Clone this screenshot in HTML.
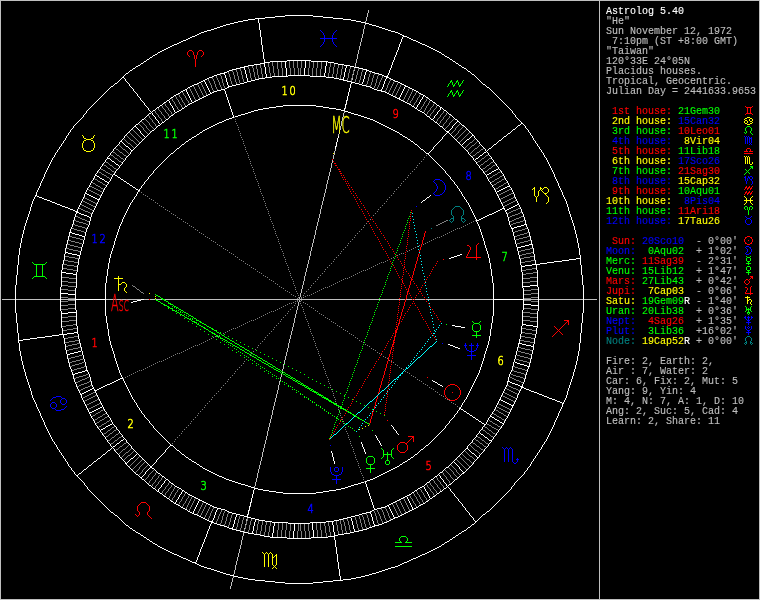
<!DOCTYPE html>
<html><head><meta charset="utf-8"><title>Astrolog 5.40</title>
<style>
html,body{margin:0;padding:0;background:#000;}
#c{position:relative;width:760px;height:600px;overflow:hidden;background:#000;}
#side{will-change:transform;-webkit-text-stroke:0.12px;position:absolute;left:606px;top:7px;margin:0;font-family:"Liberation Mono",monospace;font-size:10px;line-height:10px;color:#BFBFBF;white-space:pre;letter-spacing:0;}
text{font-family:"DejaVu Sans","Liberation Sans",sans-serif;font-weight:200;text-anchor:middle;}
text.hn{font-size:12.3px;stroke-width:0.55px;vector-effect:non-scaling-stroke;}
text.ob{font-size:23.3px;stroke-width:0.35px;vector-effect:non-scaling-stroke;}
</style></head><body><div id="c">
<svg width="760" height="600" viewBox="0 0 760 600" shape-rendering="crispEdges" style="position:absolute;left:0;top:0;will-change:transform"><path fill="#BFBFBF" d="M0 0h760v1h-760zM365 24h1v1h-1zM354 70h1v1h-1zM353 74h1v1h-1zM351 81h1v1h-1zM347 100h1v1h-1zM346 104h1v1h-1zM345 108h1v1h-1zM336 146h1v1h-1zM2 299h13v1h-13zM16 299h44v1h-44zM61 299h14v1h-14zM106 299h35v1h-35zM144 299h5v1h-5zM150 299h5v1h-5zM156 299h6v1h-6zM165 299h134v1h-134zM300 299h105v1h-105zM406 299h6v1h-6zM413 299h1v1h-1zM415 299h10v1h-10zM426 299h67v1h-67zM524 299h14v1h-14zM539 299h44v1h-44zM584 299h13v1h-13zM282 372h1v1h-1zM280 380h1v1h-1zM251 502h1v1h-1zM250 506h1v1h-1zM249 510h1v1h-1zM248 514h1v1h-1zM245 524h1v1h-1zM244 528h1v1h-1zM233 574h1v1h-1zM0 599h760v1h-760zM0 1h1v598h-1zM230 586h1v3h-1zM231 582h1v4h-1zM232 578h1v4h-1zM233 576h1v2h-1zM234 570h1v4h-1zM235 565h1v5h-1zM236 561h1v4h-1zM237 557h1v4h-1zM238 553h1v4h-1zM239 549h1v4h-1zM240 545h1v4h-1zM241 540h1v5h-1zM242 536h1v4h-1zM243 532h1v4h-1zM246 519h1v2h-1zM254 486h1v2h-1zM255 482h1v4h-1zM256 478h1v4h-1zM257 473h1v5h-1zM258 469h1v4h-1zM259 465h1v4h-1zM260 461h1v4h-1zM261 457h1v4h-1zM262 452h1v5h-1zM263 448h1v4h-1zM264 444h1v4h-1zM265 440h1v4h-1zM266 436h1v4h-1zM267 431h1v5h-1zM268 427h1v4h-1zM269 423h1v4h-1zM270 419h1v4h-1zM271 415h1v4h-1zM272 410h1v5h-1zM273 406h1v4h-1zM274 402h1v4h-1zM275 398h1v4h-1zM276 394h1v4h-1zM277 390h1v4h-1zM278 385h1v5h-1zM279 381h1v4h-1zM280 377h1v2h-1zM281 374h1v3h-1zM282 369h1v2h-1zM283 364h1v5h-1zM284 360h1v4h-1zM285 356h1v4h-1zM286 352h1v4h-1zM287 348h1v4h-1zM288 343h1v5h-1zM289 339h1v4h-1zM290 335h1v4h-1zM291 331h1v4h-1zM292 327h1v4h-1zM293 323h1v4h-1zM294 318h1v5h-1zM295 314h1v4h-1zM296 310h1v4h-1zM297 306h1v4h-1zM298 302h1v4h-1zM299 297h1v2h-1zM299 300h1v2h-1zM300 293h1v4h-1zM301 289h1v4h-1zM302 285h1v4h-1zM303 281h1v4h-1zM304 276h1v5h-1zM305 272h1v4h-1zM306 268h1v4h-1zM307 264h1v4h-1zM308 260h1v4h-1zM309 256h1v4h-1zM310 251h1v5h-1zM311 247h1v4h-1zM312 243h1v4h-1zM313 239h1v4h-1zM314 235h1v4h-1zM315 230h1v5h-1zM316 226h1v4h-1zM317 222h1v4h-1zM318 218h1v4h-1zM319 214h1v4h-1zM320 209h1v5h-1zM321 205h1v4h-1zM322 201h1v4h-1zM323 197h1v4h-1zM324 193h1v4h-1zM325 189h1v4h-1zM326 184h1v5h-1zM327 180h1v4h-1zM328 176h1v4h-1zM329 172h1v4h-1zM330 168h1v4h-1zM331 163h1v5h-1zM332 160h1v3h-1zM333 155h1v4h-1zM334 151h1v4h-1zM335 149h1v2h-1zM338 134h1v2h-1zM339 130h1v4h-1zM340 126h1v4h-1zM341 121h1v5h-1zM342 117h1v4h-1zM343 113h1v4h-1zM344 111h1v2h-1zM352 78h1v2h-1zM355 63h1v4h-1zM356 59h1v4h-1zM357 54h1v5h-1zM358 50h1v4h-1zM359 46h1v4h-1zM360 42h1v4h-1zM361 38h1v4h-1zM362 34h1v4h-1zM363 29h1v5h-1zM364 25h1v4h-1zM365 21h1v2h-1zM366 17h1v4h-1zM367 13h1v4h-1zM368 10h1v3h-1zM599 1h1v598h-1zM759 1h1v598h-1z"/><path fill="#7F7F7F" d="M394 81h1v1h-1zM197 84h1v1h-1zM232 84h1v1h-1zM401 84h1v1h-1zM193 86h1v1h-1zM189 88h1v1h-1zM409 88h1v1h-1zM217 89h1v1h-1zM182 92h1v1h-1zM388 92h1v1h-1zM416 92h1v1h-1zM178 94h1v1h-1zM420 94h1v1h-1zM184 95h1v1h-1zM414 95h1v1h-1zM175 96h1v1h-1zM180 97h1v1h-1zM418 97h1v1h-1zM171 98h1v1h-1zM427 98h1v1h-1zM177 99h1v1h-1zM187 100h1v1h-1zM411 100h1v1h-1zM173 101h1v1h-1zM425 101h1v1h-1zM183 102h1v1h-1zM415 102h1v1h-1zM164 103h1v1h-1zM189 103h1v1h-1zM409 103h1v1h-1zM434 103h1v1h-1zM180 104h1v1h-1zM185 105h1v1h-1zM413 105h1v1h-1zM427 105h1v1h-1zM166 106h1v1h-1zM176 106h1v1h-1zM422 106h1v1h-1zM432 106h1v1h-1zM167 107h1v1h-1zM182 107h1v1h-1zM431 107h1v1h-1zM163 108h1v1h-1zM435 108h1v1h-1zM164 109h1v1h-1zM178 109h1v1h-1zM420 109h1v1h-1zM434 109h1v1h-1zM159 110h1v1h-1zM169 110h1v1h-1zM429 110h1v1h-1zM160 111h1v1h-1zM170 111h1v1h-1zM428 111h1v1h-1zM166 112h1v1h-1zM432 112h1v1h-1zM156 113h1v1h-1zM167 113h1v1h-1zM431 113h1v1h-1zM442 113h1v1h-1zM157 114h1v1h-1zM162 114h1v1h-1zM172 114h1v1h-1zM426 114h1v1h-1zM441 114h1v1h-1zM148 115h1v1h-1zM163 115h1v1h-1zM445 115h1v1h-1zM450 115h1v1h-1zM169 116h1v1h-1zM429 116h1v1h-1zM444 116h1v1h-1zM159 117h1v1h-1zM234 117h1v1h-1zM439 117h1v1h-1zM150 118h1v1h-1zM160 118h1v1h-1zM165 118h1v1h-1zM438 118h1v1h-1zM448 118h1v1h-1zM145 119h1v1h-1zM151 119h1v1h-1zM235 119h1v1h-1zM442 119h1v1h-1zM447 119h1v1h-1zM453 119h1v1h-1zM146 120h1v1h-1zM441 120h1v1h-1zM452 120h1v1h-1zM141 121h1v1h-1zM147 121h1v1h-1zM162 121h1v1h-1zM235 121h1v1h-1zM436 121h1v1h-1zM451 121h1v1h-1zM142 122h1v1h-1zM148 122h1v1h-1zM153 122h1v1h-1zM445 122h1v1h-1zM450 122h1v1h-1zM143 123h1v1h-1zM154 123h1v1h-1zM236 123h1v1h-1zM439 123h1v1h-1zM444 123h1v1h-1zM139 124h1v1h-1zM144 124h1v1h-1zM459 124h1v1h-1zM140 125h1v1h-1zM145 125h1v1h-1zM150 125h1v1h-1zM237 125h1v1h-1zM448 125h1v1h-1zM458 125h1v1h-1zM141 126h1v1h-1zM151 126h1v1h-1zM156 126h1v1h-1zM442 126h1v1h-1zM447 126h1v1h-1zM457 126h1v1h-1zM463 126h1v1h-1zM142 127h1v1h-1zM152 127h1v1h-1zM238 127h1v1h-1zM446 127h1v1h-1zM456 127h1v1h-1zM462 127h1v1h-1zM147 128h1v1h-1zM153 128h1v1h-1zM445 128h1v1h-1zM461 128h1v1h-1zM132 129h1v1h-1zM148 129h1v1h-1zM238 129h1v1h-1zM460 129h1v1h-1zM466 129h1v1h-1zM133 130h1v1h-1zM144 130h1v1h-1zM149 130h1v1h-1zM454 130h1v1h-1zM459 130h1v1h-1zM465 130h1v1h-1zM134 131h1v1h-1zM145 131h1v1h-1zM150 131h1v1h-1zM239 131h1v1h-1zM453 131h1v1h-1zM464 131h1v1h-1zM129 132h1v1h-1zM135 132h1v1h-1zM146 132h1v1h-1zM452 132h1v1h-1zM463 132h1v1h-1zM469 132h1v1h-1zM130 133h1v1h-1zM136 133h1v1h-1zM147 133h1v1h-1zM240 133h1v1h-1zM451 133h1v1h-1zM457 133h1v1h-1zM462 133h1v1h-1zM468 133h1v1h-1zM131 134h1v1h-1zM137 134h1v1h-1zM456 134h1v1h-1zM461 134h1v1h-1zM467 134h1v1h-1zM126 135h1v1h-1zM132 135h1v1h-1zM138 135h1v1h-1zM240 135h1v1h-1zM455 135h1v1h-1zM460 135h1v1h-1zM466 135h1v1h-1zM127 136h1v1h-1zM133 136h1v1h-1zM139 136h1v1h-1zM454 136h1v1h-1zM459 136h1v1h-1zM465 136h1v1h-1zM128 137h1v1h-1zM134 137h1v1h-1zM140 137h1v1h-1zM241 137h1v1h-1zM458 137h1v1h-1zM464 137h1v1h-1zM129 138h1v1h-1zM135 138h1v1h-1zM141 138h1v1h-1zM457 138h1v1h-1zM463 138h1v1h-1zM124 139h1v1h-1zM130 139h1v1h-1zM136 139h1v1h-1zM142 139h1v1h-1zM242 139h1v1h-1zM456 139h1v1h-1zM462 139h1v1h-1zM474 139h1v1h-1zM125 140h1v1h-1zM131 140h2v1h-2zM137 140h1v1h-1zM461 140h1v1h-1zM473 140h1v1h-1zM126 141h1v1h-1zM133 141h1v1h-1zM138 141h1v1h-1zM243 141h1v1h-1zM460 141h1v1h-1zM472 141h1v1h-1zM477 141h1v1h-1zM127 142h1v1h-1zM134 142h1v1h-1zM139 142h1v1h-1zM459 142h1v1h-1zM470 142h2v1h-2zM476 142h1v1h-1zM128 143h2v1h-2zM135 143h1v1h-1zM243 143h1v1h-1zM469 143h1v1h-1zM475 143h1v1h-1zM130 144h1v1h-1zM136 144h1v1h-1zM468 144h1v1h-1zM474 144h1v1h-1zM119 145h1v1h-1zM131 145h1v1h-1zM244 145h1v1h-1zM467 145h1v1h-1zM472 145h2v1h-2zM479 145h1v1h-1zM120 146h1v1h-1zM132 146h1v1h-1zM466 146h1v1h-1zM471 146h1v1h-1zM478 146h1v1h-1zM121 147h1v1h-1zM133 147h1v1h-1zM245 147h1v1h-1zM465 147h1v1h-1zM470 147h1v1h-1zM477 147h1v1h-1zM115 148h1v1h-1zM122 148h1v1h-1zM469 148h1v1h-1zM475 148h2v1h-2zM483 148h1v1h-1zM116 149h2v1h-2zM123 149h2v1h-2zM245 149h1v1h-1zM468 149h1v1h-1zM474 149h1v1h-1zM481 149h2v1h-2zM118 150h1v1h-1zM125 150h1v1h-1zM467 150h1v1h-1zM473 150h1v1h-1zM480 150h1v1h-1zM119 151h1v1h-1zM126 151h1v1h-1zM246 151h1v1h-1zM472 151h1v1h-1zM479 151h1v1h-1zM113 152h2v1h-2zM120 152h2v1h-2zM127 152h1v1h-1zM471 152h1v1h-1zM477 152h2v1h-2zM115 153h1v1h-1zM122 153h1v1h-1zM128 153h1v1h-1zM247 153h1v1h-1zM470 153h1v1h-1zM476 153h1v1h-1zM116 154h1v1h-1zM123 154h1v1h-1zM475 154h1v1h-1zM111 155h2v1h-2zM117 155h2v1h-2zM124 155h2v1h-2zM248 155h1v1h-1zM426 155h1v1h-1zM473 155h2v1h-2zM486 155h2v1h-2zM113 156h1v1h-1zM119 156h1v1h-1zM126 156h1v1h-1zM472 156h1v1h-1zM485 156h1v1h-1zM114 157h1v1h-1zM120 157h1v1h-1zM248 157h1v1h-1zM424 157h1v1h-1zM484 157h1v1h-1zM115 158h2v1h-2zM121 158h2v1h-2zM482 158h2v1h-2zM489 158h2v1h-2zM117 159h1v1h-1zM123 159h1v1h-1zM249 159h1v1h-1zM423 159h1v1h-1zM481 159h1v1h-1zM488 159h1v1h-1zM118 160h1v1h-1zM480 160h1v1h-1zM487 160h1v1h-1zM119 161h2v1h-2zM250 161h1v1h-1zM421 161h1v1h-1zM478 161h2v1h-2zM485 161h2v1h-2zM106 162h2v1h-2zM121 162h1v1h-1zM477 162h1v1h-1zM484 162h1v1h-1zM491 162h2v1h-2zM108 163h1v1h-1zM250 163h1v1h-1zM419 163h1v1h-1zM483 163h1v1h-1zM490 163h1v1h-1zM103 164h1v1h-1zM109 164h1v1h-1zM481 164h2v1h-2zM489 164h1v1h-1zM495 164h1v1h-1zM104 165h2v1h-2zM110 165h2v1h-2zM251 165h1v1h-1zM417 165h1v1h-1zM480 165h1v1h-1zM487 165h2v1h-2zM493 165h2v1h-2zM106 166h1v1h-1zM112 166h1v1h-1zM486 166h1v1h-1zM492 166h1v1h-1zM107 167h1v1h-1zM113 167h1v1h-1zM252 167h1v1h-1zM416 167h1v1h-1zM485 167h1v1h-1zM491 167h1v1h-1zM108 168h2v1h-2zM114 168h2v1h-2zM483 168h2v1h-2zM489 168h2v1h-2zM101 169h2v1h-2zM110 169h1v1h-1zM116 169h1v1h-1zM253 169h1v1h-1zM414 169h1v1h-1zM482 169h1v1h-1zM488 169h1v1h-1zM103 170h2v1h-2zM111 170h1v1h-1zM487 170h1v1h-1zM98 171h1v1h-1zM105 171h1v1h-1zM112 171h2v1h-2zM253 171h1v1h-1zM412 171h1v1h-1zM485 171h2v1h-2zM500 171h1v1h-1zM99 172h2v1h-2zM106 172h2v1h-2zM114 172h1v1h-1zM484 172h1v1h-1zM498 172h2v1h-2zM101 173h1v1h-1zM108 173h2v1h-2zM254 173h1v1h-1zM410 173h1v1h-1zM497 173h1v1h-1zM102 174h2v1h-2zM110 174h2v1h-2zM495 174h2v1h-2zM104 175h2v1h-2zM255 175h1v1h-1zM408 175h1v1h-1zM493 175h2v1h-2zM502 175h1v1h-1zM106 176h1v1h-1zM492 176h1v1h-1zM500 176h2v1h-2zM107 177h2v1h-2zM255 177h1v1h-1zM407 177h1v1h-1zM490 177h2v1h-2zM499 177h1v1h-1zM94 178h1v1h-1zM109 178h1v1h-1zM489 178h1v1h-1zM497 178h2v1h-2zM504 178h1v1h-1zM95 179h2v1h-2zM256 179h1v1h-1zM405 179h1v1h-1zM495 179h2v1h-2zM502 179h2v1h-2zM97 180h1v1h-1zM494 180h1v1h-1zM501 180h1v1h-1zM98 181h2v1h-2zM257 181h1v1h-1zM403 181h1v1h-1zM492 181h2v1h-2zM499 181h2v1h-2zM92 182h1v1h-1zM100 182h2v1h-2zM491 182h1v1h-1zM497 182h2v1h-2zM506 182h1v1h-1zM93 183h2v1h-2zM102 183h1v1h-1zM258 183h1v1h-1zM401 183h1v1h-1zM496 183h1v1h-1zM504 183h2v1h-2zM95 184h1v1h-1zM103 184h2v1h-2zM494 184h2v1h-2zM503 184h1v1h-1zM96 185h2v1h-2zM105 185h1v1h-1zM258 185h1v1h-1zM400 185h1v1h-1zM493 185h1v1h-1zM501 185h2v1h-2zM90 186h2v1h-2zM98 186h2v1h-2zM499 186h2v1h-2zM92 187h2v1h-2zM100 187h1v1h-1zM259 187h1v1h-1zM398 187h1v1h-1zM498 187h1v1h-1zM94 188h2v1h-2zM101 188h2v1h-2zM496 188h2v1h-2zM88 189h1v1h-1zM96 189h2v1h-2zM103 189h1v1h-1zM260 189h1v1h-1zM396 189h1v1h-1zM495 189h1v1h-1zM509 189h2v1h-2zM89 190h2v1h-2zM98 190h2v1h-2zM507 190h2v1h-2zM91 191h2v1h-2zM100 191h2v1h-2zM139 191h1v1h-1zM260 191h1v1h-1zM394 191h1v1h-1zM505 191h2v1h-2zM93 192h2v1h-2zM141 192h1v1h-1zM503 192h2v1h-2zM95 193h2v1h-2zM261 193h1v1h-1zM393 193h1v1h-1zM501 193h2v1h-2zM511 193h2v1h-2zM97 194h2v1h-2zM143 194h1v1h-1zM499 194h2v1h-2zM509 194h2v1h-2zM99 195h2v1h-2zM145 195h1v1h-1zM262 195h1v1h-1zM391 195h1v1h-1zM498 195h1v1h-1zM507 195h2v1h-2zM147 196h1v1h-1zM505 196h2v1h-2zM84 197h1v1h-1zM263 197h1v1h-1zM389 197h1v1h-1zM503 197h2v1h-2zM513 197h2v1h-2zM85 198h2v1h-2zM149 198h1v1h-1zM501 198h2v1h-2zM511 198h2v1h-2zM87 199h2v1h-2zM151 199h1v1h-1zM263 199h1v1h-1zM387 199h1v1h-1zM500 199h1v1h-1zM509 199h2v1h-2zM89 200h2v1h-2zM153 200h1v1h-1zM507 200h2v1h-2zM515 200h1v1h-1zM83 201h2v1h-2zM91 201h2v1h-2zM264 201h1v1h-1zM386 201h1v1h-1zM505 201h2v1h-2zM513 201h2v1h-2zM85 202h2v1h-2zM93 202h2v1h-2zM155 202h1v1h-1zM503 202h2v1h-2zM511 202h2v1h-2zM87 203h2v1h-2zM95 203h2v1h-2zM157 203h1v1h-1zM265 203h1v1h-1zM384 203h1v1h-1zM502 203h1v1h-1zM509 203h2v1h-2zM81 204h1v1h-1zM89 204h2v1h-2zM507 204h2v1h-2zM82 205h2v1h-2zM91 205h2v1h-2zM159 205h1v1h-1zM265 205h1v1h-1zM382 205h1v1h-1zM505 205h2v1h-2zM84 206h2v1h-2zM93 206h2v1h-2zM161 206h1v1h-1zM504 206h1v1h-1zM86 207h2v1h-2zM163 207h1v1h-1zM266 207h1v1h-1zM380 207h1v1h-1zM79 208h2v1h-2zM88 208h2v1h-2zM518 208h2v1h-2zM81 209h2v1h-2zM90 209h2v1h-2zM165 209h1v1h-1zM267 209h1v1h-1zM378 209h1v1h-1zM516 209h2v1h-2zM83 210h2v1h-2zM92 210h1v1h-1zM167 210h1v1h-1zM513 210h3v1h-3zM85 211h3v1h-3zM169 211h1v1h-1zM268 211h1v1h-1zM377 211h1v1h-1zM511 211h2v1h-2zM88 212h2v1h-2zM509 212h2v1h-2zM520 212h2v1h-2zM90 213h2v1h-2zM171 213h1v1h-1zM268 213h1v1h-1zM375 213h1v1h-1zM507 213h2v1h-2zM518 213h2v1h-2zM173 214h1v1h-1zM515 214h3v1h-3zM175 215h1v1h-1zM269 215h1v1h-1zM373 215h1v1h-1zM512 215h3v1h-3zM76 216h2v1h-2zM510 216h2v1h-2zM521 216h2v1h-2zM78 217h2v1h-2zM177 217h1v1h-1zM270 217h1v1h-1zM509 217h1v1h-1zM519 217h2v1h-2zM80 218h2v1h-2zM179 218h1v1h-1zM516 218h3v1h-3zM82 219h3v1h-3zM181 219h1v1h-1zM270 219h1v1h-1zM370 219h1v1h-1zM514 219h2v1h-2zM74 220h2v1h-2zM85 220h2v1h-2zM446 220h2v1h-2zM475 220h1v1h-1zM512 220h2v1h-2zM523 220h2v1h-2zM76 221h3v1h-3zM87 221h2v1h-2zM183 221h1v1h-1zM271 221h1v1h-1zM368 221h1v1h-1zM444 221h2v1h-2zM473 221h1v1h-1zM510 221h2v1h-2zM520 221h3v1h-3zM79 222h4v1h-4zM185 222h1v1h-1zM442 222h2v1h-2zM471 222h1v1h-1zM516 222h4v1h-4zM83 223h3v1h-3zM187 223h1v1h-1zM272 223h1v1h-1zM366 223h1v1h-1zM440 223h2v1h-2zM469 223h1v1h-1zM513 223h3v1h-3zM73 224h2v1h-2zM86 224h2v1h-2zM438 224h2v1h-2zM467 224h1v1h-1zM511 224h2v1h-2zM75 225h3v1h-3zM189 225h1v1h-1zM273 225h1v1h-1zM364 225h1v1h-1zM436 225h2v1h-2zM465 225h1v1h-1zM78 226h4v1h-4zM191 226h1v1h-1zM463 226h1v1h-1zM82 227h3v1h-3zM193 227h1v1h-1zM273 227h1v1h-1zM363 227h1v1h-1zM461 227h1v1h-1zM72 228h2v1h-2zM85 228h2v1h-2zM457 228h1v1h-1zM459 228h1v1h-1zM525 228h2v1h-2zM74 229h3v1h-3zM195 229h1v1h-1zM274 229h1v1h-1zM361 229h1v1h-1zM455 229h1v1h-1zM522 229h3v1h-3zM77 230h4v1h-4zM197 230h1v1h-1zM453 230h1v1h-1zM518 230h4v1h-4zM81 231h3v1h-3zM275 231h1v1h-1zM359 231h1v1h-1zM451 231h1v1h-1zM515 231h3v1h-3zM84 232h1v1h-1zM199 232h1v1h-1zM449 232h1v1h-1zM514 232h1v1h-1zM527 232h2v1h-2zM201 233h1v1h-1zM275 233h1v1h-1zM357 233h1v1h-1zM447 233h1v1h-1zM524 233h3v1h-3zM203 234h1v1h-1zM445 234h1v1h-1zM520 234h4v1h-4zM276 235h1v1h-1zM355 235h1v1h-1zM443 235h1v1h-1zM517 235h3v1h-3zM69 236h3v1h-3zM205 236h1v1h-1zM441 236h1v1h-1zM515 236h2v1h-2zM527 236h3v1h-3zM72 237h4v1h-4zM207 237h1v1h-1zM277 237h1v1h-1zM354 237h1v1h-1zM437 237h1v1h-1zM439 237h1v1h-1zM523 237h4v1h-4zM76 238h4v1h-4zM209 238h1v1h-1zM435 238h1v1h-1zM519 238h4v1h-4zM80 239h3v1h-3zM278 239h1v1h-1zM352 239h1v1h-1zM433 239h1v1h-1zM516 239h3v1h-3zM68 240h3v1h-3zM211 240h1v1h-1zM431 240h1v1h-1zM528 240h3v1h-3zM71 241h4v1h-4zM213 241h1v1h-1zM278 241h1v1h-1zM350 241h1v1h-1zM429 241h1v1h-1zM524 241h4v1h-4zM75 242h4v1h-4zM215 242h1v1h-1zM427 242h1v1h-1zM520 242h4v1h-4zM79 243h3v1h-3zM279 243h1v1h-1zM348 243h1v1h-1zM425 243h1v1h-1zM517 243h3v1h-3zM67 244h3v1h-3zM217 244h1v1h-1zM423 244h1v1h-1zM70 245h4v1h-4zM219 245h1v1h-1zM280 245h1v1h-1zM347 245h1v1h-1zM419 245h1v1h-1zM74 246h4v1h-4zM221 246h1v1h-1zM417 246h1v1h-1zM78 247h3v1h-3zM280 247h1v1h-1zM345 247h1v1h-1zM415 247h1v1h-1zM66 248h3v1h-3zM223 248h1v1h-1zM413 248h1v1h-1zM530 248h3v1h-3zM69 249h4v1h-4zM225 249h1v1h-1zM281 249h1v1h-1zM343 249h1v1h-1zM411 249h1v1h-1zM525 249h5v1h-5zM73 250h5v1h-5zM227 250h1v1h-1zM409 250h1v1h-1zM521 250h4v1h-4zM78 251h2v1h-2zM282 251h1v1h-1zM341 251h1v1h-1zM407 251h1v1h-1zM519 251h2v1h-2zM229 252h1v1h-1zM531 252h2v1h-2zM231 253h1v1h-1zM283 253h1v1h-1zM340 253h1v1h-1zM401 253h1v1h-1zM403 253h1v1h-1zM526 253h5v1h-5zM233 254h1v1h-1zM399 254h1v1h-1zM522 254h4v1h-4zM283 255h1v1h-1zM338 255h1v1h-1zM397 255h1v1h-1zM520 255h2v1h-2zM65 256h4v1h-4zM235 256h1v1h-1zM530 256h4v1h-4zM69 257h6v1h-6zM237 257h1v1h-1zM284 257h1v1h-1zM336 257h1v1h-1zM393 257h1v1h-1zM524 257h6v1h-6zM75 258h4v1h-4zM391 258h1v1h-1zM520 258h4v1h-4zM239 259h1v1h-1zM285 259h1v1h-1zM334 259h1v1h-1zM64 260h4v1h-4zM241 260h1v1h-1zM387 260h1v1h-1zM531 260h4v1h-4zM68 261h6v1h-6zM243 261h1v1h-1zM285 261h1v1h-1zM333 261h1v1h-1zM385 261h1v1h-1zM525 261h6v1h-6zM74 262h4v1h-4zM381 262h1v1h-1zM383 262h1v1h-1zM521 262h4v1h-4zM245 263h1v1h-1zM286 263h1v1h-1zM331 263h1v1h-1zM379 263h1v1h-1zM63 264h4v1h-4zM247 264h1v1h-1zM377 264h1v1h-1zM67 265h7v1h-7zM249 265h1v1h-1zM287 265h1v1h-1zM329 265h1v1h-1zM375 265h1v1h-1zM74 266h3v1h-3zM373 266h1v1h-1zM251 267h1v1h-1zM288 267h1v1h-1zM327 267h1v1h-1zM371 267h1v1h-1zM63 268h4v1h-4zM253 268h1v1h-1zM369 268h1v1h-1zM532 268h4v1h-4zM67 269h6v1h-6zM255 269h1v1h-1zM288 269h1v1h-1zM325 269h1v1h-1zM367 269h1v1h-1zM526 269h6v1h-6zM73 270h4v1h-4zM363 270h1v1h-1zM365 270h1v1h-1zM522 270h4v1h-4zM257 271h1v1h-1zM289 271h1v1h-1zM324 271h1v1h-1zM361 271h1v1h-1zM259 272h1v1h-1zM359 272h1v1h-1zM533 272h4v1h-4zM261 273h1v1h-1zM290 273h1v1h-1zM322 273h1v1h-1zM357 273h1v1h-1zM526 273h7v1h-7zM355 274h1v1h-1zM523 274h3v1h-3zM263 275h1v1h-1zM290 275h1v1h-1zM320 275h1v1h-1zM353 275h1v1h-1zM265 276h1v1h-1zM351 276h1v1h-1zM62 277h7v1h-7zM267 277h1v1h-1zM291 277h1v1h-1zM318 277h1v1h-1zM349 277h1v1h-1zM530 277h7v1h-7zM69 278h7v1h-7zM345 278h1v1h-1zM347 278h1v1h-1zM523 278h7v1h-7zM269 279h1v1h-1zM292 279h1v1h-1zM317 279h1v1h-1zM343 279h1v1h-1zM271 280h1v1h-1zM341 280h1v1h-1zM62 281h6v1h-6zM273 281h1v1h-1zM293 281h1v1h-1zM315 281h1v1h-1zM339 281h1v1h-1zM530 281h7v1h-7zM68 282h8v1h-8zM337 282h1v1h-1zM523 282h7v1h-7zM275 283h1v1h-1zM293 283h1v1h-1zM313 283h1v1h-1zM335 283h1v1h-1zM277 284h1v1h-1zM333 284h1v1h-1zM62 285h6v1h-6zM132 285h1v1h-1zM294 285h1v1h-1zM311 285h1v1h-1zM331 285h1v1h-1zM68 286h8v1h-8zM133 286h2v1h-2zM279 286h1v1h-1zM329 286h1v1h-1zM135 287h1v1h-1zM281 287h1v1h-1zM295 287h1v1h-1zM310 287h1v1h-1zM325 287h1v1h-1zM327 287h1v1h-1zM136 288h1v1h-1zM283 288h1v1h-1zM323 288h1v1h-1zM61 289h7v1h-7zM137 289h2v1h-2zM295 289h1v1h-1zM308 289h1v1h-1zM321 289h1v1h-1zM531 289h7v1h-7zM68 290h7v1h-7zM139 290h1v1h-1zM285 290h1v1h-1zM319 290h1v1h-1zM524 290h7v1h-7zM140 291h1v1h-1zM287 291h1v1h-1zM296 291h1v1h-1zM306 291h1v1h-1zM317 291h1v1h-1zM141 292h2v1h-2zM289 292h1v1h-1zM315 292h1v1h-1zM143 293h1v1h-1zM297 293h1v1h-1zM304 293h1v1h-1zM313 293h1v1h-1zM531 293h7v1h-7zM291 294h1v1h-1zM311 294h1v1h-1zM524 294h7v1h-7zM293 295h1v1h-1zM298 295h1v1h-1zM303 295h1v1h-1zM307 295h1v1h-1zM309 295h1v1h-1zM295 296h1v1h-1zM305 296h1v1h-1zM61 297h7v1h-7zM298 297h1v1h-1zM303 297h1v1h-1zM531 297h7v1h-7zM68 298h7v1h-7zM297 298h1v1h-1zM524 298h7v1h-7zM299 299h1v1h-1zM68 300h7v1h-7zM301 300h1v1h-1zM524 300h7v1h-7zM61 301h7v1h-7zM295 301h1v1h-1zM300 301h1v1h-1zM531 301h7v1h-7zM293 302h1v1h-1zM303 302h1v1h-1zM289 303h1v1h-1zM291 303h1v1h-1zM295 303h1v1h-1zM300 303h1v1h-1zM305 303h1v1h-1zM68 304h7v1h-7zM287 304h1v1h-1zM307 304h1v1h-1zM61 305h7v1h-7zM285 305h1v1h-1zM294 305h1v1h-1zM301 305h1v1h-1zM283 306h1v1h-1zM309 306h1v1h-1zM281 307h1v1h-1zM292 307h1v1h-1zM302 307h1v1h-1zM311 307h1v1h-1zM68 308h7v1h-7zM279 308h1v1h-1zM313 308h1v1h-1zM524 308h7v1h-7zM61 309h7v1h-7zM277 309h1v1h-1zM290 309h1v1h-1zM303 309h1v1h-1zM531 309h7v1h-7zM275 310h1v1h-1zM315 310h1v1h-1zM271 311h1v1h-1zM273 311h1v1h-1zM288 311h1v1h-1zM303 311h1v1h-1zM317 311h1v1h-1zM269 312h1v1h-1zM523 312h7v1h-7zM267 313h1v1h-1zM287 313h1v1h-1zM304 313h1v1h-1zM319 313h1v1h-1zM530 313h7v1h-7zM265 314h1v1h-1zM321 314h1v1h-1zM263 315h1v1h-1zM285 315h1v1h-1zM305 315h1v1h-1zM323 315h1v1h-1zM68 316h8v1h-8zM261 316h1v1h-1zM523 316h7v1h-7zM62 317h6v1h-6zM259 317h1v1h-1zM283 317h1v1h-1zM305 317h1v1h-1zM325 317h1v1h-1zM530 317h7v1h-7zM257 318h1v1h-1zM327 318h1v1h-1zM255 319h1v1h-1zM281 319h1v1h-1zM306 319h1v1h-1zM329 319h1v1h-1zM69 320h7v1h-7zM251 320h1v1h-1zM253 320h1v1h-1zM523 320h7v1h-7zM62 321h7v1h-7zM249 321h1v1h-1zM280 321h1v1h-1zM307 321h1v1h-1zM331 321h1v1h-1zM530 321h7v1h-7zM247 322h1v1h-1zM333 322h1v1h-1zM245 323h1v1h-1zM278 323h1v1h-1zM308 323h1v1h-1zM335 323h1v1h-1zM73 324h3v1h-3zM243 324h1v1h-1zM66 325h7v1h-7zM241 325h1v1h-1zM276 325h1v1h-1zM308 325h1v1h-1zM337 325h1v1h-1zM62 326h4v1h-4zM239 326h1v1h-1zM339 326h1v1h-1zM237 327h1v1h-1zM274 327h1v1h-1zM309 327h1v1h-1zM341 327h1v1h-1zM73 328h4v1h-4zM233 328h1v1h-1zM235 328h1v1h-1zM522 328h4v1h-4zM67 329h6v1h-6zM231 329h1v1h-1zM273 329h1v1h-1zM310 329h1v1h-1zM343 329h1v1h-1zM526 329h6v1h-6zM63 330h4v1h-4zM229 330h1v1h-1zM345 330h1v1h-1zM532 330h4v1h-4zM227 331h1v1h-1zM271 331h1v1h-1zM310 331h1v1h-1zM347 331h1v1h-1zM225 332h1v1h-1zM522 332h3v1h-3zM223 333h1v1h-1zM269 333h1v1h-1zM311 333h1v1h-1zM349 333h1v1h-1zM525 333h7v1h-7zM351 334h1v1h-1zM532 334h3v1h-3zM219 335h1v1h-1zM267 335h1v1h-1zM312 335h1v1h-1zM353 335h1v1h-1zM74 336h4v1h-4zM215 336h1v1h-1zM217 336h1v1h-1zM521 336h4v1h-4zM68 337h6v1h-6zM213 337h1v1h-1zM265 337h1v1h-1zM313 337h1v1h-1zM355 337h1v1h-1zM525 337h6v1h-6zM65 338h3v1h-3zM211 338h1v1h-1zM357 338h1v1h-1zM531 338h3v1h-3zM209 339h1v1h-1zM264 339h1v1h-1zM313 339h1v1h-1zM75 340h4v1h-4zM207 340h1v1h-1zM359 340h1v1h-1zM520 340h4v1h-4zM69 341h6v1h-6zM205 341h1v1h-1zM262 341h1v1h-1zM314 341h1v1h-1zM361 341h1v1h-1zM524 341h6v1h-6zM65 342h4v1h-4zM203 342h1v1h-1zM363 342h1v1h-1zM530 342h4v1h-4zM77 343h3v1h-3zM201 343h1v1h-1zM260 343h1v1h-1zM315 343h1v1h-1zM72 344h5v1h-5zM199 344h1v1h-1zM365 344h1v1h-1zM68 345h4v1h-4zM195 345h1v1h-1zM197 345h1v1h-1zM258 345h1v1h-1zM315 345h1v1h-1zM367 345h1v1h-1zM66 346h2v1h-2zM193 346h1v1h-1zM369 346h1v1h-1zM78 347h3v1h-3zM191 347h1v1h-1zM257 347h1v1h-1zM316 347h1v1h-1zM518 347h3v1h-3zM73 348h5v1h-5zM189 348h1v1h-1zM371 348h1v1h-1zM521 348h4v1h-4zM69 349h4v1h-4zM187 349h1v1h-1zM255 349h1v1h-1zM317 349h1v1h-1zM373 349h1v1h-1zM525 349h5v1h-5zM67 350h2v1h-2zM185 350h1v1h-1zM375 350h1v1h-1zM530 350h2v1h-2zM183 351h1v1h-1zM253 351h1v1h-1zM318 351h1v1h-1zM518 351h3v1h-3zM181 352h1v1h-1zM377 352h1v1h-1zM521 352h4v1h-4zM177 353h1v1h-1zM179 353h1v1h-1zM251 353h1v1h-1zM318 353h1v1h-1zM379 353h1v1h-1zM525 353h4v1h-4zM175 354h1v1h-1zM381 354h1v1h-1zM529 354h2v1h-2zM79 355h3v1h-3zM173 355h1v1h-1zM250 355h1v1h-1zM319 355h1v1h-1zM517 355h3v1h-3zM75 356h4v1h-4zM171 356h1v1h-1zM383 356h1v1h-1zM520 356h4v1h-4zM71 357h4v1h-4zM169 357h1v1h-1zM320 357h1v1h-1zM385 357h1v1h-1zM524 357h4v1h-4zM68 358h3v1h-3zM167 358h1v1h-1zM387 358h1v1h-1zM528 358h3v1h-3zM80 359h3v1h-3zM165 359h1v1h-1zM246 359h1v1h-1zM320 359h1v1h-1zM516 359h3v1h-3zM76 360h4v1h-4zM163 360h1v1h-1zM389 360h1v1h-1zM519 360h4v1h-4zM72 361h4v1h-4zM159 361h1v1h-1zM161 361h1v1h-1zM244 361h1v1h-1zM321 361h1v1h-1zM391 361h1v1h-1zM523 361h4v1h-4zM69 362h3v1h-3zM82 362h2v1h-2zM157 362h1v1h-1zM393 362h1v1h-1zM527 362h3v1h-3zM79 363h3v1h-3zM155 363h1v1h-1zM243 363h1v1h-1zM322 363h1v1h-1zM75 364h4v1h-4zM153 364h1v1h-1zM395 364h1v1h-1zM72 365h3v1h-3zM151 365h1v1h-1zM241 365h1v1h-1zM323 365h1v1h-1zM397 365h1v1h-1zM70 366h2v1h-2zM84 366h2v1h-2zM149 366h1v1h-1zM513 366h2v1h-2zM81 367h3v1h-3zM147 367h1v1h-1zM239 367h1v1h-1zM323 367h1v1h-1zM399 367h1v1h-1zM515 367h3v1h-3zM77 368h4v1h-4zM145 368h1v1h-1zM401 368h1v1h-1zM518 368h4v1h-4zM74 369h3v1h-3zM143 369h1v1h-1zM237 369h1v1h-1zM324 369h1v1h-1zM403 369h1v1h-1zM522 369h3v1h-3zM72 370h2v1h-2zM139 370h1v1h-1zM141 370h1v1h-1zM512 370h2v1h-2zM525 370h2v1h-2zM137 371h1v1h-1zM235 371h1v1h-1zM325 371h1v1h-1zM405 371h1v1h-1zM514 371h3v1h-3zM135 372h1v1h-1zM407 372h1v1h-1zM517 372h4v1h-4zM133 373h1v1h-1zM234 373h1v1h-1zM325 373h1v1h-1zM409 373h1v1h-1zM521 373h3v1h-3zM86 374h2v1h-2zM131 374h1v1h-1zM511 374h2v1h-2zM524 374h2v1h-2zM83 375h3v1h-3zM129 375h1v1h-1zM232 375h1v1h-1zM326 375h1v1h-1zM411 375h1v1h-1zM513 375h3v1h-3zM79 376h4v1h-4zM127 376h1v1h-1zM413 376h1v1h-1zM516 376h4v1h-4zM76 377h3v1h-3zM87 377h2v1h-2zM125 377h1v1h-1zM230 377h1v1h-1zM327 377h1v1h-1zM415 377h1v1h-1zM510 377h2v1h-2zM520 377h3v1h-3zM74 378h2v1h-2zM85 378h2v1h-2zM123 378h1v1h-1zM512 378h2v1h-2zM523 378h2v1h-2zM82 379h3v1h-3zM228 379h1v1h-1zM328 379h1v1h-1zM417 379h1v1h-1zM514 379h2v1h-2zM80 380h2v1h-2zM419 380h1v1h-1zM516 380h3v1h-3zM78 381h2v1h-2zM89 381h2v1h-2zM227 381h1v1h-1zM328 381h1v1h-1zM421 381h1v1h-1zM519 381h2v1h-2zM76 382h2v1h-2zM87 382h2v1h-2zM521 382h2v1h-2zM84 383h3v1h-3zM225 383h1v1h-1zM329 383h1v1h-1zM423 383h1v1h-1zM81 384h3v1h-3zM425 384h1v1h-1zM79 385h2v1h-2zM90 385h2v1h-2zM223 385h1v1h-1zM330 385h1v1h-1zM427 385h1v1h-1zM507 385h2v1h-2zM77 386h2v1h-2zM88 386h2v1h-2zM509 386h2v1h-2zM85 387h3v1h-3zM221 387h1v1h-1zM330 387h1v1h-1zM429 387h1v1h-1zM511 387h2v1h-2zM83 388h2v1h-2zM431 388h1v1h-1zM506 388h1v1h-1zM513 388h3v1h-3zM81 389h2v1h-2zM220 389h1v1h-1zM331 389h1v1h-1zM433 389h1v1h-1zM507 389h2v1h-2zM516 389h2v1h-2zM79 390h2v1h-2zM509 390h2v1h-2zM518 390h2v1h-2zM218 391h1v1h-1zM332 391h1v1h-1zM435 391h1v1h-1zM511 391h2v1h-2zM93 392h2v1h-2zM437 392h1v1h-1zM504 392h1v1h-1zM513 392h2v1h-2zM91 393h2v1h-2zM216 393h1v1h-1zM333 393h1v1h-1zM505 393h2v1h-2zM515 393h2v1h-2zM89 394h2v1h-2zM439 394h1v1h-1zM507 394h2v1h-2zM517 394h1v1h-1zM87 395h2v1h-2zM95 395h2v1h-2zM214 395h1v1h-1zM333 395h1v1h-1zM441 395h1v1h-1zM502 395h1v1h-1zM509 395h2v1h-2zM85 396h2v1h-2zM93 396h2v1h-2zM443 396h1v1h-1zM503 396h2v1h-2zM511 396h2v1h-2zM83 397h2v1h-2zM91 397h2v1h-2zM212 397h1v1h-1zM334 397h1v1h-1zM505 397h2v1h-2zM513 397h2v1h-2zM89 398h2v1h-2zM445 398h1v1h-1zM507 398h2v1h-2zM515 398h1v1h-1zM87 399h2v1h-2zM97 399h2v1h-2zM211 399h1v1h-1zM335 399h1v1h-1zM447 399h1v1h-1zM509 399h2v1h-2zM85 400h2v1h-2zM95 400h2v1h-2zM449 400h1v1h-1zM511 400h2v1h-2zM84 401h1v1h-1zM93 401h2v1h-2zM209 401h1v1h-1zM335 401h1v1h-1zM513 401h2v1h-2zM91 402h2v1h-2zM451 402h1v1h-1zM89 403h2v1h-2zM99 403h2v1h-2zM207 403h1v1h-1zM336 403h1v1h-1zM453 403h1v1h-1zM498 403h1v1h-1zM87 404h2v1h-2zM97 404h2v1h-2zM455 404h1v1h-1zM499 404h2v1h-2zM86 405h1v1h-1zM95 405h2v1h-2zM205 405h1v1h-1zM501 405h2v1h-2zM93 406h2v1h-2zM457 406h1v1h-1zM503 406h2v1h-2zM91 407h2v1h-2zM204 407h1v1h-1zM338 407h1v1h-1zM459 407h1v1h-1zM497 407h2v1h-2zM505 407h2v1h-2zM89 408h2v1h-2zM499 408h2v1h-2zM507 408h2v1h-2zM88 409h1v1h-1zM103 409h1v1h-1zM202 409h1v1h-1zM338 409h1v1h-1zM495 409h1v1h-1zM501 409h2v1h-2zM509 409h2v1h-2zM101 410h2v1h-2zM496 410h2v1h-2zM503 410h2v1h-2zM100 411h1v1h-1zM200 411h1v1h-1zM339 411h1v1h-1zM498 411h1v1h-1zM505 411h2v1h-2zM98 412h2v1h-2zM499 412h2v1h-2zM507 412h2v1h-2zM96 413h2v1h-2zM105 413h1v1h-1zM198 413h1v1h-1zM340 413h1v1h-1zM493 413h1v1h-1zM501 413h2v1h-2zM95 414h1v1h-1zM103 414h2v1h-2zM494 414h2v1h-2zM503 414h1v1h-1zM93 415h2v1h-2zM102 415h1v1h-1zM197 415h1v1h-1zM340 415h1v1h-1zM496 415h1v1h-1zM504 415h2v1h-2zM92 416h1v1h-1zM100 416h2v1h-2zM107 416h1v1h-1zM497 416h2v1h-2zM506 416h1v1h-1zM98 417h2v1h-2zM105 417h2v1h-2zM195 417h1v1h-1zM341 417h1v1h-1zM499 417h2v1h-2zM97 418h1v1h-1zM104 418h1v1h-1zM501 418h1v1h-1zM95 419h2v1h-2zM102 419h2v1h-2zM193 419h1v1h-1zM342 419h1v1h-1zM502 419h2v1h-2zM94 420h1v1h-1zM100 420h2v1h-2zM109 420h1v1h-1zM489 420h1v1h-1zM504 420h1v1h-1zM99 421h1v1h-1zM107 421h2v1h-2zM191 421h1v1h-1zM343 421h1v1h-1zM490 421h2v1h-2zM97 422h2v1h-2zM106 422h1v1h-1zM492 422h1v1h-1zM96 423h1v1h-1zM104 423h2v1h-2zM190 423h1v1h-1zM343 423h1v1h-1zM493 423h2v1h-2zM102 424h2v1h-2zM487 424h2v1h-2zM495 424h2v1h-2zM101 425h1v1h-1zM188 425h1v1h-1zM489 425h2v1h-2zM497 425h1v1h-1zM99 426h2v1h-2zM114 426h1v1h-1zM484 426h1v1h-1zM491 426h1v1h-1zM498 426h2v1h-2zM98 427h1v1h-1zM112 427h2v1h-2zM186 427h1v1h-1zM345 427h1v1h-1zM485 427h2v1h-2zM492 427h2v1h-2zM500 427h1v1h-1zM111 428h1v1h-1zM487 428h1v1h-1zM494 428h2v1h-2zM110 429h1v1h-1zM116 429h1v1h-1zM184 429h1v1h-1zM345 429h1v1h-1zM482 429h1v1h-1zM488 429h1v1h-1zM496 429h2v1h-2zM108 430h2v1h-2zM114 430h2v1h-2zM483 430h2v1h-2zM489 430h2v1h-2zM107 431h1v1h-1zM113 431h1v1h-1zM182 431h1v1h-1zM346 431h1v1h-1zM485 431h1v1h-1zM491 431h1v1h-1zM106 432h1v1h-1zM112 432h1v1h-1zM486 432h1v1h-1zM492 432h1v1h-1zM104 433h2v1h-2zM110 433h2v1h-2zM118 433h1v1h-1zM181 433h1v1h-1zM347 433h1v1h-1zM487 433h2v1h-2zM493 433h2v1h-2zM103 434h1v1h-1zM109 434h1v1h-1zM116 434h2v1h-2zM489 434h1v1h-1zM495 434h1v1h-1zM108 435h1v1h-1zM115 435h1v1h-1zM179 435h1v1h-1zM348 435h1v1h-1zM490 435h1v1h-1zM106 436h2v1h-2zM114 436h1v1h-1zM121 436h1v1h-1zM477 436h1v1h-1zM491 436h2v1h-2zM112 437h2v1h-2zM119 437h2v1h-2zM177 437h1v1h-1zM348 437h1v1h-1zM478 437h2v1h-2zM111 438h1v1h-1zM118 438h1v1h-1zM480 438h1v1h-1zM110 439h1v1h-1zM117 439h1v1h-1zM175 439h1v1h-1zM349 439h1v1h-1zM475 439h1v1h-1zM481 439h1v1h-1zM108 440h2v1h-2zM115 440h2v1h-2zM476 440h2v1h-2zM482 440h2v1h-2zM114 441h1v1h-1zM174 441h1v1h-1zM350 441h1v1h-1zM478 441h1v1h-1zM484 441h1v1h-1zM113 442h1v1h-1zM126 442h1v1h-1zM472 442h1v1h-1zM479 442h1v1h-1zM485 442h1v1h-1zM111 443h2v1h-2zM124 443h2v1h-2zM172 443h1v1h-1zM350 443h1v1h-1zM473 443h2v1h-2zM480 443h2v1h-2zM486 443h2v1h-2zM123 444h1v1h-1zM475 444h1v1h-1zM482 444h1v1h-1zM122 445h1v1h-1zM128 445h1v1h-1zM351 445h1v1h-1zM470 445h1v1h-1zM476 445h1v1h-1zM483 445h1v1h-1zM120 446h2v1h-2zM127 446h1v1h-1zM471 446h1v1h-1zM477 446h2v1h-2zM484 446h2v1h-2zM119 447h1v1h-1zM126 447h1v1h-1zM352 447h1v1h-1zM472 447h1v1h-1zM479 447h1v1h-1zM118 448h1v1h-1zM125 448h1v1h-1zM131 448h1v1h-1zM473 448h1v1h-1zM480 448h1v1h-1zM116 449h2v1h-2zM123 449h2v1h-2zM130 449h1v1h-1zM353 449h1v1h-1zM474 449h1v1h-1zM481 449h2v1h-2zM115 450h1v1h-1zM122 450h1v1h-1zM129 450h1v1h-1zM475 450h2v1h-2zM483 450h1v1h-1zM121 451h1v1h-1zM128 451h1v1h-1zM133 451h1v1h-1zM353 451h1v1h-1zM465 451h1v1h-1zM477 451h1v1h-1zM120 452h1v1h-1zM126 452h2v1h-2zM132 452h1v1h-1zM466 452h1v1h-1zM478 452h1v1h-1zM119 453h1v1h-1zM125 453h1v1h-1zM131 453h1v1h-1zM354 453h1v1h-1zM467 453h1v1h-1zM479 453h1v1h-1zM124 454h1v1h-1zM130 454h1v1h-1zM462 454h1v1h-1zM468 454h1v1h-1zM123 455h1v1h-1zM128 455h2v1h-2zM355 455h1v1h-1zM463 455h1v1h-1zM469 455h1v1h-1zM122 456h1v1h-1zM127 456h1v1h-1zM139 456h1v1h-1zM459 456h1v1h-1zM464 456h1v1h-1zM470 456h2v1h-2zM121 457h1v1h-1zM126 457h1v1h-1zM138 457h1v1h-1zM355 457h1v1h-1zM460 457h1v1h-1zM465 457h1v1h-1zM472 457h1v1h-1zM125 458h1v1h-1zM137 458h1v1h-1zM461 458h1v1h-1zM466 458h1v1h-1zM473 458h1v1h-1zM124 459h1v1h-1zM136 459h1v1h-1zM142 459h1v1h-1zM356 459h1v1h-1zM456 459h1v1h-1zM462 459h1v1h-1zM467 459h2v1h-2zM474 459h1v1h-1zM135 460h1v1h-1zM141 460h1v1h-1zM457 460h1v1h-1zM463 460h1v1h-1zM469 460h1v1h-1zM134 461h1v1h-1zM140 461h1v1h-1zM357 461h1v1h-1zM458 461h1v1h-1zM464 461h1v1h-1zM470 461h1v1h-1zM133 462h1v1h-1zM139 462h1v1h-1zM144 462h1v1h-1zM459 462h1v1h-1zM465 462h1v1h-1zM471 462h1v1h-1zM132 463h1v1h-1zM138 463h1v1h-1zM143 463h1v1h-1zM358 463h1v1h-1zM460 463h1v1h-1zM466 463h1v1h-1zM472 463h1v1h-1zM131 464h1v1h-1zM137 464h1v1h-1zM142 464h1v1h-1zM461 464h1v1h-1zM467 464h1v1h-1zM130 465h1v1h-1zM136 465h1v1h-1zM141 465h1v1h-1zM147 465h1v1h-1zM358 465h1v1h-1zM451 465h1v1h-1zM462 465h1v1h-1zM468 465h1v1h-1zM129 466h1v1h-1zM135 466h1v1h-1zM140 466h1v1h-1zM146 466h1v1h-1zM452 466h1v1h-1zM463 466h1v1h-1zM469 466h1v1h-1zM134 467h1v1h-1zM145 467h1v1h-1zM359 467h1v1h-1zM448 467h1v1h-1zM453 467h1v1h-1zM464 467h1v1h-1zM133 468h1v1h-1zM144 468h1v1h-1zM449 468h1v1h-1zM454 468h1v1h-1zM465 468h1v1h-1zM132 469h1v1h-1zM138 469h1v1h-1zM143 469h1v1h-1zM360 469h1v1h-1zM450 469h1v1h-1zM455 469h1v1h-1zM466 469h1v1h-1zM137 470h1v1h-1zM153 470h1v1h-1zM445 470h1v1h-1zM451 470h1v1h-1zM136 471h1v1h-1zM152 471h1v1h-1zM360 471h1v1h-1zM446 471h1v1h-1zM452 471h1v1h-1zM135 472h1v1h-1zM141 472h1v1h-1zM151 472h1v1h-1zM156 472h1v1h-1zM442 472h1v1h-1zM447 472h1v1h-1zM457 472h1v1h-1zM140 473h1v1h-1zM150 473h1v1h-1zM361 473h1v1h-1zM448 473h1v1h-1zM458 473h1v1h-1zM139 474h1v1h-1zM149 474h1v1h-1zM449 474h1v1h-1zM454 474h1v1h-1zM459 474h1v1h-1zM154 475h1v1h-1zM159 475h1v1h-1zM362 475h1v1h-1zM444 475h1v1h-1zM455 475h1v1h-1zM153 476h1v1h-1zM445 476h1v1h-1zM456 476h1v1h-1zM147 477h1v1h-1zM162 477h1v1h-1zM363 477h1v1h-1zM436 477h1v1h-1zM451 477h1v1h-1zM457 477h1v1h-1zM146 478h1v1h-1zM157 478h1v1h-1zM452 478h1v1h-1zM145 479h1v1h-1zM151 479h1v1h-1zM156 479h1v1h-1zM363 479h1v1h-1zM447 479h1v1h-1zM453 479h1v1h-1zM150 480h1v1h-1zM160 480h1v1h-1zM433 480h1v1h-1zM438 480h1v1h-1zM448 480h1v1h-1zM159 481h1v1h-1zM364 481h1v1h-1zM439 481h1v1h-1zM154 482h1v1h-1zM169 482h1v1h-1zM429 482h1v1h-1zM148 483h1v1h-1zM153 483h1v1h-1zM435 483h1v1h-1zM450 483h1v1h-1zM157 484h1v1h-1zM172 484h1v1h-1zM426 484h1v1h-1zM436 484h1v1h-1zM441 484h1v1h-1zM156 485h1v1h-1zM167 485h1v1h-1zM431 485h1v1h-1zM442 485h1v1h-1zM166 486h1v1h-1zM432 486h1v1h-1zM170 487h1v1h-1zM428 487h1v1h-1zM438 487h1v1h-1zM169 488h1v1h-1zM429 488h1v1h-1zM439 488h1v1h-1zM164 489h1v1h-1zM178 489h1v1h-1zM420 489h1v1h-1zM434 489h1v1h-1zM163 490h1v1h-1zM435 490h1v1h-1zM167 491h1v1h-1zM172 491h1v1h-1zM416 491h1v1h-1zM431 491h1v1h-1zM166 492h1v1h-1zM176 492h1v1h-1zM422 492h1v1h-1zM432 492h1v1h-1zM185 493h1v1h-1zM413 493h1v1h-1zM418 494h1v1h-1zM164 495h1v1h-1zM189 495h1v1h-1zM409 495h1v1h-1zM434 495h1v1h-1zM183 496h1v1h-1zM415 496h1v1h-1zM173 497h1v1h-1zM425 497h1v1h-1zM187 498h1v1h-1zM195 498h1v1h-1zM403 498h1v1h-1zM411 498h1v1h-1zM421 499h1v1h-1zM171 500h1v1h-1zM399 500h1v1h-1zM427 500h1v1h-1zM180 501h1v1h-1zM418 501h1v1h-1zM203 502h1v1h-1zM395 502h1v1h-1zM423 502h1v1h-1zM184 503h1v1h-1zM414 503h1v1h-1zM178 504h1v1h-1zM206 504h1v1h-1zM392 504h1v1h-1zM420 504h1v1h-1zM182 506h1v1h-1zM210 506h1v1h-1zM416 506h1v1h-1zM232 514h1v1h-1zM200 515h1v1h-1zM398 515h1v1h-1zM204 517h1v1h-1zM139 467h1v2h-1zM142 470h1v2h-1zM143 128h1v2h-1zM146 126h1v2h-1zM148 475h1v2h-1zM149 116h1v2h-1zM149 123h1v2h-1zM149 481h1v2h-1zM152 120h1v2h-1zM152 477h1v2h-1zM152 484h1v2h-1zM155 111h1v2h-1zM155 124h1v2h-1zM155 473h1v2h-1zM155 480h1v2h-1zM155 486h1v2h-1zM158 108h1v2h-1zM158 115h1v2h-1zM158 476h1v2h-1zM158 482h1v2h-1zM161 112h1v2h-1zM161 119h1v2h-1zM161 478h1v2h-1zM162 106h1v2h-1zM162 491h1v2h-1zM164 116h1v2h-1zM165 104h1v2h-1zM165 110h1v2h-1zM165 487h1v2h-1zM165 493h1v2h-1zM168 108h1v2h-1zM168 114h1v2h-1zM168 483h1v2h-1zM168 489h1v2h-1zM169 496h1v2h-1zM170 494h1v2h-1zM171 112h1v2h-1zM171 485h1v2h-1zM171 492h1v2h-1zM172 99h1v2h-1zM172 498h1v2h-1zM173 489h1v2h-1zM174 102h1v2h-1zM174 487h1v2h-1zM174 495h1v2h-1zM175 104h1v2h-1zM175 493h1v2h-1zM176 97h1v2h-1zM177 107h1v2h-1zM177 490h1v2h-1zM178 100h1v2h-1zM179 95h1v2h-1zM179 102h1v2h-1zM179 502h1v2h-1zM181 98h1v2h-1zM181 105h1v2h-1zM181 499h1v2h-1zM182 100h1v2h-1zM182 497h1v2h-1zM183 93h1v2h-1zM183 504h1v2h-1zM184 103h1v2h-1zM184 494h1v2h-1zM185 96h1v2h-1zM185 501h1v2h-1zM186 98h1v2h-1zM186 499h1v2h-1zM186 507h1v2h-1zM187 505h1v2h-1zM188 101h1v2h-1zM188 496h1v2h-1zM188 503h1v2h-1zM189 501h1v2h-1zM189 509h1v2h-1zM190 89h1v2h-1zM190 499h1v2h-1zM190 507h1v2h-1zM191 91h1v2h-1zM191 497h1v2h-1zM191 505h1v2h-1zM192 93h1v2h-1zM192 503h1v2h-1zM193 95h1v2h-1zM193 501h1v2h-1zM194 87h1v2h-1zM194 97h1v2h-1zM194 499h1v2h-1zM195 89h1v2h-1zM195 99h1v2h-1zM196 91h1v2h-1zM197 93h1v2h-1zM197 513h1v2h-1zM198 85h1v2h-1zM198 95h1v2h-1zM198 511h1v2h-1zM199 87h1v2h-1zM199 97h1v2h-1zM199 509h1v2h-1zM200 89h1v2h-1zM200 507h1v2h-1zM201 83h1v2h-1zM201 91h1v2h-1zM201 505h1v2h-1zM201 513h1v2h-1zM202 85h1v2h-1zM202 93h1v2h-1zM202 503h1v2h-1zM202 511h1v2h-1zM203 87h1v2h-1zM203 95h1v2h-1zM203 509h1v2h-1zM204 89h1v2h-1zM204 507h1v2h-1zM205 91h1v2h-1zM205 505h1v2h-1zM205 515h1v2h-1zM206 93h1v2h-1zM206 513h1v2h-1zM207 511h1v2h-1zM208 79h1v2h-1zM208 509h1v2h-1zM208 518h1v2h-1zM209 81h1v2h-1zM209 507h1v2h-1zM209 516h1v2h-1zM210 83h1v2h-1zM210 513h1v3h-1zM211 85h1v3h-1zM211 511h1v2h-1zM212 77h1v2h-1zM212 88h1v2h-1zM212 509h1v2h-1zM213 79h1v2h-1zM213 90h1v2h-1zM213 507h1v2h-1zM214 81h1v3h-1zM215 84h1v3h-1zM216 76h1v2h-1zM216 87h1v2h-1zM216 521h1v2h-1zM217 78h1v2h-1zM217 519h1v2h-1zM218 80h1v2h-1zM218 516h1v3h-1zM219 82h1v3h-1zM219 514h1v2h-1zM220 74h1v2h-1zM220 85h1v2h-1zM220 512h1v2h-1zM220 523h1v2h-1zM221 76h1v3h-1zM221 87h1v2h-1zM221 510h1v2h-1zM221 520h1v3h-1zM222 79h1v4h-1zM222 516h1v4h-1zM223 83h1v3h-1zM223 513h1v3h-1zM224 86h1v2h-1zM224 511h1v2h-1zM224 524h1v2h-1zM225 521h1v3h-1zM226 517h1v4h-1zM227 514h1v3h-1zM228 72h1v2h-1zM228 512h1v2h-1zM228 525h1v2h-1zM229 74h1v3h-1zM229 522h1v3h-1zM230 77h1v4h-1zM230 518h1v4h-1zM231 81h1v3h-1zM231 515h1v3h-1zM232 70h1v2h-1zM233 72h1v3h-1zM234 75h1v4h-1zM235 79h1v3h-1zM236 69h1v3h-1zM236 82h1v2h-1zM236 527h1v3h-1zM237 72h1v4h-1zM237 523h1v4h-1zM238 76h1v4h-1zM238 519h1v4h-1zM239 80h1v3h-1zM239 516h1v3h-1zM240 68h1v3h-1zM240 528h1v3h-1zM241 71h1v4h-1zM241 524h1v4h-1zM242 75h1v4h-1zM242 520h1v4h-1zM243 79h1v3h-1zM243 517h1v3h-1zM244 529h1v3h-1zM245 525h1v4h-1zM246 521h1v4h-1zM247 518h1v3h-1zM248 66h1v3h-1zM248 530h1v3h-1zM249 69h1v4h-1zM249 525h1v5h-1zM250 73h1v5h-1zM250 521h1v4h-1zM251 78h1v2h-1zM251 519h1v2h-1zM252 66h1v2h-1zM253 68h1v4h-1zM254 72h1v5h-1zM255 77h1v2h-1zM256 65h1v4h-1zM256 530h1v4h-1zM257 69h1v6h-1zM257 524h1v6h-1zM258 75h1v4h-1zM258 520h1v4h-1zM260 64h1v4h-1zM260 531h1v4h-1zM261 68h1v6h-1zM261 525h1v6h-1zM262 74h1v4h-1zM262 521h1v4h-1zM264 532h1v4h-1zM265 525h1v7h-1zM266 522h1v3h-1zM268 63h1v4h-1zM268 532h1v4h-1zM269 67h1v6h-1zM269 526h1v6h-1zM270 73h1v4h-1zM270 522h1v4h-1zM272 62h1v4h-1zM273 66h1v7h-1zM274 73h1v3h-1zM277 62h1v7h-1zM277 530h1v7h-1zM278 69h1v7h-1zM278 523h1v7h-1zM281 62h1v6h-1zM281 530h1v7h-1zM282 68h1v8h-1zM282 523h1v7h-1zM285 530h1v7h-1zM286 523h1v7h-1zM289 61h1v7h-1zM289 531h1v7h-1zM290 68h1v7h-1zM290 524h1v7h-1zM293 61h1v7h-1zM294 68h1v7h-1zM297 61h1v7h-1zM297 300h1v2h-1zM297 531h1v7h-1zM298 68h1v7h-1zM298 524h1v7h-1zM300 68h1v7h-1zM300 524h1v7h-1zM301 61h1v7h-1zM301 297h1v2h-1zM301 531h1v7h-1zM304 524h1v7h-1zM305 531h1v7h-1zM308 68h1v7h-1zM308 524h1v7h-1zM309 61h1v7h-1zM309 531h1v7h-1zM312 68h1v8h-1zM313 62h1v6h-1zM316 68h1v8h-1zM316 523h1v7h-1zM317 62h1v6h-1zM317 530h1v7h-1zM320 69h1v7h-1zM320 523h1v7h-1zM321 62h1v7h-1zM321 530h1v7h-1zM324 523h1v3h-1zM325 526h1v7h-1zM326 533h1v4h-1zM328 73h1v4h-1zM328 522h1v4h-1zM329 67h1v6h-1zM329 526h1v6h-1zM330 63h1v4h-1zM330 532h1v4h-1zM332 74h1v3h-1zM333 67h1v7h-1zM334 64h1v3h-1zM336 74h1v4h-1zM336 521h1v4h-1zM337 68h1v6h-1zM337 525h1v6h-1zM338 65h1v3h-1zM338 531h1v3h-1zM340 75h1v4h-1zM340 520h1v4h-1zM341 69h1v6h-1zM341 524h1v6h-1zM342 65h1v4h-1zM342 530h1v4h-1zM343 519h1v3h-1zM344 522h1v4h-1zM345 526h1v5h-1zM346 531h1v2h-1zM347 78h1v3h-1zM347 518h1v3h-1zM348 73h1v5h-1zM348 521h1v4h-1zM349 69h1v4h-1zM349 525h1v5h-1zM350 67h1v2h-1zM350 530h1v2h-1zM351 78h1v3h-1zM352 74h1v4h-1zM353 70h1v4h-1zM354 68h1v2h-1zM355 79h1v3h-1zM355 517h1v3h-1zM356 75h1v4h-1zM356 520h1v4h-1zM357 71h1v4h-1zM357 524h1v4h-1zM358 68h1v3h-1zM358 528h1v3h-1zM359 80h1v3h-1zM359 516h1v3h-1zM360 76h1v4h-1zM360 519h1v4h-1zM361 72h1v4h-1zM361 523h1v4h-1zM362 69h1v3h-1zM362 515h1v2h-1zM362 527h1v3h-1zM363 517h1v3h-1zM364 520h1v4h-1zM365 524h1v3h-1zM366 84h1v2h-1zM366 513h1v2h-1zM366 527h1v2h-1zM367 81h1v3h-1zM367 515h1v3h-1zM368 77h1v4h-1zM368 518h1v4h-1zM369 74h1v3h-1zM369 522h1v3h-1zM370 72h1v2h-1zM370 85h1v2h-1zM370 525h1v2h-1zM371 82h1v3h-1zM372 78h1v4h-1zM373 75h1v3h-1zM374 73h1v2h-1zM374 86h1v2h-1zM374 511h1v2h-1zM375 83h1v3h-1zM375 513h1v3h-1zM376 79h1v4h-1zM376 516h1v4h-1zM377 76h1v3h-1zM377 87h1v2h-1zM377 510h1v2h-1zM377 520h1v3h-1zM378 74h1v2h-1zM378 85h1v2h-1zM378 512h1v2h-1zM378 523h1v2h-1zM379 82h1v3h-1zM379 514h1v2h-1zM380 80h1v2h-1zM380 516h1v3h-1zM381 78h1v2h-1zM381 508h1v2h-1zM381 519h1v2h-1zM382 76h1v2h-1zM382 510h1v2h-1zM382 521h1v2h-1zM383 512h1v3h-1zM384 515h1v3h-1zM385 90h1v2h-1zM385 507h1v2h-1zM385 518h1v2h-1zM386 88h1v2h-1zM386 509h1v2h-1zM386 520h1v2h-1zM387 85h1v3h-1zM387 511h1v2h-1zM388 83h1v2h-1zM388 513h1v3h-1zM389 81h1v2h-1zM389 90h1v2h-1zM389 516h1v2h-1zM390 79h1v2h-1zM390 88h1v2h-1zM390 518h1v2h-1zM391 86h1v2h-1zM392 84h1v2h-1zM392 93h1v2h-1zM393 82h1v2h-1zM393 91h1v2h-1zM393 505h1v2h-1zM394 89h1v2h-1zM394 507h1v2h-1zM395 87h1v2h-1zM395 95h1v2h-1zM395 509h1v2h-1zM396 85h1v2h-1zM396 93h1v2h-1zM396 503h1v2h-1zM396 511h1v2h-1zM397 83h1v2h-1zM397 91h1v2h-1zM397 505h1v2h-1zM397 513h1v2h-1zM398 89h1v2h-1zM398 507h1v2h-1zM399 87h1v2h-1zM399 509h1v2h-1zM400 85h1v2h-1zM400 501h1v2h-1zM400 511h1v2h-1zM401 503h1v2h-1zM401 513h1v2h-1zM402 505h1v2h-1zM403 99h1v2h-1zM403 507h1v2h-1zM404 97h1v2h-1zM404 499h1v2h-1zM404 509h1v2h-1zM405 95h1v2h-1zM405 501h1v2h-1zM405 511h1v2h-1zM406 93h1v2h-1zM406 503h1v2h-1zM407 91h1v2h-1zM407 100h1v2h-1zM407 505h1v2h-1zM408 89h1v2h-1zM408 98h1v2h-1zM408 507h1v2h-1zM409 96h1v2h-1zM409 509h1v2h-1zM410 94h1v2h-1zM410 101h1v2h-1zM410 496h1v2h-1zM411 92h1v2h-1zM412 90h1v2h-1zM412 98h1v2h-1zM412 499h1v2h-1zM413 96h1v2h-1zM413 501h1v2h-1zM414 103h1v2h-1zM414 494h1v2h-1zM415 93h1v2h-1zM415 504h1v2h-1zM416 100h1v2h-1zM416 497h1v2h-1zM417 98h1v2h-1zM417 492h1v2h-1zM417 499h1v2h-1zM419 95h1v2h-1zM419 495h1v2h-1zM419 502h1v2h-1zM420 497h1v2h-1zM421 107h1v2h-1zM421 490h1v2h-1zM422 500h1v2h-1zM423 104h1v2h-1zM423 493h1v2h-1zM424 102h1v2h-1zM424 110h1v2h-1zM424 495h1v2h-1zM425 108h1v2h-1zM426 99h1v2h-1zM426 106h1v2h-1zM426 498h1v2h-1zM427 112h1v2h-1zM427 485h1v2h-1zM428 103h1v2h-1zM429 101h1v2h-1zM430 108h1v2h-1zM430 114h1v2h-1zM430 483h1v2h-1zM430 489h1v2h-1zM433 104h1v2h-1zM433 110h1v2h-1zM433 487h1v2h-1zM433 493h1v2h-1zM434 481h1v2h-1zM436 106h1v2h-1zM436 491h1v2h-1zM437 119h1v2h-1zM437 478h1v2h-1zM437 485h1v2h-1zM440 115h1v2h-1zM440 121h1v2h-1zM440 482h1v2h-1zM440 489h1v2h-1zM443 111h1v2h-1zM443 117h1v2h-1zM443 124h1v2h-1zM443 473h1v2h-1zM443 486h1v2h-1zM446 113h1v2h-1zM446 120h1v2h-1zM446 477h1v2h-1zM449 116h1v2h-1zM449 123h1v2h-1zM449 481h1v2h-1zM450 475h1v2h-1zM453 472h1v2h-1zM455 128h1v2h-1zM456 470h1v2h-1zM458 131h1v2h-1z"/><path fill="#FFFFFF" d="M285 15h28v1h-28zM275 16h10v1h-10zM313 16h10v1h-10zM265 17h10v1h-10zM323 17h10v1h-10zM255 18h10v1h-10zM333 18h10v1h-10zM248 19h7v1h-7zM343 19h8v1h-8zM243 20h5v1h-5zM351 20h5v1h-5zM238 21h5v1h-5zM356 21h5v1h-5zM234 22h4v1h-4zM361 22h4v1h-4zM230 23h4v1h-4zM365 23h4v1h-4zM226 24h4v1h-4zM369 24h3v1h-3zM223 25h3v1h-3zM372 25h4v1h-4zM220 26h3v1h-3zM376 26h3v1h-3zM217 27h3v1h-3zM379 27h3v1h-3zM214 28h3v1h-3zM382 28h3v1h-3zM211 29h3v1h-3zM385 29h3v1h-3zM207 30h4v1h-4zM388 30h3v1h-3zM204 31h3v1h-3zM391 31h4v1h-4zM201 32h3v1h-3zM395 32h3v1h-3zM199 33h2v1h-2zM398 33h2v1h-2zM197 34h2v1h-2zM400 34h2v1h-2zM195 35h2v1h-2zM402 35h2v1h-2zM192 36h3v1h-3zM403 36h4v1h-4zM190 37h2v1h-2zM407 37h2v1h-2zM188 38h2v1h-2zM409 38h2v1h-2zM186 39h2v1h-2zM411 39h2v1h-2zM183 40h3v1h-3zM413 40h3v1h-3zM181 41h2v1h-2zM416 41h2v1h-2zM179 42h2v1h-2zM418 42h2v1h-2zM177 43h2v1h-2zM420 43h2v1h-2zM174 44h3v1h-3zM422 44h3v1h-3zM172 45h2v1h-2zM425 45h2v1h-2zM170 46h2v1h-2zM427 46h2v1h-2zM168 47h2v1h-2zM429 47h2v1h-2zM166 48h2v1h-2zM431 48h2v1h-2zM164 49h2v1h-2zM433 49h2v1h-2zM162 50h2v1h-2zM435 50h2v1h-2zM160 51h2v1h-2zM437 51h2v1h-2zM158 52h2v1h-2zM439 52h2v1h-2zM157 53h1v1h-1zM441 53h1v1h-1zM155 54h2v1h-2zM442 54h2v1h-2zM153 55h2v1h-2zM444 55h1v1h-1zM152 56h1v1h-1zM445 56h2v1h-2zM150 57h2v1h-2zM447 57h2v1h-2zM149 58h1v1h-1zM449 58h1v1h-1zM147 59h2v1h-2zM450 59h2v1h-2zM146 60h1v1h-1zM287 60h24v1h-24zM452 60h1v1h-1zM144 61h2v1h-2zM270 61h17v1h-17zM311 61h17v1h-17zM453 61h2v1h-2zM143 62h1v1h-1zM265 62h5v1h-5zM328 62h6v1h-6zM455 62h1v1h-1zM141 63h2v1h-2zM260 63h4v1h-4zM334 63h4v1h-4zM456 63h2v1h-2zM140 64h1v1h-1zM254 64h6v1h-6zM338 64h6v1h-6zM458 64h1v1h-1zM138 65h2v1h-2zM248 65h6v1h-6zM344 65h6v1h-6zM459 65h2v1h-2zM136 66h2v1h-2zM244 66h4v1h-4zM350 66h4v1h-4zM461 66h1v1h-1zM135 67h1v1h-1zM240 67h5v1h-5zM354 67h5v1h-5zM462 67h2v1h-2zM133 68h2v1h-2zM236 68h4v1h-4zM359 68h4v1h-4zM464 68h2v1h-2zM132 69h1v1h-1zM232 69h4v1h-4zM363 69h4v1h-4zM466 69h1v1h-1zM130 70h2v1h-2zM229 70h3v1h-3zM366 70h3v1h-3zM467 70h1v1h-1zM129 71h1v1h-1zM227 71h2v1h-2zM369 71h3v1h-3zM468 71h2v1h-2zM128 72h1v1h-1zM224 72h3v1h-3zM372 72h3v1h-3zM470 72h1v1h-1zM126 73h2v1h-2zM220 73h5v1h-5zM375 73h4v1h-4zM471 73h1v1h-1zM125 74h1v1h-1zM217 74h3v1h-3zM379 74h3v1h-3zM472 74h2v1h-2zM124 75h1v1h-1zM214 75h3v1h-3zM288 75h22v1h-22zM382 75h2v1h-2zM474 75h1v1h-1zM212 76h2v1h-2zM272 76h16v1h-16zM310 76h16v1h-16zM384 76h4v1h-4zM475 76h1v1h-1zM122 77h2v1h-2zM209 77h3v1h-3zM265 77h7v1h-7zM326 77h8v1h-8zM386 77h3v1h-3zM476 77h1v1h-1zM121 78h1v1h-1zM124 78h1v1h-1zM207 78h2v1h-2zM259 78h6v1h-6zM334 78h5v1h-5zM389 78h2v1h-2zM477 78h1v1h-1zM120 79h1v1h-1zM205 79h2v1h-2zM255 79h4v1h-4zM339 79h5v1h-5zM391 79h2v1h-2zM478 79h1v1h-1zM119 80h1v1h-1zM203 80h2v1h-2zM251 80h4v1h-4zM343 80h4v1h-4zM393 80h2v1h-2zM479 80h1v1h-1zM118 81h1v1h-1zM126 81h1v1h-1zM201 81h2v1h-2zM247 81h4v1h-4zM347 81h4v1h-4zM395 81h3v1h-3zM480 81h1v1h-1zM117 82h1v1h-1zM127 82h1v1h-1zM199 82h2v1h-2zM244 82h3v1h-3zM351 82h4v1h-4zM398 82h2v1h-2zM481 82h1v1h-1zM115 83h2v1h-2zM128 83h1v1h-1zM197 83h2v1h-2zM240 83h4v1h-4zM355 83h4v1h-4zM400 83h2v1h-2zM482 83h1v1h-1zM114 84h1v1h-1zM194 84h3v1h-3zM236 84h4v1h-4zM359 84h3v1h-3zM402 84h2v1h-2zM483 84h2v1h-2zM113 85h1v1h-1zM192 85h2v1h-2zM232 85h4v1h-4zM362 85h4v1h-4zM404 85h2v1h-2zM485 85h1v1h-1zM111 86h2v1h-2zM130 86h1v1h-1zM190 86h2v1h-2zM228 86h4v1h-4zM366 86h4v1h-4zM405 86h3v1h-3zM486 86h1v1h-1zM110 87h1v1h-1zM131 87h1v1h-1zM188 87h2v1h-2zM227 87h1v1h-1zM370 87h2v1h-2zM408 87h2v1h-2zM487 87h2v1h-2zM109 88h1v1h-1zM132 88h1v1h-1zM187 88h1v1h-1zM225 88h2v1h-2zM372 88h2v1h-2zM410 88h2v1h-2zM489 88h1v1h-1zM108 89h1v1h-1zM185 89h1v1h-1zM221 89h4v1h-4zM374 89h3v1h-3zM412 89h2v1h-2zM490 89h1v1h-1zM107 90h1v1h-1zM183 90h2v1h-2zM217 90h4v1h-4zM377 90h5v1h-5zM414 90h2v1h-2zM491 90h1v1h-1zM106 91h1v1h-1zM134 91h1v1h-1zM181 91h2v1h-2zM214 91h3v1h-3zM381 91h4v1h-4zM416 91h2v1h-2zM492 91h1v1h-1zM105 92h1v1h-1zM135 92h1v1h-1zM180 92h1v1h-1zM212 92h2v1h-2zM385 92h2v1h-2zM418 92h1v1h-1zM493 92h1v1h-1zM104 93h1v1h-1zM136 93h1v1h-1zM178 93h2v1h-2zM210 93h2v1h-2zM387 93h2v1h-2zM419 93h2v1h-2zM494 93h1v1h-1zM103 94h1v1h-1zM176 94h2v1h-2zM208 94h2v1h-2zM389 94h2v1h-2zM421 94h2v1h-2zM495 94h1v1h-1zM102 95h1v1h-1zM174 95h2v1h-2zM206 95h2v1h-2zM391 95h2v1h-2zM423 95h2v1h-2zM496 95h1v1h-1zM101 96h1v1h-1zM138 96h1v1h-1zM173 96h1v1h-1zM204 96h2v1h-2zM393 96h2v1h-2zM425 96h1v1h-1zM497 96h1v1h-1zM100 97h1v1h-1zM139 97h1v1h-1zM171 97h2v1h-2zM202 97h2v1h-2zM395 97h2v1h-2zM426 97h2v1h-2zM498 97h1v1h-1zM99 98h1v1h-1zM170 98h1v1h-1zM200 98h2v1h-2zM397 98h3v1h-3zM428 98h1v1h-1zM499 98h1v1h-1zM98 99h1v1h-1zM169 99h1v1h-1zM198 99h2v1h-2zM400 99h1v1h-1zM421 99h1v1h-1zM429 99h1v1h-1zM500 99h1v1h-1zM97 100h1v1h-1zM141 100h1v1h-1zM167 100h2v1h-2zM196 100h2v1h-2zM401 100h2v1h-2zM430 100h2v1h-2zM501 100h1v1h-1zM96 101h1v1h-1zM142 101h1v1h-1zM166 101h1v1h-1zM194 101h2v1h-2zM403 101h2v1h-2zM432 101h1v1h-1zM502 101h1v1h-1zM95 102h1v1h-1zM143 102h1v1h-1zM164 102h2v1h-2zM192 102h2v1h-2zM405 102h2v1h-2zM433 102h2v1h-2zM503 102h1v1h-1zM94 103h1v1h-1zM163 103h1v1h-1zM190 103h2v1h-2zM407 103h2v1h-2zM435 103h1v1h-1zM504 103h1v1h-1zM93 104h1v1h-1zM162 104h1v1h-1zM188 104h2v1h-2zM409 104h2v1h-2zM418 104h1v1h-1zM436 104h1v1h-1zM505 104h1v1h-1zM92 105h1v1h-1zM145 105h1v1h-1zM160 105h2v1h-2zM171 105h1v1h-1zM187 105h1v1h-1zM283 105h33v1h-33zM411 105h1v1h-1zM437 105h2v1h-2zM506 105h1v1h-1zM91 106h1v1h-1zM146 106h1v1h-1zM159 106h1v1h-1zM185 106h2v1h-2zM276 106h7v1h-7zM316 106h7v1h-7zM412 106h2v1h-2zM439 106h1v1h-1zM507 106h1v1h-1zM90 107h1v1h-1zM147 107h1v1h-1zM157 107h2v1h-2zM184 107h1v1h-1zM269 107h7v1h-7zM323 107h6v1h-6zM414 107h1v1h-1zM441 107h1v1h-1zM508 107h1v1h-1zM89 108h1v1h-1zM156 108h1v1h-1zM182 108h2v1h-2zM263 108h6v1h-6zM329 108h7v1h-7zM415 108h2v1h-2zM442 108h1v1h-1zM509 108h1v1h-1zM88 109h1v1h-1zM155 109h1v1h-1zM181 109h1v1h-1zM258 109h5v1h-5zM336 109h5v1h-5zM417 109h1v1h-1zM443 109h1v1h-1zM510 109h1v1h-1zM87 110h1v1h-1zM149 110h1v1h-1zM153 110h2v1h-2zM179 110h2v1h-2zM254 110h4v1h-4zM341 110h4v1h-4zM418 110h2v1h-2zM439 110h1v1h-1zM444 110h2v1h-2zM511 110h1v1h-1zM150 111h1v1h-1zM152 111h1v1h-1zM177 111h2v1h-2zM251 111h3v1h-3zM345 111h3v1h-3zM420 111h2v1h-2zM438 111h1v1h-1zM446 111h1v1h-1zM151 112h1v1h-1zM175 112h2v1h-2zM248 112h3v1h-3zM348 112h3v1h-3zM422 112h2v1h-2zM447 112h1v1h-1zM85 113h1v1h-1zM149 113h2v1h-2zM174 113h1v1h-1zM245 113h3v1h-3zM351 113h3v1h-3zM424 113h1v1h-1zM448 113h1v1h-1zM513 113h1v1h-1zM84 114h1v1h-1zM148 114h1v1h-1zM173 114h1v1h-1zM241 114h4v1h-4zM354 114h4v1h-4zM425 114h1v1h-1zM436 114h1v1h-1zM449 114h2v1h-2zM514 114h1v1h-1zM147 115h1v1h-1zM153 115h1v1h-1zM171 115h2v1h-2zM238 115h3v1h-3zM358 115h3v1h-3zM426 115h1v1h-1zM435 115h1v1h-1zM451 115h1v1h-1zM146 116h1v1h-1zM154 116h1v1h-1zM170 116h1v1h-1zM235 116h3v1h-3zM361 116h3v1h-3zM427 116h2v1h-2zM452 116h1v1h-1zM82 117h1v1h-1zM145 117h1v1h-1zM169 117h1v1h-1zM232 117h1v1h-1zM364 117h3v1h-3zM429 117h1v1h-1zM453 117h1v1h-1zM516 117h1v1h-1zM81 118h1v1h-1zM144 118h1v1h-1zM168 118h1v1h-1zM229 118h3v1h-3zM367 118h3v1h-3zM430 118h1v1h-1zM433 118h1v1h-1zM454 118h1v1h-1zM517 118h1v1h-1zM80 119h1v1h-1zM142 119h2v1h-2zM156 119h1v1h-1zM166 119h2v1h-2zM226 119h3v1h-3zM370 119h3v1h-3zM431 119h2v1h-2zM455 119h2v1h-2zM518 119h1v1h-1zM79 120h1v1h-1zM141 120h1v1h-1zM157 120h1v1h-1zM165 120h1v1h-1zM224 120h2v1h-2zM373 120h2v1h-2zM433 120h1v1h-1zM519 120h1v1h-1zM78 121h1v1h-1zM140 121h1v1h-1zM164 121h1v1h-1zM222 121h2v1h-2zM375 121h2v1h-2zM434 121h1v1h-1zM457 121h2v1h-2zM520 121h1v1h-1zM77 122h1v1h-1zM139 122h1v1h-1zM162 122h2v1h-2zM219 122h3v1h-3zM377 122h2v1h-2zM435 122h2v1h-2zM456 122h1v1h-1zM459 122h1v1h-1zM76 123h1v1h-1zM138 123h1v1h-1zM159 123h1v1h-1zM161 123h1v1h-1zM217 123h2v1h-2zM379 123h2v1h-2zM437 123h1v1h-1zM455 123h1v1h-1zM460 123h1v1h-1zM521 123h2v1h-2zM75 124h1v1h-1zM136 124h2v1h-2zM160 124h1v1h-1zM215 124h2v1h-2zM381 124h2v1h-2zM438 124h1v1h-1zM454 124h1v1h-1zM461 124h1v1h-1zM520 124h1v1h-1zM523 124h1v1h-1zM74 125h1v1h-1zM158 125h2v1h-2zM213 125h2v1h-2zM383 125h2v1h-2zM439 125h1v1h-1zM453 125h1v1h-1zM462 125h2v1h-2zM518 125h2v1h-2zM524 125h1v1h-1zM134 126h2v1h-2zM157 126h1v1h-1zM211 126h2v1h-2zM385 126h2v1h-2zM440 126h2v1h-2zM464 126h1v1h-1zM517 126h1v1h-1zM133 127h1v1h-1zM136 127h1v1h-1zM156 127h1v1h-1zM209 127h2v1h-2zM387 127h2v1h-2zM442 127h1v1h-1zM465 127h1v1h-1zM516 127h1v1h-1zM72 128h1v1h-1zM132 128h1v1h-1zM137 128h1v1h-1zM155 128h1v1h-1zM207 128h2v1h-2zM389 128h2v1h-2zM443 128h1v1h-1zM451 128h1v1h-1zM466 128h1v1h-1zM515 128h1v1h-1zM526 128h1v1h-1zM71 129h1v1h-1zM131 129h1v1h-1zM138 129h1v1h-1zM154 129h1v1h-1zM205 129h2v1h-2zM391 129h2v1h-2zM444 129h1v1h-1zM450 129h1v1h-1zM467 129h1v1h-1zM513 129h2v1h-2zM527 129h1v1h-1zM130 130h1v1h-1zM139 130h1v1h-1zM152 130h2v1h-2zM203 130h2v1h-2zM393 130h2v1h-2zM445 130h1v1h-1zM449 130h1v1h-1zM468 130h1v1h-1zM512 130h1v1h-1zM129 131h1v1h-1zM151 131h1v1h-1zM202 131h1v1h-1zM395 131h2v1h-2zM446 131h3v1h-3zM469 131h1v1h-1zM511 131h1v1h-1zM69 132h1v1h-1zM128 132h1v1h-1zM150 132h1v1h-1zM200 132h2v1h-2zM397 132h2v1h-2zM447 132h2v1h-2zM470 132h1v1h-1zM510 132h1v1h-1zM529 132h1v1h-1zM127 133h1v1h-1zM141 133h1v1h-1zM149 133h1v1h-1zM199 133h1v1h-1zM399 133h1v1h-1zM446 133h1v1h-1zM449 133h1v1h-1zM471 133h1v1h-1zM508 133h2v1h-2zM126 134h1v1h-1zM142 134h1v1h-1zM148 134h1v1h-1zM197 134h2v1h-2zM400 134h2v1h-2zM445 134h1v1h-1zM450 134h1v1h-1zM507 134h1v1h-1zM67 135h1v1h-1zM125 135h1v1h-1zM143 135h1v1h-1zM147 135h1v1h-1zM196 135h1v1h-1zM402 135h1v1h-1zM444 135h1v1h-1zM451 135h1v1h-1zM472 135h2v1h-2zM506 135h1v1h-1zM531 135h1v1h-1zM144 136h1v1h-1zM146 136h1v1h-1zM194 136h2v1h-2zM403 136h2v1h-2zM443 136h1v1h-1zM452 136h1v1h-1zM471 136h1v1h-1zM504 136h2v1h-2zM145 137h1v1h-1zM192 137h2v1h-2zM405 137h2v1h-2zM453 137h1v1h-1zM470 137h1v1h-1zM503 137h1v1h-1zM123 138h1v1h-1zM144 138h1v1h-1zM191 138h1v1h-1zM407 138h1v1h-1zM454 138h1v1h-1zM469 138h1v1h-1zM475 138h1v1h-1zM502 138h1v1h-1zM122 139h1v1h-1zM143 139h1v1h-1zM189 139h2v1h-2zM408 139h2v1h-2zM441 139h1v1h-1zM455 139h1v1h-1zM467 139h2v1h-2zM476 139h1v1h-1zM501 139h1v1h-1zM64 140h1v1h-1zM142 140h1v1h-1zM188 140h1v1h-1zM410 140h1v1h-1zM440 140h1v1h-1zM456 140h1v1h-1zM466 140h1v1h-1zM477 140h1v1h-1zM499 140h2v1h-2zM534 140h1v1h-1zM120 141h2v1h-2zM141 141h1v1h-1zM186 141h2v1h-2zM411 141h2v1h-2zM439 141h1v1h-1zM457 141h1v1h-1zM465 141h1v1h-1zM478 141h1v1h-1zM498 141h1v1h-1zM122 142h1v1h-1zM140 142h1v1h-1zM185 142h1v1h-1zM413 142h1v1h-1zM438 142h1v1h-1zM458 142h1v1h-1zM464 142h1v1h-1zM497 142h1v1h-1zM62 143h1v1h-1zM123 143h1v1h-1zM139 143h1v1h-1zM184 143h1v1h-1zM414 143h1v1h-1zM437 143h1v1h-1zM459 143h1v1h-1zM463 143h1v1h-1zM496 143h1v1h-1zM536 143h1v1h-1zM118 144h1v1h-1zM124 144h1v1h-1zM138 144h1v1h-1zM182 144h2v1h-2zM415 144h2v1h-2zM436 144h1v1h-1zM460 144h1v1h-1zM462 144h1v1h-1zM480 144h1v1h-1zM494 144h2v1h-2zM117 145h1v1h-1zM125 145h1v1h-1zM137 145h1v1h-1zM181 145h1v1h-1zM417 145h1v1h-1zM435 145h1v1h-1zM461 145h1v1h-1zM481 145h1v1h-1zM493 145h1v1h-1zM60 146h1v1h-1zM116 146h1v1h-1zM126 146h2v1h-2zM136 146h1v1h-1zM180 146h1v1h-1zM418 146h1v1h-1zM434 146h1v1h-1zM462 146h1v1h-1zM482 146h1v1h-1zM492 146h1v1h-1zM538 146h1v1h-1zM115 147h1v1h-1zM128 147h1v1h-1zM135 147h1v1h-1zM179 147h1v1h-1zM419 147h1v1h-1zM463 147h1v1h-1zM483 147h1v1h-1zM491 147h1v1h-1zM114 148h1v1h-1zM129 148h1v1h-1zM134 148h1v1h-1zM177 148h2v1h-2zM420 148h1v1h-1zM464 148h1v1h-1zM484 148h1v1h-1zM489 148h2v1h-2zM58 149h1v1h-1zM130 149h1v1h-1zM133 149h1v1h-1zM176 149h1v1h-1zM421 149h2v1h-2zM432 149h1v1h-1zM465 149h1v1h-1zM488 149h1v1h-1zM540 149h1v1h-1zM131 150h2v1h-2zM175 150h1v1h-1zM423 150h1v1h-1zM431 150h1v1h-1zM466 150h1v1h-1zM487 150h1v1h-1zM112 151h1v1h-1zM174 151h1v1h-1zM424 151h1v1h-1zM430 151h1v1h-1zM467 151h1v1h-1zM486 151h1v1h-1zM56 152h1v1h-1zM111 152h1v1h-1zM173 152h1v1h-1zM425 152h1v1h-1zM429 152h1v1h-1zM484 152h2v1h-2zM487 152h1v1h-1zM542 152h1v1h-1zM171 153h2v1h-2zM426 153h3v1h-3zM483 153h1v1h-1zM129 154h1v1h-1zM170 154h1v1h-1zM469 154h1v1h-1zM482 154h1v1h-1zM109 155h1v1h-1zM128 155h1v1h-1zM169 155h1v1h-1zM429 155h1v1h-1zM470 155h1v1h-1zM480 155h2v1h-2zM489 155h1v1h-1zM108 156h1v1h-1zM127 156h1v1h-1zM168 156h1v1h-1zM430 156h1v1h-1zM471 156h1v1h-1zM479 156h1v1h-1zM490 156h1v1h-1zM53 157h1v1h-1zM126 157h1v1h-1zM167 157h1v1h-1zM431 157h1v1h-1zM472 157h1v1h-1zM478 157h1v1h-1zM545 157h1v1h-1zM107 158h3v1h-3zM166 158h1v1h-1zM432 158h1v1h-1zM476 158h2v1h-2zM106 159h1v1h-1zM110 159h1v1h-1zM165 159h1v1h-1zM433 159h1v1h-1zM475 159h1v1h-1zM492 159h1v1h-1zM111 160h1v1h-1zM124 160h1v1h-1zM164 160h1v1h-1zM434 160h1v1h-1zM474 160h1v1h-1zM112 161h2v1h-2zM123 161h1v1h-1zM163 161h1v1h-1zM435 161h1v1h-1zM475 161h1v1h-1zM104 162h1v1h-1zM114 162h1v1h-1zM162 162h1v1h-1zM436 162h1v1h-1zM494 162h1v1h-1zM103 163h1v1h-1zM115 163h1v1h-1zM161 163h1v1h-1zM437 163h1v1h-1zM495 163h1v1h-1zM116 164h2v1h-2zM121 164h1v1h-1zM160 164h1v1h-1zM438 164h1v1h-1zM477 164h1v1h-1zM118 165h1v1h-1zM120 165h1v1h-1zM159 165h1v1h-1zM439 165h1v1h-1zM478 165h1v1h-1zM101 166h1v1h-1zM158 166h1v1h-1zM440 166h1v1h-1zM497 166h1v1h-1zM157 167h1v1h-1zM441 167h1v1h-1zM118 168h1v1h-1zM156 168h1v1h-1zM442 168h1v1h-1zM480 168h1v1h-1zM99 169h1v1h-1zM117 169h1v1h-1zM155 169h1v1h-1zM443 169h1v1h-1zM481 169h1v1h-1zM496 169h2v1h-2zM499 169h1v1h-1zM98 170h1v1h-1zM116 170h1v1h-1zM154 170h1v1h-1zM444 170h1v1h-1zM482 170h1v1h-1zM494 170h2v1h-2zM500 170h1v1h-1zM492 171h2v1h-2zM491 172h1v1h-1zM96 173h1v1h-1zM152 173h1v1h-1zM446 173h1v1h-1zM484 173h1v1h-1zM489 173h2v1h-2zM502 173h1v1h-1zM113 174h2v1h-2zM151 174h1v1h-1zM447 174h1v1h-1zM485 174h1v1h-1zM487 174h2v1h-2zM95 175h2v1h-2zM115 175h2v1h-2zM150 175h1v1h-1zM448 175h1v1h-1zM97 176h2v1h-2zM117 176h1v1h-1zM149 176h1v1h-1zM449 176h1v1h-1zM99 177h1v1h-1zM118 177h2v1h-2zM100 178h2v1h-2zM120 178h1v1h-1zM102 179h2v1h-2zM121 179h2v1h-2zM147 179h1v1h-1zM451 179h1v1h-1zM92 180h1v1h-1zM104 180h1v1h-1zM123 180h1v1h-1zM146 180h1v1h-1zM452 180h1v1h-1zM506 180h1v1h-1zM105 181h2v1h-2zM109 181h1v1h-1zM124 181h2v1h-2zM145 181h1v1h-1zM453 181h1v1h-1zM489 181h1v1h-1zM107 182h2v1h-2zM126 182h1v1h-1zM127 183h2v1h-2zM107 184h1v1h-1zM129 184h1v1h-1zM143 184h1v1h-1zM455 184h1v1h-1zM491 184h1v1h-1zM130 185h2v1h-2zM142 185h1v1h-1zM456 185h1v1h-1zM132 186h1v1h-1zM507 186h3v1h-3zM88 187h1v1h-1zM105 187h1v1h-1zM133 187h2v1h-2zM493 187h1v1h-1zM505 187h2v1h-2zM510 187h1v1h-1zM135 188h1v1h-1zM140 188h1v1h-1zM458 188h1v1h-1zM503 188h2v1h-2zM136 189h2v1h-2zM501 189h2v1h-2zM138 190h2v1h-2zM499 190h2v1h-2zM460 191h1v1h-1zM497 191h2v1h-2zM85 193h2v1h-2zM87 194h2v1h-2zM35 195h1v1h-1zM89 195h2v1h-2zM430 195h1v1h-1zM37 196h2v1h-2zM91 196h2v1h-2zM135 196h1v1h-1zM429 196h1v1h-1zM463 196h1v1h-1zM39 197h3v1h-3zM93 197h2v1h-2zM427 197h2v1h-2zM42 198h2v1h-2zM95 198h2v1h-2zM426 198h1v1h-1zM44 199h3v1h-3zM97 199h3v1h-3zM133 199h1v1h-1zM425 199h1v1h-1zM465 199h1v1h-1zM47 200h3v1h-3zM423 200h2v1h-2zM50 201h2v1h-2zM422 201h1v1h-1zM52 202h3v1h-3zM131 202h1v1h-1zM421 202h1v1h-1zM467 202h1v1h-1zM55 203h2v1h-2zM57 204h3v1h-3zM517 204h2v1h-2zM60 205h2v1h-2zM515 205h2v1h-2zM62 206h3v1h-3zM513 206h2v1h-2zM65 207h3v1h-3zM511 207h2v1h-2zM68 208h2v1h-2zM502 208h3v1h-3zM509 208h2v1h-2zM70 209h3v1h-3zM500 209h2v1h-2zM507 209h2v1h-2zM73 210h2v1h-2zM498 210h2v1h-2zM505 210h2v1h-2zM75 211h2v1h-2zM496 211h2v1h-2zM76 212h1v1h-1zM78 212h1v1h-1zM494 212h2v1h-2zM79 213h2v1h-2zM492 213h2v1h-2zM81 214h3v1h-3zM489 214h3v1h-3zM84 215h3v1h-3zM487 215h2v1h-2zM87 216h2v1h-2zM485 216h2v1h-2zM89 217h1v1h-1zM483 217h2v1h-2zM481 218h2v1h-2zM479 219h2v1h-2zM476 220h3v1h-3zM524 224h1v1h-1zM526 224h1v1h-1zM521 225h3v1h-3zM517 226h4v1h-4zM514 227h3v1h-3zM511 228h1v1h-1zM513 228h1v1h-1zM71 232h1v1h-1zM72 233h3v1h-3zM75 234h4v1h-4zM79 235h3v1h-3zM82 236h2v1h-2zM529 244h2v1h-2zM532 244h1v1h-1zM525 245h4v1h-4zM521 246h4v1h-4zM517 247h4v1h-4zM66 252h2v1h-2zM68 253h4v1h-4zM72 254h5v1h-5zM460 254h2v1h-2zM77 255h2v1h-2zM457 255h3v1h-3zM454 256h3v1h-3zM451 257h3v1h-3zM449 258h2v1h-2zM576 258h4v1h-4zM569 259h7v1h-7zM562 260h7v1h-7zM554 261h8v1h-8zM547 262h7v1h-7zM540 263h7v1h-7zM532 264h8v1h-8zM525 265h7v1h-7zM522 266h3v1h-3zM62 272h4v1h-4zM66 273h7v1h-7zM73 274h3v1h-3zM530 285h7v1h-7zM523 286h7v1h-7zM61 293h7v1h-7zM68 294h7v1h-7zM75 299h30v1h-30zM141 299h3v1h-3zM494 299h30v1h-30zM137 300h4v1h-4zM133 301h4v1h-4zM131 302h2v1h-2zM524 304h7v1h-7zM531 305h7v1h-7zM68 312h8v1h-8zM62 313h6v1h-6zM523 324h3v1h-3zM452 325h3v1h-3zM526 325h7v1h-7zM455 326h6v1h-6zM533 326h4v1h-4zM461 327h4v1h-4zM74 332h3v1h-3zM67 333h7v1h-7zM59 334h8v1h-8zM52 335h7v1h-7zM45 336h7v1h-7zM37 337h8v1h-8zM30 338h7v1h-7zM23 339h7v1h-7zM19 340h4v1h-4zM518 343h1v1h-1zM520 343h2v1h-2zM448 344h2v1h-2zM522 344h4v1h-4zM450 345h3v1h-3zM526 345h5v1h-5zM453 346h2v1h-2zM531 346h2v1h-2zM455 347h3v1h-3zM458 348h2v1h-2zM78 351h3v1h-3zM74 352h4v1h-4zM70 353h4v1h-4zM68 354h2v1h-2zM515 362h2v1h-2zM517 363h3v1h-3zM520 364h4v1h-4zM524 365h3v1h-3zM527 366h2v1h-2zM85 370h1v1h-1zM87 370h1v1h-1zM82 371h3v1h-3zM78 372h4v1h-4zM75 373h3v1h-3zM72 374h1v1h-1zM74 374h1v1h-1zM120 378h3v1h-3zM118 379h2v1h-2zM116 380h2v1h-2zM432 380h1v1h-1zM114 381h2v1h-2zM433 381h2v1h-2zM509 381h1v1h-1zM112 382h2v1h-2zM435 382h2v1h-2zM510 382h2v1h-2zM110 383h2v1h-2zM437 383h1v1h-1zM512 383h3v1h-3zM107 384h3v1h-3zM438 384h2v1h-2zM515 384h3v1h-3zM105 385h2v1h-2zM440 385h2v1h-2zM518 385h2v1h-2zM103 386h2v1h-2zM442 386h1v1h-1zM520 386h2v1h-2zM101 387h2v1h-2zM521 387h1v1h-1zM523 387h1v1h-1zM92 388h2v1h-2zM99 388h2v1h-2zM524 388h2v1h-2zM90 389h2v1h-2zM97 389h2v1h-2zM526 389h3v1h-3zM88 390h2v1h-2zM94 390h3v1h-3zM529 390h2v1h-2zM86 391h2v1h-2zM531 391h3v1h-3zM84 392h2v1h-2zM534 392h3v1h-3zM82 393h2v1h-2zM537 393h2v1h-2zM80 394h1v1h-1zM539 394h3v1h-3zM542 395h2v1h-2zM544 396h3v1h-3zM547 397h2v1h-2zM549 398h3v1h-3zM133 399h1v1h-1zM465 399h1v1h-1zM499 399h1v1h-1zM552 399h3v1h-3zM501 400h2v1h-2zM555 400h2v1h-2zM503 401h2v1h-2zM557 401h3v1h-3zM135 402h1v1h-1zM463 402h1v1h-1zM505 402h2v1h-2zM560 402h2v1h-2zM507 403h2v1h-2zM563 403h1v1h-1zM509 404h2v1h-2zM511 405h3v1h-3zM100 407h2v1h-2zM138 407h1v1h-1zM98 408h2v1h-2zM459 408h2v1h-2zM96 409h2v1h-2zM461 409h2v1h-2zM94 410h2v1h-2zM140 410h1v1h-1zM458 410h1v1h-1zM463 410h1v1h-1zM92 411h2v1h-2zM105 411h1v1h-1zM464 411h2v1h-2zM493 411h1v1h-1zM89 412h3v1h-3zM466 412h1v1h-1zM142 413h1v1h-1zM456 413h1v1h-1zM467 413h2v1h-2zM107 414h1v1h-1zM143 414h1v1h-1zM455 414h1v1h-1zM469 414h1v1h-1zM491 414h1v1h-1zM470 415h2v1h-2zM472 416h1v1h-1zM490 416h2v1h-2zM109 417h1v1h-1zM145 417h1v1h-1zM453 417h1v1h-1zM473 417h2v1h-2zM489 417h1v1h-1zM492 417h2v1h-2zM92 418h1v1h-1zM146 418h1v1h-1zM452 418h1v1h-1zM475 418h1v1h-1zM494 418h1v1h-1zM506 418h1v1h-1zM147 419h1v1h-1zM451 419h1v1h-1zM476 419h2v1h-2zM495 419h2v1h-2zM148 420h1v1h-1zM450 420h1v1h-1zM478 420h1v1h-1zM497 420h2v1h-2zM479 421h2v1h-2zM499 421h1v1h-1zM481 422h1v1h-1zM500 422h2v1h-2zM150 423h1v1h-1zM448 423h1v1h-1zM482 423h2v1h-2zM502 423h2v1h-2zM110 424h2v1h-2zM113 424h1v1h-1zM151 424h1v1h-1zM447 424h1v1h-1zM484 424h2v1h-2zM96 425h1v1h-1zM108 425h2v1h-2zM114 425h1v1h-1zM152 425h1v1h-1zM391 425h1v1h-1zM446 425h1v1h-1zM502 425h1v1h-1zM106 426h2v1h-2zM115 426h1v1h-1zM392 426h1v1h-1zM483 426h1v1h-1zM105 427h1v1h-1zM98 428h1v1h-1zM103 428h2v1h-2zM154 428h1v1h-1zM444 428h1v1h-1zM500 428h1v1h-1zM99 429h1v1h-1zM101 429h2v1h-2zM117 429h1v1h-1zM155 429h1v1h-1zM394 429h1v1h-1zM443 429h1v1h-1zM481 429h1v1h-1zM499 429h1v1h-1zM118 430h1v1h-1zM156 430h1v1h-1zM395 430h1v1h-1zM442 430h1v1h-1zM480 430h1v1h-1zM157 431h1v1h-1zM441 431h1v1h-1zM101 432h1v1h-1zM158 432h1v1h-1zM440 432h1v1h-1zM497 432h1v1h-1zM120 433h1v1h-1zM159 433h1v1h-1zM397 433h1v1h-1zM439 433h1v1h-1zM478 433h1v1h-1zM480 433h1v1h-1zM121 434h1v1h-1zM160 434h1v1h-1zM398 434h1v1h-1zM438 434h1v1h-1zM477 434h1v1h-1zM481 434h2v1h-2zM103 435h1v1h-1zM161 435h1v1h-1zM375 435h1v1h-1zM437 435h1v1h-1zM483 435h1v1h-1zM495 435h1v1h-1zM104 436h1v1h-1zM162 436h1v1h-1zM436 436h1v1h-1zM484 436h1v1h-1zM494 436h1v1h-1zM123 437h1v1h-1zM163 437h1v1h-1zM435 437h1v1h-1zM475 437h1v1h-1zM485 437h2v1h-2zM124 438h1v1h-1zM164 438h1v1h-1zM434 438h1v1h-1zM474 438h1v1h-1zM487 438h1v1h-1zM106 439h1v1h-1zM123 439h1v1h-1zM125 439h1v1h-1zM165 439h1v1h-1zM433 439h1v1h-1zM473 439h1v1h-1zM488 439h1v1h-1zM492 439h1v1h-1zM121 440h2v1h-2zM166 440h1v1h-1zM378 440h1v1h-1zM432 440h1v1h-1zM489 440h3v1h-3zM53 441h1v1h-1zM120 441h1v1h-1zM167 441h1v1h-1zM431 441h1v1h-1zM545 441h1v1h-1zM108 442h1v1h-1zM119 442h1v1h-1zM127 442h1v1h-1zM168 442h1v1h-1zM430 442h1v1h-1zM471 442h1v1h-1zM490 442h1v1h-1zM109 443h1v1h-1zM117 443h2v1h-2zM128 443h1v1h-1zM169 443h1v1h-1zM429 443h1v1h-1zM470 443h1v1h-1zM489 443h1v1h-1zM55 444h1v1h-1zM116 444h1v1h-1zM129 444h1v1h-1zM428 444h1v1h-1zM469 444h1v1h-1zM543 444h1v1h-1zM115 445h1v1h-1zM130 445h1v1h-1zM170 445h3v1h-3zM381 445h1v1h-1zM426 445h2v1h-2zM468 445h1v1h-1zM111 446h1v1h-1zM113 446h2v1h-2zM169 446h1v1h-1zM173 446h1v1h-1zM425 446h1v1h-1zM487 446h1v1h-1zM112 447h1v1h-1zM168 447h1v1h-1zM174 447h1v1h-1zM424 447h1v1h-1zM486 447h1v1h-1zM111 448h1v1h-1zM113 448h1v1h-1zM132 448h1v1h-1zM167 448h1v1h-1zM175 448h1v1h-1zM423 448h1v1h-1zM466 448h1v1h-1zM485 448h1v1h-1zM58 449h1v1h-1zM110 449h1v1h-1zM133 449h1v1h-1zM166 449h1v1h-1zM176 449h1v1h-1zM421 449h2v1h-2zM465 449h1v1h-1zM468 449h1v1h-1zM540 449h1v1h-1zM108 450h2v1h-2zM134 450h1v1h-1zM177 450h2v1h-2zM420 450h1v1h-1zM464 450h1v1h-1zM469 450h1v1h-1zM107 451h1v1h-1zM115 451h1v1h-1zM135 451h1v1h-1zM179 451h1v1h-1zM419 451h1v1h-1zM463 451h1v1h-1zM470 451h1v1h-1zM483 451h1v1h-1zM60 452h1v1h-1zM106 452h1v1h-1zM116 452h1v1h-1zM136 452h1v1h-1zM164 452h1v1h-1zM180 452h1v1h-1zM418 452h1v1h-1zM462 452h1v1h-1zM471 452h1v1h-1zM482 452h1v1h-1zM538 452h1v1h-1zM105 453h1v1h-1zM117 453h1v1h-1zM137 453h1v1h-1zM163 453h1v1h-1zM181 453h1v1h-1zM417 453h1v1h-1zM461 453h1v1h-1zM472 453h2v1h-2zM481 453h1v1h-1zM103 454h2v1h-2zM118 454h1v1h-1zM136 454h1v1h-1zM138 454h1v1h-1zM162 454h1v1h-1zM182 454h2v1h-2zM415 454h2v1h-2zM460 454h1v1h-1zM474 454h1v1h-1zM480 454h1v1h-1zM62 455h1v1h-1zM102 455h1v1h-1zM135 455h1v1h-1zM139 455h1v1h-1zM161 455h1v1h-1zM184 455h1v1h-1zM414 455h1v1h-1zM459 455h1v1h-1zM475 455h1v1h-1zM536 455h1v1h-1zM101 456h1v1h-1zM134 456h1v1h-1zM140 456h1v1h-1zM160 456h1v1h-1zM185 456h1v1h-1zM413 456h1v1h-1zM458 456h1v1h-1zM476 456h1v1h-1zM100 457h1v1h-1zM120 457h1v1h-1zM133 457h1v1h-1zM141 457h1v1h-1zM159 457h1v1h-1zM186 457h2v1h-2zM411 457h2v1h-2zM457 457h1v1h-1zM477 457h2v1h-2zM64 458h1v1h-1zM98 458h2v1h-2zM121 458h1v1h-1zM131 458h2v1h-2zM142 458h1v1h-1zM158 458h1v1h-1zM188 458h1v1h-1zM410 458h1v1h-1zM456 458h1v1h-1zM534 458h1v1h-1zM97 459h1v1h-1zM122 459h1v1h-1zM130 459h1v1h-1zM143 459h1v1h-1zM157 459h1v1h-1zM189 459h2v1h-2zM408 459h2v1h-2zM455 459h1v1h-1zM476 459h1v1h-1zM96 460h1v1h-1zM123 460h1v1h-1zM129 460h1v1h-1zM144 460h1v1h-1zM191 460h1v1h-1zM407 460h1v1h-1zM454 460h1v1h-1zM475 460h1v1h-1zM66 461h1v1h-1zM94 461h2v1h-2zM124 461h1v1h-1zM128 461h1v1h-1zM145 461h1v1h-1zM192 461h2v1h-2zM405 461h2v1h-2zM453 461h1v1h-1zM474 461h1v1h-1zM532 461h1v1h-1zM93 462h1v1h-1zM127 462h1v1h-1zM146 462h1v1h-1zM155 462h1v1h-1zM194 462h2v1h-2zM403 462h2v1h-2zM452 462h1v1h-1zM454 462h1v1h-1zM92 463h1v1h-1zM125 463h2v1h-2zM147 463h1v1h-1zM154 463h1v1h-1zM196 463h1v1h-1zM402 463h1v1h-1zM451 463h1v1h-1zM455 463h1v1h-1zM91 464h1v1h-1zM148 464h1v1h-1zM153 464h1v1h-1zM197 464h2v1h-2zM400 464h2v1h-2zM450 464h1v1h-1zM456 464h1v1h-1zM472 464h1v1h-1zM89 465h2v1h-2zM127 465h1v1h-1zM149 465h1v1h-1zM152 465h1v1h-1zM199 465h1v1h-1zM399 465h1v1h-1zM449 465h1v1h-1zM457 465h1v1h-1zM471 465h1v1h-1zM69 466h1v1h-1zM88 466h1v1h-1zM128 466h1v1h-1zM150 466h2v1h-2zM200 466h2v1h-2zM397 466h2v1h-2zM448 466h1v1h-1zM458 466h1v1h-1zM470 466h1v1h-1zM529 466h1v1h-1zM70 467h1v1h-1zM87 467h1v1h-1zM129 467h1v1h-1zM150 467h2v1h-2zM202 467h1v1h-1zM395 467h2v1h-2zM446 467h2v1h-2zM469 467h1v1h-1zM528 467h1v1h-1zM86 468h1v1h-1zM130 468h1v1h-1zM149 468h1v1h-1zM152 468h2v1h-2zM203 468h2v1h-2zM393 468h2v1h-2zM445 468h1v1h-1zM468 468h1v1h-1zM84 469h2v1h-2zM131 469h1v1h-1zM148 469h1v1h-1zM154 469h1v1h-1zM205 469h2v1h-2zM391 469h2v1h-2zM444 469h1v1h-1zM460 469h1v1h-1zM467 469h1v1h-1zM72 470h1v1h-1zM83 470h1v1h-1zM132 470h1v1h-1zM147 470h1v1h-1zM155 470h1v1h-1zM207 470h2v1h-2zM389 470h2v1h-2zM443 470h1v1h-1zM461 470h1v1h-1zM466 470h1v1h-1zM526 470h1v1h-1zM73 471h1v1h-1zM82 471h1v1h-1zM133 471h1v1h-1zM146 471h1v1h-1zM156 471h1v1h-1zM209 471h2v1h-2zM387 471h2v1h-2zM442 471h1v1h-1zM462 471h1v1h-1zM465 471h1v1h-1zM525 471h1v1h-1zM81 472h1v1h-1zM134 472h1v1h-1zM157 472h1v1h-1zM211 472h2v1h-2zM385 472h2v1h-2zM440 472h2v1h-2zM463 472h2v1h-2zM79 473h2v1h-2zM135 473h1v1h-1zM158 473h2v1h-2zM213 473h2v1h-2zM383 473h2v1h-2zM439 473h1v1h-1zM462 473h2v1h-2zM75 474h1v1h-1zM78 474h1v1h-1zM136 474h2v1h-2zM144 474h1v1h-1zM160 474h1v1h-1zM215 474h2v1h-2zM381 474h2v1h-2zM438 474h1v1h-1zM461 474h1v1h-1zM523 474h1v1h-1zM76 475h2v1h-2zM138 475h1v1h-1zM143 475h1v1h-1zM161 475h1v1h-1zM217 475h2v1h-2zM379 475h2v1h-2zM437 475h1v1h-1zM439 475h1v1h-1zM460 475h1v1h-1zM522 475h1v1h-1zM139 476h1v1h-1zM142 476h1v1h-1zM162 476h2v1h-2zM219 476h3v1h-3zM377 476h2v1h-2zM435 476h2v1h-2zM459 476h1v1h-1zM521 476h1v1h-1zM78 477h1v1h-1zM140 477h2v1h-2zM164 477h1v1h-1zM222 477h2v1h-2zM375 477h2v1h-2zM434 477h1v1h-1zM458 477h1v1h-1zM520 477h1v1h-1zM79 478h1v1h-1zM165 478h1v1h-1zM224 478h2v1h-2zM373 478h2v1h-2zM433 478h1v1h-1zM441 478h1v1h-1zM457 478h1v1h-1zM519 478h1v1h-1zM80 479h1v1h-1zM142 479h2v1h-2zM166 479h2v1h-2zM226 479h3v1h-3zM370 479h3v1h-3zM431 479h2v1h-2zM442 479h1v1h-1zM455 479h2v1h-2zM518 479h1v1h-1zM81 480h1v1h-1zM144 480h1v1h-1zM165 480h1v1h-1zM168 480h1v1h-1zM229 480h3v1h-3zM367 480h3v1h-3zM430 480h1v1h-1zM454 480h1v1h-1zM517 480h1v1h-1zM82 481h1v1h-1zM145 481h1v1h-1zM169 481h1v1h-1zM232 481h3v1h-3zM366 481h1v1h-1zM429 481h1v1h-1zM453 481h1v1h-1zM516 481h1v1h-1zM83 482h1v1h-1zM146 482h1v1h-1zM170 482h1v1h-1zM235 482h3v1h-3zM361 482h3v1h-3zM427 482h2v1h-2zM444 482h1v1h-1zM452 482h1v1h-1zM515 482h1v1h-1zM147 483h1v1h-1zM163 483h1v1h-1zM171 483h2v1h-2zM238 483h3v1h-3zM358 483h3v1h-3zM426 483h1v1h-1zM445 483h1v1h-1zM451 483h1v1h-1zM148 484h1v1h-1zM162 484h1v1h-1zM173 484h1v1h-1zM241 484h4v1h-4zM354 484h4v1h-4zM425 484h1v1h-1zM449 484h2v1h-2zM85 485h1v1h-1zM149 485h2v1h-2zM174 485h1v1h-1zM245 485h3v1h-3zM351 485h3v1h-3zM424 485h1v1h-1zM448 485h1v1h-1zM513 485h1v1h-1zM86 486h1v1h-1zM151 486h1v1h-1zM175 486h2v1h-2zM248 486h3v1h-3zM348 486h3v1h-3zM422 486h2v1h-2zM447 486h1v1h-1zM512 486h1v1h-1zM152 487h1v1h-1zM160 487h1v1h-1zM177 487h2v1h-2zM251 487h3v1h-3zM345 487h3v1h-3zM420 487h2v1h-2zM446 487h1v1h-1zM448 487h1v1h-1zM153 488h2v1h-2zM159 488h1v1h-1zM179 488h2v1h-2zM254 488h4v1h-4zM341 488h4v1h-4zM418 488h2v1h-2zM444 488h2v1h-2zM449 488h1v1h-1zM88 489h1v1h-1zM155 489h1v1h-1zM181 489h1v1h-1zM258 489h5v1h-5zM336 489h5v1h-5zM417 489h1v1h-1zM443 489h1v1h-1zM510 489h1v1h-1zM89 490h1v1h-1zM156 490h1v1h-1zM182 490h2v1h-2zM263 490h6v1h-6zM329 490h7v1h-7zM415 490h2v1h-2zM442 490h1v1h-1zM509 490h1v1h-1zM90 491h1v1h-1zM157 491h1v1h-1zM184 491h1v1h-1zM269 491h7v1h-7zM323 491h6v1h-6zM414 491h1v1h-1zM426 491h1v1h-1zM440 491h2v1h-2zM451 491h1v1h-1zM508 491h1v1h-1zM91 492h1v1h-1zM159 492h1v1h-1zM185 492h2v1h-2zM276 492h7v1h-7zM316 492h7v1h-7zM412 492h2v1h-2zM439 492h1v1h-1zM452 492h1v1h-1zM507 492h1v1h-1zM92 493h1v1h-1zM160 493h2v1h-2zM187 493h1v1h-1zM283 493h33v1h-33zM411 493h1v1h-1zM437 493h2v1h-2zM453 493h1v1h-1zM506 493h1v1h-1zM93 494h1v1h-1zM162 494h1v1h-1zM180 494h1v1h-1zM188 494h2v1h-2zM409 494h2v1h-2zM436 494h1v1h-1zM505 494h1v1h-1zM94 495h1v1h-1zM163 495h1v1h-1zM190 495h2v1h-2zM407 495h2v1h-2zM435 495h1v1h-1zM504 495h1v1h-1zM95 496h1v1h-1zM164 496h2v1h-2zM192 496h2v1h-2zM405 496h2v1h-2zM433 496h2v1h-2zM455 496h1v1h-1zM503 496h1v1h-1zM96 497h1v1h-1zM166 497h1v1h-1zM194 497h2v1h-2zM403 497h2v1h-2zM432 497h1v1h-1zM456 497h1v1h-1zM502 497h1v1h-1zM97 498h1v1h-1zM167 498h2v1h-2zM196 498h2v1h-2zM401 498h2v1h-2zM430 498h2v1h-2zM457 498h1v1h-1zM501 498h1v1h-1zM98 499h1v1h-1zM169 499h1v1h-1zM177 499h1v1h-1zM198 499h2v1h-2zM399 499h2v1h-2zM429 499h1v1h-1zM500 499h1v1h-1zM99 500h1v1h-1zM170 500h1v1h-1zM199 500h3v1h-3zM397 500h2v1h-2zM428 500h1v1h-1zM499 500h1v1h-1zM100 501h1v1h-1zM171 501h2v1h-2zM202 501h2v1h-2zM395 501h2v1h-2zM426 501h2v1h-2zM459 501h1v1h-1zM498 501h1v1h-1zM101 502h1v1h-1zM173 502h1v1h-1zM204 502h2v1h-2zM393 502h2v1h-2zM425 502h1v1h-1zM460 502h1v1h-1zM497 502h1v1h-1zM102 503h1v1h-1zM174 503h2v1h-2zM206 503h2v1h-2zM391 503h2v1h-2zM423 503h2v1h-2zM461 503h1v1h-1zM496 503h1v1h-1zM103 504h1v1h-1zM176 504h2v1h-2zM208 504h2v1h-2zM389 504h2v1h-2zM421 504h2v1h-2zM495 504h1v1h-1zM104 505h1v1h-1zM178 505h2v1h-2zM210 505h2v1h-2zM387 505h2v1h-2zM419 505h2v1h-2zM494 505h1v1h-1zM105 506h1v1h-1zM180 506h1v1h-1zM212 506h2v1h-2zM385 506h2v1h-2zM418 506h1v1h-1zM463 506h1v1h-1zM493 506h1v1h-1zM106 507h1v1h-1zM181 507h2v1h-2zM214 507h3v1h-3zM381 507h4v1h-4zM416 507h2v1h-2zM464 507h1v1h-1zM492 507h1v1h-1zM107 508h1v1h-1zM183 508h2v1h-2zM217 508h4v1h-4zM377 508h4v1h-4zM414 508h2v1h-2zM491 508h1v1h-1zM108 509h1v1h-1zM185 509h2v1h-2zM221 509h4v1h-4zM374 509h3v1h-3zM413 509h1v1h-1zM490 509h1v1h-1zM109 510h1v1h-1zM187 510h1v1h-1zM225 510h2v1h-2zM372 510h2v1h-2zM410 510h2v1h-2zM466 510h1v1h-1zM489 510h1v1h-1zM110 511h1v1h-1zM188 511h2v1h-2zM227 511h2v1h-2zM371 511h1v1h-1zM408 511h2v1h-2zM467 511h1v1h-1zM487 511h2v1h-2zM111 512h2v1h-2zM190 512h2v1h-2zM229 512h3v1h-3zM366 512h5v1h-5zM406 512h2v1h-2zM468 512h1v1h-1zM486 512h1v1h-1zM113 513h1v1h-1zM192 513h1v1h-1zM232 513h4v1h-4zM362 513h4v1h-4zM404 513h2v1h-2zM485 513h1v1h-1zM114 514h1v1h-1zM194 514h3v1h-3zM236 514h4v1h-4zM359 514h3v1h-3zM402 514h2v1h-2zM483 514h2v1h-2zM115 515h2v1h-2zM197 515h2v1h-2zM240 515h4v1h-4zM355 515h4v1h-4zM400 515h2v1h-2zM470 515h1v1h-1zM482 515h1v1h-1zM117 516h1v1h-1zM199 516h2v1h-2zM244 516h4v1h-4zM351 516h4v1h-4zM398 516h2v1h-2zM471 516h1v1h-1zM481 516h1v1h-1zM118 517h1v1h-1zM201 517h2v1h-2zM247 517h4v1h-4zM347 517h4v1h-4zM394 517h4v1h-4zM472 517h1v1h-1zM480 517h1v1h-1zM119 518h1v1h-1zM203 518h2v1h-2zM251 518h4v1h-4zM343 518h4v1h-4zM393 518h2v1h-2zM479 518h1v1h-1zM120 519h1v1h-1zM205 519h2v1h-2zM255 519h4v1h-4zM339 519h4v1h-4zM391 519h2v1h-2zM478 519h1v1h-1zM121 520h1v1h-1zM207 520h2v1h-2zM259 520h6v1h-6zM334 520h5v1h-5zM389 520h2v1h-2zM474 520h1v1h-1zM477 520h1v1h-1zM122 521h1v1h-1zM209 521h4v1h-4zM265 521h7v1h-7zM326 521h8v1h-8zM387 521h2v1h-2zM475 521h2v1h-2zM123 522h1v1h-1zM211 522h3v1h-3zM272 522h16v1h-16zM310 522h16v1h-16zM384 522h3v1h-3zM124 523h1v1h-1zM214 523h3v1h-3zM288 523h22v1h-22zM382 523h2v1h-2zM474 523h1v1h-1zM125 524h1v1h-1zM217 524h3v1h-3zM379 524h3v1h-3zM472 524h2v1h-2zM126 525h2v1h-2zM220 525h4v1h-4zM374 525h5v1h-5zM471 525h1v1h-1zM128 526h1v1h-1zM224 526h3v1h-3zM372 526h3v1h-3zM470 526h1v1h-1zM129 527h1v1h-1zM227 527h2v1h-2zM369 527h3v1h-3zM468 527h2v1h-2zM130 528h2v1h-2zM229 528h4v1h-4zM367 528h2v1h-2zM467 528h1v1h-1zM132 529h1v1h-1zM232 529h4v1h-4zM363 529h4v1h-4zM466 529h1v1h-1zM133 530h2v1h-2zM236 530h4v1h-4zM359 530h4v1h-4zM464 530h2v1h-2zM135 531h1v1h-1zM240 531h4v1h-4zM354 531h5v1h-5zM462 531h2v1h-2zM136 532h2v1h-2zM244 532h4v1h-4zM350 532h4v1h-4zM461 532h1v1h-1zM138 533h2v1h-2zM248 533h6v1h-6zM344 533h6v1h-6zM459 533h2v1h-2zM140 534h1v1h-1zM254 534h6v1h-6zM338 534h6v1h-6zM458 534h1v1h-1zM141 535h2v1h-2zM260 535h4v1h-4zM335 535h3v1h-3zM456 535h2v1h-2zM143 536h1v1h-1zM264 536h6v1h-6zM328 536h6v1h-6zM455 536h1v1h-1zM144 537h2v1h-2zM270 537h17v1h-17zM311 537h17v1h-17zM453 537h2v1h-2zM146 538h1v1h-1zM287 538h24v1h-24zM452 538h1v1h-1zM147 539h2v1h-2zM450 539h2v1h-2zM149 540h1v1h-1zM449 540h1v1h-1zM150 541h2v1h-2zM447 541h2v1h-2zM152 542h1v1h-1zM445 542h2v1h-2zM153 543h2v1h-2zM444 543h1v1h-1zM155 544h2v1h-2zM442 544h2v1h-2zM157 545h1v1h-1zM441 545h1v1h-1zM158 546h2v1h-2zM439 546h2v1h-2zM160 547h2v1h-2zM437 547h2v1h-2zM162 548h2v1h-2zM435 548h2v1h-2zM164 549h2v1h-2zM433 549h2v1h-2zM166 550h2v1h-2zM431 550h2v1h-2zM168 551h2v1h-2zM429 551h2v1h-2zM170 552h2v1h-2zM427 552h2v1h-2zM172 553h2v1h-2zM425 553h2v1h-2zM174 554h3v1h-3zM422 554h3v1h-3zM177 555h2v1h-2zM420 555h2v1h-2zM179 556h2v1h-2zM418 556h2v1h-2zM181 557h2v1h-2zM416 557h2v1h-2zM183 558h3v1h-3zM413 558h3v1h-3zM186 559h2v1h-2zM411 559h2v1h-2zM188 560h2v1h-2zM409 560h2v1h-2zM190 561h2v1h-2zM407 561h2v1h-2zM192 562h4v1h-4zM404 562h3v1h-3zM195 563h2v1h-2zM402 563h2v1h-2zM197 564h2v1h-2zM400 564h2v1h-2zM199 565h2v1h-2zM398 565h2v1h-2zM201 566h3v1h-3zM395 566h3v1h-3zM204 567h3v1h-3zM391 567h4v1h-4zM207 568h4v1h-4zM388 568h3v1h-3zM211 569h3v1h-3zM385 569h3v1h-3zM214 570h3v1h-3zM382 570h3v1h-3zM217 571h3v1h-3zM379 571h3v1h-3zM220 572h3v1h-3zM376 572h3v1h-3zM223 573h3v1h-3zM372 573h4v1h-4zM226 574h4v1h-4zM369 574h3v1h-3zM230 575h4v1h-4zM365 575h4v1h-4zM234 576h4v1h-4zM361 576h4v1h-4zM238 577h5v1h-5zM356 577h5v1h-5zM243 578h5v1h-5zM351 578h5v1h-5zM248 579h7v1h-7zM343 579h8v1h-8zM255 580h10v1h-10zM333 580h10v1h-10zM265 581h10v1h-10zM323 581h10v1h-10zM275 582h10v1h-10zM313 582h10v1h-10zM285 583h28v1h-28zM15 285h1v28h-1zM16 275h1v10h-1zM16 313h1v10h-1zM17 265h1v10h-1zM17 323h1v10h-1zM18 255h1v10h-1zM18 333h1v10h-1zM19 248h1v7h-1zM19 343h1v8h-1zM20 243h1v5h-1zM20 351h1v5h-1zM21 238h1v5h-1zM21 356h1v5h-1zM22 234h1v4h-1zM22 361h1v4h-1zM23 230h1v4h-1zM23 365h1v4h-1zM24 226h1v4h-1zM24 369h1v3h-1zM25 223h1v3h-1zM25 372h1v4h-1zM26 220h1v3h-1zM26 376h1v3h-1zM27 217h1v3h-1zM27 379h1v3h-1zM28 214h1v3h-1zM28 382h1v3h-1zM29 211h1v3h-1zM29 385h1v3h-1zM30 207h1v4h-1zM30 388h1v3h-1zM31 204h1v3h-1zM31 391h1v4h-1zM32 201h1v3h-1zM32 395h1v3h-1zM33 199h1v2h-1zM33 398h1v2h-1zM34 197h1v2h-1zM34 400h1v2h-1zM35 196h1v1h-1zM35 402h1v2h-1zM36 192h1v4h-1zM36 404h1v3h-1zM37 190h1v2h-1zM37 407h1v2h-1zM38 188h1v2h-1zM38 409h1v2h-1zM39 186h1v2h-1zM39 411h1v2h-1zM40 183h1v3h-1zM40 413h1v3h-1zM41 181h1v2h-1zM41 416h1v2h-1zM42 179h1v2h-1zM42 418h1v2h-1zM43 177h1v2h-1zM43 420h1v2h-1zM44 174h1v3h-1zM44 422h1v3h-1zM45 172h1v2h-1zM45 425h1v2h-1zM46 170h1v2h-1zM46 427h1v2h-1zM47 168h1v2h-1zM47 429h1v2h-1zM48 166h1v2h-1zM48 431h1v2h-1zM49 164h1v2h-1zM49 433h1v2h-1zM50 162h1v2h-1zM50 435h1v2h-1zM51 160h1v2h-1zM51 437h1v2h-1zM52 158h1v2h-1zM52 439h1v2h-1zM54 155h1v2h-1zM54 442h1v2h-1zM55 153h1v2h-1zM56 445h1v2h-1zM57 150h1v2h-1zM57 447h1v2h-1zM59 147h1v2h-1zM59 450h1v2h-1zM60 287h1v24h-1zM61 144h1v2h-1zM61 270h1v17h-1zM61 311h1v17h-1zM61 453h1v2h-1zM62 264h1v6h-1zM62 328h1v6h-1zM63 141h1v2h-1zM63 260h1v4h-1zM63 335h1v3h-1zM63 456h1v2h-1zM64 254h1v6h-1zM64 338h1v6h-1zM65 138h1v2h-1zM65 248h1v6h-1zM65 344h1v6h-1zM65 459h1v2h-1zM66 136h1v2h-1zM66 244h1v4h-1zM66 350h1v4h-1zM67 240h1v4h-1zM67 354h1v5h-1zM67 462h1v2h-1zM68 133h1v2h-1zM68 236h1v4h-1zM68 359h1v4h-1zM68 464h1v2h-1zM69 232h1v4h-1zM69 363h1v4h-1zM70 130h1v2h-1zM70 229h1v4h-1zM70 367h1v2h-1zM71 227h1v2h-1zM71 369h1v3h-1zM71 468h1v2h-1zM72 224h1v3h-1zM72 372h1v2h-1zM73 126h1v2h-1zM73 220h1v4h-1zM73 374h1v5h-1zM74 217h1v3h-1zM74 379h1v3h-1zM74 472h1v2h-1zM75 214h1v3h-1zM75 288h1v11h-1zM75 300h1v10h-1zM75 382h1v2h-1zM76 213h1v1h-1zM76 272h1v16h-1zM76 310h1v16h-1zM76 384h1v3h-1zM77 209h1v4h-1zM77 265h1v7h-1zM77 326h1v8h-1zM77 387h1v2h-1zM77 476h1v1h-1zM78 207h1v2h-1zM78 259h1v6h-1zM78 334h1v5h-1zM78 389h1v2h-1zM79 205h1v2h-1zM79 255h1v4h-1zM79 339h1v4h-1zM79 391h1v2h-1zM80 203h1v2h-1zM80 251h1v4h-1zM80 343h1v4h-1zM80 393h1v1h-1zM81 201h1v2h-1zM81 247h1v4h-1zM81 347h1v4h-1zM81 394h1v4h-1zM82 199h1v2h-1zM82 244h1v3h-1zM82 351h1v4h-1zM82 398h1v2h-1zM83 115h1v2h-1zM83 197h1v2h-1zM83 240h1v4h-1zM83 355h1v4h-1zM83 400h1v2h-1zM84 194h1v3h-1zM84 236h1v4h-1zM84 359h1v3h-1zM84 402h1v2h-1zM84 483h1v2h-1zM85 192h1v1h-1zM85 232h1v4h-1zM85 362h1v4h-1zM85 404h1v2h-1zM86 111h1v2h-1zM86 190h1v2h-1zM86 229h1v3h-1zM86 366h1v5h-1zM86 406h1v2h-1zM87 188h1v2h-1zM87 227h1v2h-1zM87 371h1v1h-1zM87 408h1v2h-1zM87 487h1v2h-1zM88 225h1v2h-1zM88 372h1v2h-1zM88 410h1v2h-1zM89 185h1v2h-1zM89 221h1v4h-1zM89 374h1v3h-1zM89 413h1v1h-1zM90 183h1v2h-1zM90 217h1v4h-1zM90 377h1v4h-1zM90 414h1v2h-1zM91 181h1v2h-1zM91 214h1v3h-1zM91 381h1v4h-1zM91 416h1v2h-1zM92 212h1v2h-1zM92 385h1v2h-1zM93 178h1v2h-1zM93 210h1v2h-1zM93 387h1v1h-1zM93 419h1v2h-1zM94 176h1v2h-1zM94 208h1v2h-1zM94 389h1v1h-1zM94 421h1v2h-1zM95 174h1v1h-1zM95 206h1v2h-1zM95 391h1v2h-1zM95 423h1v2h-1zM96 204h1v2h-1zM96 393h1v2h-1zM97 171h1v2h-1zM97 202h1v2h-1zM97 395h1v2h-1zM97 426h1v2h-1zM98 200h1v2h-1zM98 397h1v2h-1zM99 198h1v1h-1zM99 399h1v2h-1zM100 167h1v2h-1zM100 196h1v2h-1zM100 401h1v2h-1zM100 430h1v2h-1zM101 194h1v2h-1zM101 403h1v2h-1zM102 164h1v2h-1zM102 192h1v2h-1zM102 405h1v2h-1zM102 433h1v2h-1zM103 190h1v2h-1zM103 407h1v2h-1zM104 188h1v2h-1zM104 409h1v2h-1zM105 160h1v2h-1zM105 283h1v33h-1zM105 437h1v2h-1zM106 185h1v2h-1zM106 276h1v7h-1zM106 316h1v7h-1zM106 412h1v2h-1zM107 157h1v1h-1zM107 269h1v7h-1zM107 323h1v6h-1zM107 440h1v2h-1zM108 183h1v1h-1zM108 263h1v6h-1zM108 329h1v7h-1zM108 415h1v2h-1zM109 258h1v5h-1zM109 336h1v5h-1zM110 153h1v2h-1zM110 179h1v2h-1zM110 254h1v4h-1zM110 341h1v4h-1zM110 418h1v2h-1zM110 444h1v2h-1zM111 177h1v2h-1zM111 251h1v3h-1zM111 345h1v3h-1zM111 420h1v2h-1zM112 175h1v2h-1zM112 248h1v3h-1zM112 348h1v3h-1zM112 422h1v2h-1zM113 149h1v2h-1zM113 245h1v3h-1zM113 351h1v3h-1zM114 173h1v1h-1zM114 241h1v4h-1zM114 354h1v4h-1zM114 449h1v2h-1zM115 171h1v2h-1zM115 238h1v3h-1zM115 358h1v3h-1zM116 235h1v3h-1zM116 361h1v3h-1zM116 427h1v2h-1zM117 232h1v3h-1zM117 364h1v3h-1zM118 229h1v3h-1zM118 367h1v3h-1zM119 142h1v2h-1zM119 166h1v2h-1zM119 226h1v3h-1zM119 370h1v3h-1zM119 431h1v2h-1zM119 455h1v2h-1zM120 224h1v2h-1zM120 373h1v2h-1zM121 140h1v1h-1zM121 222h1v2h-1zM121 375h1v2h-1zM122 162h1v2h-1zM122 219h1v3h-1zM122 377h1v1h-1zM122 435h1v2h-1zM123 76h1v1h-1zM123 217h1v2h-1zM123 379h1v2h-1zM124 136h1v2h-1zM124 215h1v2h-1zM124 381h1v2h-1zM125 79h1v2h-1zM125 158h1v2h-1zM125 213h1v2h-1zM125 383h1v2h-1zM125 462h1v1h-1zM126 211h1v2h-1zM126 385h1v2h-1zM126 440h1v2h-1zM126 464h1v1h-1zM127 209h1v2h-1zM127 387h1v2h-1zM128 207h1v2h-1zM128 389h1v2h-1zM129 84h1v2h-1zM129 205h1v2h-1zM129 391h1v2h-1zM130 152h1v2h-1zM130 203h1v2h-1zM130 393h1v2h-1zM131 151h1v1h-1zM131 395h1v2h-1zM131 446h1v2h-1zM132 200h1v2h-1zM132 397h1v2h-1zM133 89h1v2h-1zM134 197h1v2h-1zM134 400h1v2h-1zM135 125h1v1h-1zM136 194h1v2h-1zM136 403h1v2h-1zM137 94h1v2h-1zM137 192h1v2h-1zM137 405h1v2h-1zM138 191h1v1h-1zM139 189h1v1h-1zM139 408h1v2h-1zM140 98h1v2h-1zM140 131h1v2h-1zM141 186h1v2h-1zM141 411h1v2h-1zM141 478h1v1h-1zM144 103h1v2h-1zM144 182h1v2h-1zM144 415h1v2h-1zM145 472h1v2h-1zM148 108h1v2h-1zM148 177h1v2h-1zM149 421h1v2h-1zM152 113h1v2h-1zM153 171h1v2h-1zM153 426h1v2h-1zM155 117h1v2h-1zM156 460h1v2h-1zM158 121h1v2h-1zM158 489h1v3h-1zM161 485h1v2h-1zM164 481h1v2h-1zM165 450h1v2h-1zM169 101h1v2h-1zM170 103h1v2h-1zM170 444h1v1h-1zM172 106h1v2h-1zM173 108h1v2h-1zM174 110h1v2h-1zM175 502h1v1h-1zM176 500h1v2h-1zM178 497h1v2h-1zM179 495h1v2h-1zM181 492h1v2h-1zM182 491h1v1h-1zM186 89h1v3h-1zM187 92h1v2h-1zM188 94h1v2h-1zM189 96h1v2h-1zM190 98h1v2h-1zM191 100h1v2h-1zM193 511h1v3h-1zM194 509h1v2h-1zM195 507h1v2h-1zM196 505h1v2h-1zM196 560h1v2h-1zM197 503h1v2h-1zM197 557h1v3h-1zM198 501h1v2h-1zM198 555h1v2h-1zM199 552h1v3h-1zM200 549h1v3h-1zM201 547h1v2h-1zM202 544h1v3h-1zM203 542h1v2h-1zM204 81h1v1h-1zM204 539h1v3h-1zM205 82h1v2h-1zM205 537h1v2h-1zM206 84h1v2h-1zM206 534h1v3h-1zM207 86h1v2h-1zM207 531h1v3h-1zM208 88h1v2h-1zM208 529h1v2h-1zM209 90h1v2h-1zM209 526h1v3h-1zM210 92h1v1h-1zM210 524h1v2h-1zM211 523h1v1h-1zM212 520h1v1h-1zM213 518h1v2h-1zM214 515h1v3h-1zM215 512h1v3h-1zM216 510h1v2h-1zM217 509h1v1h-1zM224 74h1v1h-1zM224 90h1v1h-1zM225 75h1v3h-1zM225 91h1v3h-1zM226 78h1v4h-1zM226 94h1v3h-1zM227 82h1v3h-1zM227 97h1v3h-1zM228 85h1v1h-1zM228 87h1v1h-1zM228 100h1v3h-1zM229 103h1v3h-1zM230 106h1v3h-1zM231 109h1v3h-1zM232 112h1v3h-1zM232 527h1v1h-1zM233 115h1v3h-1zM233 524h1v3h-1zM234 520h1v4h-1zM235 517h1v3h-1zM236 515h1v2h-1zM244 68h1v2h-1zM245 70h1v4h-1zM246 74h1v4h-1zM247 78h1v3h-1zM247 514h1v2h-1zM248 510h1v4h-1zM249 506h1v4h-1zM250 502h1v4h-1zM251 498h1v4h-1zM252 494h1v4h-1zM252 531h1v2h-1zM253 490h1v4h-1zM253 526h1v5h-1zM254 489h1v1h-1zM254 522h1v4h-1zM255 520h1v2h-1zM258 19h1v4h-1zM259 23h1v7h-1zM260 30h1v7h-1zM261 37h1v8h-1zM262 45h1v7h-1zM263 52h1v7h-1zM264 59h1v8h-1zM265 67h1v7h-1zM266 74h1v3h-1zM272 533h1v4h-1zM273 526h1v7h-1zM274 523h1v3h-1zM285 62h1v6h-1zM286 68h1v8h-1zM293 531h1v7h-1zM294 524h1v7h-1zM304 68h1v7h-1zM305 61h1v7h-1zM312 523h1v7h-1zM313 530h1v7h-1zM324 73h1v3h-1zM325 66h1v7h-1zM326 62h1v4h-1zM331 451h1v2h-1zM332 453h1v4h-1zM332 522h1v3h-1zM333 457h1v4h-1zM333 525h1v7h-1zM334 461h1v3h-1zM334 532h1v8h-1zM335 146h1v3h-1zM335 540h1v7h-1zM336 142h1v4h-1zM336 547h1v7h-1zM337 138h1v4h-1zM337 554h1v8h-1zM338 136h1v2h-1zM338 562h1v7h-1zM339 569h1v7h-1zM340 576h1v4h-1zM343 77h1v2h-1zM344 72h1v5h-1zM344 108h1v2h-1zM345 68h1v4h-1zM345 104h1v4h-1zM346 66h1v2h-1zM346 100h1v4h-1zM347 96h1v4h-1zM348 92h1v4h-1zM349 88h1v4h-1zM350 84h1v4h-1zM351 83h1v1h-1zM351 518h1v3h-1zM352 521h1v4h-1zM353 525h1v4h-1zM354 529h1v2h-1zM361 442h1v2h-1zM362 82h1v2h-1zM362 444h1v3h-1zM363 79h1v3h-1zM363 447h1v2h-1zM364 75h1v4h-1zM364 449h1v3h-1zM365 72h1v3h-1zM365 452h1v2h-1zM365 481h1v3h-1zM366 71h1v1h-1zM366 484h1v3h-1zM367 487h1v3h-1zM368 490h1v3h-1zM369 493h1v3h-1zM370 496h1v3h-1zM370 511h1v1h-1zM370 513h1v1h-1zM371 499h1v3h-1zM371 514h1v3h-1zM372 502h1v3h-1zM372 517h1v4h-1zM373 505h1v3h-1zM373 521h1v3h-1zM374 508h1v1h-1zM374 524h1v1h-1zM376 436h1v2h-1zM377 438h1v2h-1zM379 441h1v2h-1zM380 443h1v2h-1zM381 89h1v1h-1zM382 87h1v2h-1zM383 84h1v3h-1zM384 81h1v3h-1zM385 79h1v2h-1zM386 78h1v1h-1zM387 75h1v1h-1zM388 73h1v2h-1zM388 506h1v1h-1zM389 70h1v3h-1zM389 507h1v2h-1zM390 68h1v2h-1zM390 509h1v2h-1zM391 65h1v3h-1zM391 511h1v2h-1zM392 62h1v3h-1zM392 513h1v2h-1zM393 60h1v2h-1zM393 427h1v2h-1zM393 515h1v2h-1zM394 57h1v3h-1zM395 55h1v2h-1zM396 52h1v3h-1zM396 431h1v2h-1zM397 50h1v2h-1zM398 47h1v3h-1zM399 44h1v3h-1zM399 97h1v1h-1zM399 99h1v1h-1zM400 42h1v2h-1zM400 95h1v2h-1zM401 39h1v3h-1zM401 93h1v2h-1zM402 37h1v2h-1zM402 91h1v2h-1zM403 89h1v2h-1zM404 87h1v2h-1zM407 497h1v2h-1zM408 499h1v2h-1zM409 501h1v2h-1zM410 503h1v2h-1zM411 505h1v2h-1zM412 507h1v3h-1zM416 107h1v1h-1zM417 105h1v2h-1zM419 102h1v2h-1zM420 100h1v2h-1zM422 97h1v2h-1zM423 96h1v1h-1zM424 487h1v2h-1zM425 489h1v2h-1zM427 492h1v2h-1zM428 154h1v1h-1zM428 494h1v2h-1zM429 496h1v2h-1zM433 147h1v2h-1zM434 116h1v2h-1zM437 112h1v2h-1zM440 107h1v3h-1zM440 476h1v2h-1zM442 137h1v2h-1zM443 480h1v2h-1zM445 171h1v2h-1zM445 426h1v2h-1zM446 484h1v2h-1zM449 421h1v2h-1zM450 177h1v2h-1zM450 489h1v2h-1zM452 126h1v2h-1zM454 182h1v2h-1zM454 415h1v2h-1zM454 494h1v2h-1zM457 120h1v1h-1zM457 186h1v2h-1zM457 411h1v2h-1zM458 499h1v2h-1zM459 189h1v2h-1zM459 409h1v1h-1zM459 467h1v2h-1zM460 407h1v1h-1zM461 192h1v2h-1zM461 405h1v2h-1zM462 194h1v2h-1zM462 403h1v2h-1zM462 504h1v2h-1zM464 197h1v2h-1zM464 400h1v2h-1zM465 508h1v2h-1zM466 200h1v2h-1zM466 397h1v2h-1zM467 395h1v2h-1zM467 446h1v3h-1zM468 152h1v2h-1zM468 203h1v2h-1zM468 393h1v2h-1zM469 205h1v2h-1zM469 391h1v2h-1zM469 513h1v2h-1zM470 207h1v2h-1zM470 389h1v2h-1zM471 209h1v2h-1zM471 387h1v2h-1zM472 134h1v1h-1zM472 211h1v2h-1zM472 385h1v2h-1zM472 440h1v2h-1zM473 158h1v2h-1zM473 213h1v2h-1zM473 383h1v2h-1zM473 462h1v2h-1zM473 518h1v2h-1zM474 136h1v2h-1zM474 215h1v2h-1zM474 381h1v2h-1zM475 217h1v2h-1zM475 379h1v2h-1zM475 522h1v1h-1zM476 162h1v2h-1zM476 219h1v1h-1zM476 221h1v1h-1zM476 377h1v2h-1zM476 435h1v2h-1zM477 222h1v2h-1zM477 375h1v2h-1zM477 458h1v1h-1zM478 224h1v2h-1zM478 373h1v2h-1zM479 142h1v2h-1zM479 166h1v2h-1zM479 226h1v3h-1zM479 370h1v3h-1zM479 431h1v2h-1zM479 455h1v2h-1zM480 229h1v3h-1zM480 367h1v3h-1zM481 232h1v3h-1zM481 364h1v3h-1zM482 235h1v3h-1zM482 361h1v3h-1zM482 427h1v2h-1zM483 171h1v2h-1zM483 238h1v3h-1zM483 358h1v3h-1zM484 241h1v4h-1zM484 354h1v4h-1zM484 425h1v1h-1zM484 449h1v2h-1zM485 149h1v2h-1zM485 245h1v3h-1zM485 351h1v3h-1zM486 175h1v2h-1zM486 248h1v3h-1zM486 348h1v3h-1zM486 422h1v2h-1zM487 177h1v2h-1zM487 251h1v3h-1zM487 345h1v3h-1zM487 420h1v2h-1zM488 153h1v2h-1zM488 179h1v2h-1zM488 254h1v4h-1zM488 341h1v4h-1zM488 418h1v2h-1zM488 444h1v2h-1zM489 258h1v5h-1zM489 336h1v5h-1zM490 182h1v2h-1zM490 263h1v6h-1zM490 329h1v7h-1zM490 415h1v1h-1zM491 157h1v2h-1zM491 269h1v7h-1zM491 323h1v6h-1zM491 441h1v1h-1zM492 185h1v2h-1zM492 276h1v7h-1zM492 316h1v7h-1zM492 412h1v2h-1zM493 160h1v2h-1zM493 283h1v33h-1zM493 437h1v2h-1zM494 188h1v2h-1zM494 409h1v2h-1zM495 190h1v2h-1zM495 407h1v2h-1zM496 164h1v2h-1zM496 192h1v2h-1zM496 405h1v2h-1zM496 433h1v2h-1zM497 194h1v2h-1zM497 403h1v2h-1zM498 167h1v2h-1zM498 196h1v2h-1zM498 401h1v2h-1zM498 430h1v2h-1zM499 198h1v2h-1zM499 400h1v1h-1zM500 200h1v2h-1zM500 397h1v3h-1zM501 171h1v2h-1zM501 202h1v2h-1zM501 395h1v2h-1zM501 426h1v2h-1zM502 204h1v2h-1zM502 393h1v2h-1zM503 174h1v2h-1zM503 206h1v2h-1zM503 391h1v2h-1zM503 424h1v1h-1zM504 176h1v2h-1zM504 209h1v1h-1zM504 389h1v2h-1zM504 421h1v2h-1zM505 178h1v2h-1zM505 211h1v1h-1zM505 387h1v2h-1zM505 419h1v2h-1zM506 212h1v2h-1zM506 385h1v2h-1zM507 181h1v2h-1zM507 214h1v3h-1zM507 381h1v4h-1zM507 416h1v2h-1zM508 183h1v2h-1zM508 217h1v4h-1zM508 377h1v5h-1zM508 414h1v2h-1zM509 185h1v1h-1zM509 221h1v4h-1zM509 374h1v3h-1zM509 412h1v2h-1zM510 225h1v2h-1zM510 372h1v2h-1zM510 410h1v2h-1zM511 188h1v2h-1zM511 227h1v1h-1zM511 370h1v2h-1zM511 408h1v2h-1zM511 487h1v2h-1zM512 111h1v2h-1zM512 190h1v2h-1zM512 228h1v4h-1zM512 366h1v4h-1zM512 406h1v2h-1zM513 192h1v2h-1zM513 232h1v4h-1zM513 362h1v4h-1zM513 404h1v1h-1zM514 194h1v3h-1zM514 236h1v4h-1zM514 359h1v3h-1zM514 402h1v2h-1zM514 483h1v2h-1zM515 115h1v2h-1zM515 197h1v2h-1zM515 240h1v4h-1zM515 355h1v4h-1zM515 400h1v2h-1zM516 199h1v2h-1zM516 244h1v3h-1zM516 351h1v4h-1zM516 398h1v2h-1zM517 201h1v2h-1zM517 248h1v3h-1zM517 347h1v4h-1zM517 395h1v3h-1zM518 203h1v1h-1zM518 251h1v4h-1zM518 344h1v3h-1zM518 393h1v2h-1zM519 205h1v2h-1zM519 255h1v4h-1zM519 339h1v5h-1zM519 391h1v2h-1zM520 207h1v2h-1zM520 259h1v6h-1zM520 334h1v5h-1zM520 389h1v2h-1zM521 122h1v1h-1zM521 209h1v3h-1zM521 265h1v7h-1zM521 326h1v8h-1zM521 388h1v1h-1zM522 212h1v2h-1zM522 272h1v16h-1zM522 310h1v16h-1zM522 384h1v4h-1zM523 214h1v3h-1zM523 288h1v11h-1zM523 300h1v10h-1zM523 382h1v2h-1zM524 217h1v3h-1zM524 379h1v3h-1zM524 472h1v2h-1zM525 126h1v2h-1zM525 220h1v5h-1zM525 375h1v4h-1zM526 225h1v2h-1zM526 372h1v3h-1zM527 227h1v2h-1zM527 369h1v3h-1zM527 468h1v2h-1zM528 130h1v2h-1zM528 229h1v3h-1zM528 367h1v2h-1zM529 232h1v4h-1zM529 363h1v4h-1zM530 133h1v2h-1zM530 236h1v4h-1zM530 359h1v4h-1zM530 464h1v2h-1zM531 240h1v5h-1zM531 354h1v5h-1zM531 462h1v2h-1zM532 136h1v2h-1zM532 245h1v3h-1zM532 350h1v4h-1zM533 138h1v2h-1zM533 248h1v6h-1zM533 344h1v6h-1zM533 459h1v2h-1zM534 254h1v6h-1zM534 338h1v6h-1zM535 141h1v2h-1zM535 260h1v4h-1zM535 334h1v4h-1zM535 456h1v2h-1zM536 265h1v5h-1zM536 328h1v6h-1zM537 144h1v2h-1zM537 270h1v17h-1zM537 311h1v17h-1zM537 453h1v2h-1zM538 287h1v24h-1zM539 147h1v2h-1zM539 450h1v2h-1zM541 150h1v2h-1zM541 447h1v2h-1zM542 445h1v2h-1zM543 153h1v2h-1zM544 155h1v2h-1zM544 442h1v2h-1zM546 158h1v2h-1zM546 439h1v2h-1zM547 160h1v2h-1zM547 437h1v2h-1zM548 162h1v2h-1zM548 435h1v2h-1zM549 164h1v2h-1zM549 433h1v2h-1zM550 166h1v2h-1zM550 431h1v2h-1zM551 168h1v2h-1zM551 429h1v2h-1zM552 170h1v2h-1zM552 427h1v2h-1zM553 172h1v2h-1zM553 425h1v2h-1zM554 174h1v3h-1zM554 422h1v3h-1zM555 177h1v2h-1zM555 420h1v2h-1zM556 179h1v2h-1zM556 418h1v2h-1zM557 181h1v2h-1zM557 416h1v2h-1zM558 183h1v3h-1zM558 413h1v3h-1zM559 186h1v2h-1zM559 411h1v2h-1zM560 188h1v2h-1zM560 409h1v2h-1zM561 190h1v2h-1zM561 407h1v2h-1zM562 192h1v3h-1zM562 403h1v4h-1zM563 195h1v2h-1zM563 402h1v1h-1zM564 197h1v2h-1zM564 400h1v2h-1zM565 199h1v2h-1zM565 398h1v2h-1zM566 201h1v3h-1zM566 395h1v3h-1zM567 204h1v3h-1zM567 391h1v4h-1zM568 207h1v4h-1zM568 388h1v3h-1zM569 211h1v3h-1zM569 385h1v3h-1zM570 214h1v3h-1zM570 382h1v3h-1zM571 217h1v3h-1zM571 379h1v3h-1zM572 220h1v3h-1zM572 376h1v3h-1zM573 223h1v3h-1zM573 372h1v4h-1zM574 226h1v4h-1zM574 369h1v3h-1zM575 230h1v4h-1zM575 365h1v4h-1zM576 234h1v4h-1zM576 361h1v4h-1zM577 238h1v5h-1zM577 356h1v5h-1zM578 243h1v5h-1zM578 351h1v5h-1zM579 248h1v7h-1zM579 343h1v8h-1zM580 255h1v10h-1zM580 333h1v10h-1zM581 265h1v10h-1zM581 323h1v10h-1zM582 275h1v10h-1zM582 313h1v10h-1zM583 285h1v28h-1z"/><path fill="#FF0000" d="M189 50h3v1h-3zM199 50h3v1h-3zM188 51h1v1h-1zM192 51h1v1h-1zM198 51h1v1h-1zM202 51h1v1h-1zM188 55h1v1h-1zM202 55h1v1h-1zM189 56h1v1h-1zM201 56h1v1h-1zM745 106h1v1h-1zM752 106h1v1h-1zM746 107h1v1h-1zM748 107h2v1h-2zM751 107h1v1h-1zM746 113h1v1h-1zM748 113h2v1h-2zM751 113h1v1h-1zM745 114h1v1h-1zM752 114h1v1h-1zM747 148h3v1h-3zM744 151h4v1h-4zM749 151h4v1h-4zM744 153h9v1h-9zM332 159h1v1h-1zM333 161h1v1h-1zM334 163h2v1h-2zM335 165h2v1h-2zM337 167h1v1h-1zM338 169h2v1h-2zM339 171h2v1h-2zM340 173h2v1h-2zM341 175h1v1h-1zM343 175h1v1h-1zM342 177h1v1h-1zM344 177h1v1h-1zM343 179h1v1h-1zM345 179h1v1h-1zM345 181h1v1h-1zM347 181h1v1h-1zM346 183h1v1h-1zM348 183h1v1h-1zM347 185h1v1h-1zM349 185h1v1h-1zM752 186h1v1h-1zM348 187h1v1h-1zM351 187h1v1h-1zM745 187h2v1h-2zM748 187h2v1h-2zM747 188h2v1h-2zM750 188h2v1h-2zM349 189h1v1h-1zM352 189h1v1h-1zM744 189h1v1h-1zM350 191h1v1h-1zM353 191h1v1h-1zM752 191h1v1h-1zM745 192h2v1h-2zM748 192h2v1h-2zM351 193h1v1h-1zM355 193h1v1h-1zM747 193h2v1h-2zM750 193h2v1h-2zM744 194h1v1h-1zM353 195h1v1h-1zM356 195h1v1h-1zM354 197h1v1h-1zM357 197h1v1h-1zM355 199h1v1h-1zM359 199h1v1h-1zM356 201h1v1h-1zM360 201h1v1h-1zM357 203h1v1h-1zM361 203h1v1h-1zM358 205h1v1h-1zM363 205h1v1h-1zM359 207h1v1h-1zM364 207h1v1h-1zM361 209h1v1h-1zM365 209h1v1h-1zM411 210h1v1h-1zM362 211h1v1h-1zM367 211h1v1h-1zM411 212h1v1h-1zM363 213h1v1h-1zM368 213h1v1h-1zM410 214h1v1h-1zM364 215h1v1h-1zM369 215h1v1h-1zM410 216h1v1h-1zM365 217h1v1h-1zM371 217h1v1h-1zM410 218h1v1h-1zM366 219h1v1h-1zM372 219h1v1h-1zM410 220h1v1h-1zM367 221h1v1h-1zM373 221h1v1h-1zM409 222h1v1h-1zM369 223h1v1h-1zM375 223h1v1h-1zM409 224h1v1h-1zM370 225h1v1h-1zM376 225h1v1h-1zM409 226h1v1h-1zM371 227h1v1h-1zM377 227h1v1h-1zM409 228h1v1h-1zM372 229h1v1h-1zM379 229h1v1h-1zM408 230h1v1h-1zM373 231h1v1h-1zM380 231h1v1h-1zM408 232h1v1h-1zM374 233h1v1h-1zM381 233h1v1h-1zM408 234h1v1h-1zM375 235h1v1h-1zM383 235h1v1h-1zM408 236h1v1h-1zM747 236h3v1h-3zM377 237h1v1h-1zM384 237h1v1h-1zM745 237h2v1h-2zM750 237h2v1h-2zM407 238h1v1h-1zM378 239h1v1h-1zM385 239h1v1h-1zM407 240h1v1h-1zM748 240h1v1h-1zM379 241h1v1h-1zM387 241h1v1h-1zM407 242h1v1h-1zM380 243h1v1h-1zM388 243h1v1h-1zM478 243h1v1h-1zM745 243h2v1h-2zM750 243h2v1h-2zM407 244h1v1h-1zM477 244h1v1h-1zM747 244h3v1h-3zM381 245h1v1h-1zM389 245h1v1h-1zM467 245h2v1h-2zM406 246h1v1h-1zM469 246h1v1h-1zM382 247h1v1h-1zM390 247h1v1h-1zM406 248h1v1h-1zM383 249h1v1h-1zM392 249h1v1h-1zM406 250h1v1h-1zM385 251h1v1h-1zM393 251h1v1h-1zM405 252h1v1h-1zM386 253h1v1h-1zM394 253h1v1h-1zM419 253h1v1h-1zM405 254h1v1h-1zM387 255h1v1h-1zM396 255h1v1h-1zM405 256h1v1h-1zM388 257h1v1h-1zM397 257h1v1h-1zM466 257h15v1h-15zM405 258h1v1h-1zM389 259h1v1h-1zM398 259h1v1h-1zM443 259h1v1h-1zM404 260h1v1h-1zM390 261h1v1h-1zM400 261h1v1h-1zM437 261h1v1h-1zM404 262h1v1h-1zM391 263h1v1h-1zM401 263h1v1h-1zM436 263h1v1h-1zM404 264h1v1h-1zM393 265h1v1h-1zM402 265h1v1h-1zM435 265h1v1h-1zM394 267h1v1h-1zM433 267h1v1h-1zM403 268h1v1h-1zM395 269h1v1h-1zM405 269h1v1h-1zM432 269h1v1h-1zM403 270h1v1h-1zM396 271h1v1h-1zM406 271h1v1h-1zM431 271h1v1h-1zM403 272h1v1h-1zM397 273h1v1h-1zM408 273h1v1h-1zM430 273h1v1h-1zM403 274h1v1h-1zM398 275h1v1h-1zM409 275h1v1h-1zM429 275h1v1h-1zM402 276h1v1h-1zM750 276h3v1h-3zM399 277h1v1h-1zM410 277h1v1h-1zM427 277h1v1h-1zM751 277h1v1h-1zM402 278h1v1h-1zM750 278h1v1h-1zM401 279h1v1h-1zM412 279h1v1h-1zM426 279h1v1h-1zM746 279h2v1h-2zM749 279h1v1h-1zM745 280h1v1h-1zM748 280h1v1h-1zM413 281h1v1h-1zM425 281h1v1h-1zM403 283h1v1h-1zM414 283h1v1h-1zM424 283h1v1h-1zM745 283h1v1h-1zM748 283h1v1h-1zM401 284h1v1h-1zM746 284h2v1h-2zM404 285h1v1h-1zM416 285h1v1h-1zM422 285h1v1h-1zM401 286h1v1h-1zM751 286h1v1h-1zM405 287h1v1h-1zM417 287h1v1h-1zM421 287h1v1h-1zM745 287h2v1h-2zM401 288h1v1h-1zM406 289h1v1h-1zM418 289h1v1h-1zM420 289h1v1h-1zM400 290h1v1h-1zM419 291h2v1h-2zM400 292h1v1h-1zM409 293h1v1h-1zM418 293h1v1h-1zM421 293h1v1h-1zM745 293h8v1h-8zM400 294h1v1h-1zM410 295h1v1h-1zM416 295h1v1h-1zM422 295h1v1h-1zM400 296h1v1h-1zM411 297h1v1h-1zM415 297h1v1h-1zM424 297h1v1h-1zM399 298h1v1h-1zM149 299h1v1h-1zM412 299h1v1h-1zM414 299h1v1h-1zM425 299h1v1h-1zM399 300h1v1h-1zM413 301h1v1h-1zM426 301h1v1h-1zM399 302h1v1h-1zM412 303h1v1h-1zM414 303h1v1h-1zM428 303h1v1h-1zM399 304h1v1h-1zM410 305h1v1h-1zM415 305h1v1h-1zM429 305h1v1h-1zM398 306h1v1h-1zM409 307h1v1h-1zM417 307h1v1h-1zM430 307h1v1h-1zM398 308h1v1h-1zM408 309h1v1h-1zM418 309h1v1h-1zM432 309h1v1h-1zM398 310h1v1h-1zM407 311h1v1h-1zM419 311h1v1h-1zM433 311h1v1h-1zM398 312h1v1h-1zM405 313h1v1h-1zM420 313h1v1h-1zM434 313h1v1h-1zM397 314h1v1h-1zM404 315h1v1h-1zM421 315h1v1h-1zM436 315h1v1h-1zM397 316h1v1h-1zM403 317h1v1h-1zM422 317h1v1h-1zM437 317h1v1h-1zM397 318h1v1h-1zM402 319h1v1h-1zM423 319h1v1h-1zM438 319h1v1h-1zM397 320h1v1h-1zM564 320h5v1h-5zM401 321h1v1h-1zM425 321h1v1h-1zM440 321h1v1h-1zM567 321h1v1h-1zM396 322h1v1h-1zM566 322h1v1h-1zM426 323h1v1h-1zM565 323h1v1h-1zM396 324h1v1h-1zM564 324h1v1h-1zM427 325h1v1h-1zM563 325h1v1h-1zM396 326h1v1h-1zM554 326h1v1h-1zM562 326h1v1h-1zM428 327h1v1h-1zM555 327h1v1h-1zM561 327h1v1h-1zM395 328h1v1h-1zM556 328h1v1h-1zM560 328h1v1h-1zM429 329h1v1h-1zM557 329h1v1h-1zM559 329h1v1h-1zM558 330h1v1h-1zM430 331h1v1h-1zM557 331h1v1h-1zM559 331h1v1h-1zM556 332h1v1h-1zM560 332h1v1h-1zM393 333h1v1h-1zM431 333h1v1h-1zM555 333h1v1h-1zM561 333h1v1h-1zM554 334h1v1h-1zM562 334h1v1h-1zM392 335h1v1h-1zM433 335h1v1h-1zM553 335h1v1h-1zM552 336h1v1h-1zM391 337h1v1h-1zM434 337h1v1h-1zM390 339h1v1h-1zM435 339h1v1h-1zM388 341h1v1h-1zM394 342h1v1h-1zM387 343h1v1h-1zM386 345h1v1h-1zM393 346h1v1h-1zM385 347h1v1h-1zM393 348h1v1h-1zM384 349h1v1h-1zM393 350h1v1h-1zM382 351h1v1h-1zM392 352h1v1h-1zM381 353h1v1h-1zM392 354h1v1h-1zM380 355h1v1h-1zM392 356h1v1h-1zM379 357h1v1h-1zM392 358h1v1h-1zM378 359h1v1h-1zM391 360h1v1h-1zM376 361h1v1h-1zM391 362h1v1h-1zM375 363h1v1h-1zM391 364h1v1h-1zM374 365h1v1h-1zM390 366h1v1h-1zM373 367h1v1h-1zM390 368h1v1h-1zM371 369h1v1h-1zM390 370h1v1h-1zM370 371h1v1h-1zM390 372h1v1h-1zM369 373h1v1h-1zM389 374h1v1h-1zM368 375h1v1h-1zM389 376h1v1h-1zM367 377h1v1h-1zM427 377h1v1h-1zM389 378h1v1h-1zM365 379h1v1h-1zM389 380h1v1h-1zM364 381h1v1h-1zM388 382h1v1h-1zM363 383h1v1h-1zM388 384h1v1h-1zM450 384h5v1h-5zM362 385h1v1h-1zM448 385h2v1h-2zM455 385h2v1h-2zM388 386h1v1h-1zM447 386h1v1h-1zM457 386h1v1h-1zM361 387h1v1h-1zM446 387h1v1h-1zM458 387h1v1h-1zM388 388h1v1h-1zM359 389h1v1h-1zM387 390h1v1h-1zM358 391h1v1h-1zM387 392h1v1h-1zM452 392h1v1h-1zM357 393h1v1h-1zM387 394h1v1h-1zM356 395h1v1h-1zM387 396h1v1h-1zM354 397h1v1h-1zM446 397h1v1h-1zM458 397h1v1h-1zM386 398h1v1h-1zM447 398h1v1h-1zM457 398h1v1h-1zM353 399h1v1h-1zM448 399h2v1h-2zM455 399h2v1h-2zM386 400h1v1h-1zM450 400h5v1h-5zM352 401h1v1h-1zM386 402h1v1h-1zM351 403h1v1h-1zM385 404h1v1h-1zM350 405h1v1h-1zM385 406h1v1h-1zM348 407h1v1h-1zM385 408h1v1h-1zM347 409h1v1h-1zM385 410h1v1h-1zM346 411h1v1h-1zM384 412h1v1h-1zM345 413h1v1h-1zM384 414h1v1h-1zM344 415h1v1h-1zM342 417h1v1h-1zM341 419h1v1h-1zM387 420h1v1h-1zM340 421h1v1h-1zM339 423h1v1h-1zM369 423h1v1h-1zM337 425h1v1h-1zM336 427h1v1h-1zM335 429h1v1h-1zM334 431h1v1h-1zM333 433h1v1h-1zM331 435h1v1h-1zM408 436h6v1h-6zM330 437h1v1h-1zM412 437h1v1h-1zM411 438h1v1h-1zM329 439h1v1h-1zM410 439h1v1h-1zM409 440h1v1h-1zM408 441h1v1h-1zM400 442h5v1h-5zM407 442h1v1h-1zM399 443h1v1h-1zM405 443h2v1h-2zM398 444h1v1h-1zM398 450h1v1h-1zM406 450h1v1h-1zM399 451h1v1h-1zM405 451h1v1h-1zM400 452h5v1h-5zM141 502h5v1h-5zM140 503h1v1h-1zM146 503h1v1h-1zM139 504h1v1h-1zM147 504h1v1h-1zM138 505h1v1h-1zM148 505h1v1h-1zM138 511h1v1h-1zM148 511h1v1h-1zM135 514h1v1h-1zM136 515h1v1h-1zM138 515h1v1h-1zM148 515h1v1h-1zM137 516h1v1h-1zM149 516h1v1h-1zM150 517h1v1h-1zM151 518h1v1h-1zM137 506h1v5h-1zM139 512h1v3h-1zM147 512h1v3h-1zM149 506h1v5h-1zM187 52h1v3h-1zM193 52h1v3h-1zM194 55h1v4h-1zM195 59h1v8h-1zM196 55h1v4h-1zM197 52h1v3h-1zM203 52h1v3h-1zM370 419h1v4h-1zM371 416h1v3h-1zM372 412h1v4h-1zM373 410h1v2h-1zM374 406h1v3h-1zM375 402h1v4h-1zM376 399h1v3h-1zM377 396h1v3h-1zM378 392h1v2h-1zM379 388h1v4h-1zM380 385h1v3h-1zM381 381h1v4h-1zM382 378h1v3h-1zM383 375h1v3h-1zM384 371h1v4h-1zM385 368h1v3h-1zM386 364h1v4h-1zM387 361h1v3h-1zM388 357h1v4h-1zM389 354h1v3h-1zM390 350h1v4h-1zM391 347h1v3h-1zM392 344h1v3h-1zM393 340h1v5h-1zM394 336h1v5h-1zM395 330h1v7h-1zM396 329h1v4h-1zM397 326h1v4h-1zM397 445h1v5h-1zM398 323h1v3h-1zM399 319h1v5h-1zM400 316h1v3h-1zM401 312h1v4h-1zM402 280h1v3h-1zM402 309h1v3h-1zM403 306h1v3h-1zM404 266h1v2h-1zM404 302h1v4h-1zM405 299h1v3h-1zM406 295h1v4h-1zM406 444h1v1h-1zM407 291h1v4h-1zM407 445h1v5h-1zM408 288h1v4h-1zM409 285h1v3h-1zM410 281h1v4h-1zM411 278h1v3h-1zM412 275h1v3h-1zM413 271h1v4h-1zM413 437h1v5h-1zM414 268h1v3h-1zM415 264h1v4h-1zM416 261h1v3h-1zM417 257h1v4h-1zM418 254h1v3h-1zM419 250h1v2h-1zM420 247h1v3h-1zM421 244h1v3h-1zM422 240h1v4h-1zM423 237h1v3h-1zM424 233h1v4h-1zM425 231h1v2h-1zM444 390h1v5h-1zM445 388h1v2h-1zM445 395h1v2h-1zM459 388h1v2h-1zM459 395h1v2h-1zM460 390h1v5h-1zM466 256h1v1h-1zM467 254h1v2h-1zM468 252h1v2h-1zM469 250h1v2h-1zM470 247h1v3h-1zM476 245h1v12h-1zM476 258h1v2h-1zM568 321h1v4h-1zM744 239h1v3h-1zM744 281h1v2h-1zM745 188h1v1h-1zM745 193h1v1h-1zM745 238h1v1h-1zM745 242h1v1h-1zM745 292h1v1h-1zM746 149h1v2h-1zM746 186h1v1h-1zM746 191h1v1h-1zM746 290h1v2h-1zM747 107h1v7h-1zM747 189h1v1h-1zM747 194h1v1h-1zM747 288h1v2h-1zM749 186h1v1h-1zM749 191h1v1h-1zM749 281h1v2h-1zM750 107h1v7h-1zM750 149h1v2h-1zM750 189h1v1h-1zM750 194h1v1h-1zM750 287h1v6h-1zM750 294h1v1h-1zM751 187h1v1h-1zM751 192h1v1h-1zM751 238h1v1h-1zM751 242h1v1h-1zM752 239h1v3h-1zM752 277h1v2h-1z"/><path fill="#00FF00" d="M463 80h1v1h-1zM450 81h2v1h-2zM456 81h2v1h-2zM449 83h1v1h-1zM455 83h1v1h-1zM461 83h1v1h-1zM453 85h2v1h-2zM459 85h2v1h-2zM447 86h1v1h-1zM463 90h1v1h-1zM450 91h2v1h-2zM456 91h2v1h-2zM449 93h1v1h-1zM455 93h1v1h-1zM461 93h1v1h-1zM453 95h2v1h-2zM459 95h2v1h-2zM447 96h1v1h-1zM747 126h3v1h-3zM746 127h1v1h-1zM750 127h1v1h-1zM744 132h1v1h-1zM745 133h1v1h-1zM751 133h1v1h-1zM752 134h1v1h-1zM750 166h3v1h-3zM751 167h1v1h-1zM750 168h1v1h-1zM745 169h1v1h-1zM749 169h1v1h-1zM746 170h1v1h-1zM748 170h1v1h-1zM747 171h1v1h-1zM746 172h1v1h-1zM748 172h1v1h-1zM745 173h1v1h-1zM749 173h1v1h-1zM744 174h1v1h-1zM745 206h2v1h-2zM750 206h2v1h-2zM745 209h1v1h-1zM751 209h1v1h-1zM410 212h1v1h-1zM409 216h1v1h-1zM408 218h1v1h-1zM407 220h1v1h-1zM407 222h1v1h-1zM406 224h1v1h-1zM405 226h1v1h-1zM405 228h1v1h-1zM404 230h1v1h-1zM403 232h1v1h-1zM402 234h1v1h-1zM402 236h1v1h-1zM401 238h1v1h-1zM400 240h1v1h-1zM400 242h1v1h-1zM399 244h1v1h-1zM398 246h1v1h-1zM397 248h1v1h-1zM397 250h1v1h-1zM396 252h1v1h-1zM395 254h1v1h-1zM395 256h1v1h-1zM746 256h1v1h-1zM750 256h1v1h-1zM747 257h3v1h-3zM394 258h1v1h-1zM393 260h1v1h-1zM747 261h1v1h-1zM749 261h1v1h-1zM32 262h1v1h-1zM46 262h1v1h-1zM392 262h1v1h-1zM33 263h1v1h-1zM45 263h1v1h-1zM746 263h5v1h-5zM34 264h2v1h-2zM37 264h5v1h-5zM43 264h2v1h-2zM392 264h1v1h-1zM391 266h1v1h-1zM747 266h3v1h-3zM390 268h1v1h-1zM390 270h1v1h-1zM747 270h1v1h-1zM749 270h1v1h-1zM389 272h1v1h-1zM746 272h5v1h-5zM388 274h1v1h-1zM34 276h2v1h-2zM37 276h5v1h-5zM43 276h2v1h-2zM387 276h1v1h-1zM33 277h1v1h-1zM45 277h1v1h-1zM32 278h1v1h-1zM46 278h1v1h-1zM387 278h1v1h-1zM386 280h1v1h-1zM385 282h1v1h-1zM385 284h1v1h-1zM384 286h1v1h-1zM383 288h1v1h-1zM382 290h1v1h-1zM382 292h1v1h-1zM155 294h1v1h-1zM381 294h1v1h-1zM156 295h2v1h-2zM158 296h2v1h-2zM380 296h1v1h-1zM160 297h1v1h-1zM161 298h2v1h-2zM379 298h1v1h-1zM155 299h1v1h-1zM162 299h3v1h-3zM156 300h2v1h-2zM164 300h2v1h-2zM379 300h1v1h-1zM158 301h2v1h-2zM166 301h2v1h-2zM160 302h1v1h-1zM378 302h1v1h-1zM161 303h2v1h-2zM168 303h3v1h-3zM163 304h2v1h-2zM170 304h3v1h-3zM377 304h1v1h-1zM164 305h3v1h-3zM173 305h1v1h-1zM167 306h1v1h-1zM172 306h1v1h-1zM174 306h2v1h-2zM377 306h1v1h-1zM745 306h1v1h-1zM751 306h1v1h-1zM169 307h1v1h-1zM176 307h2v1h-2zM170 308h3v1h-3zM178 308h1v1h-1zM376 308h1v1h-1zM179 309h2v1h-2zM746 309h5v1h-5zM172 310h3v1h-3zM178 310h1v1h-1zM181 310h2v1h-2zM375 310h1v1h-1zM175 311h2v1h-2zM183 311h1v1h-1zM745 311h1v1h-1zM751 311h1v1h-1zM177 312h2v1h-2zM182 312h1v1h-1zM184 312h2v1h-2zM374 312h1v1h-1zM747 312h1v1h-1zM749 312h1v1h-1zM176 313h1v1h-1zM179 313h1v1h-1zM186 313h2v1h-2zM180 314h2v1h-2zM184 314h1v1h-1zM188 314h1v1h-1zM374 314h1v1h-1zM748 314h1v1h-1zM182 315h2v1h-2zM186 315h1v1h-1zM189 315h2v1h-2zM184 316h1v1h-1zM188 316h1v1h-1zM191 316h2v1h-2zM373 316h1v1h-1zM185 317h2v1h-2zM193 317h1v1h-1zM184 318h1v1h-1zM187 318h2v1h-2zM194 318h2v1h-2zM372 318h1v1h-1zM189 319h2v1h-2zM191 320h1v1h-1zM196 320h3v1h-3zM372 320h1v1h-1zM188 321h1v1h-1zM192 321h3v1h-3zM199 321h2v1h-2zM472 321h1v1h-1zM480 321h1v1h-1zM194 322h3v1h-3zM200 322h2v1h-2zM371 322h1v1h-1zM473 322h1v1h-1zM479 322h1v1h-1zM192 323h1v1h-1zM202 323h2v1h-2zM474 323h5v1h-5zM197 324h2v1h-2zM204 324h2v1h-2zM370 324h1v1h-1zM446 324h1v1h-1zM473 324h1v1h-1zM479 324h1v1h-1zM199 325h2v1h-2zM206 325h1v1h-1zM196 326h1v1h-1zM201 326h2v1h-2zM207 326h2v1h-2zM369 326h1v1h-1zM203 327h2v1h-2zM209 327h2v1h-2zM204 328h2v1h-2zM211 328h2v1h-2zM369 328h1v1h-1zM200 329h1v1h-1zM206 329h2v1h-2zM212 329h2v1h-2zM208 330h1v1h-1zM214 330h3v1h-3zM368 330h1v1h-1zM473 330h1v1h-1zM479 330h1v1h-1zM204 331h1v1h-1zM209 331h2v1h-2zM474 331h2v1h-2zM477 331h2v1h-2zM211 332h2v1h-2zM217 332h2v1h-2zM367 332h1v1h-1zM212 333h3v1h-3zM219 333h2v1h-2zM208 334h1v1h-1zM214 334h2v1h-2zM221 334h1v1h-1zM224 334h1v1h-1zM367 334h1v1h-1zM216 335h2v1h-2zM222 335h2v1h-2zM472 335h9v1h-9zM212 336h1v1h-1zM218 336h2v1h-2zM224 336h1v1h-1zM228 336h1v1h-1zM366 336h1v1h-1zM225 337h2v1h-2zM220 338h3v1h-3zM227 338h2v1h-2zM232 338h1v1h-1zM365 338h1v1h-1zM216 339h1v1h-1zM223 339h2v1h-2zM229 339h1v1h-1zM222 340h1v1h-1zM225 340h2v1h-2zM230 340h2v1h-2zM236 340h1v1h-1zM364 340h1v1h-1zM224 341h1v1h-1zM227 341h1v1h-1zM232 341h2v1h-2zM220 342h1v1h-1zM226 342h1v1h-1zM228 342h2v1h-2zM234 342h1v1h-1zM240 342h1v1h-1zM364 342h1v1h-1zM230 343h2v1h-2zM235 343h2v1h-2zM224 344h1v1h-1zM228 344h1v1h-1zM232 344h1v1h-1zM237 344h2v1h-2zM244 344h1v1h-1zM363 344h1v1h-1zM230 345h1v1h-1zM233 345h2v1h-2zM239 345h1v1h-1zM232 346h1v1h-1zM235 346h2v1h-2zM240 346h2v1h-2zM248 346h1v1h-1zM362 346h1v1h-1zM228 347h1v1h-1zM237 347h2v1h-2zM242 347h2v1h-2zM234 348h1v1h-1zM239 348h1v1h-1zM244 348h1v1h-1zM252 348h1v1h-1zM362 348h1v1h-1zM236 349h1v1h-1zM240 349h2v1h-2zM245 349h2v1h-2zM232 350h1v1h-1zM242 350h2v1h-2zM247 350h2v1h-2zM256 350h1v1h-1zM361 350h1v1h-1zM238 351h1v1h-1zM244 351h1v1h-1zM249 351h1v1h-1zM236 352h1v1h-1zM240 352h1v1h-1zM245 352h2v1h-2zM250 352h2v1h-2zM260 352h1v1h-1zM360 352h1v1h-1zM242 353h1v1h-1zM247 353h2v1h-2zM252 353h1v1h-1zM249 354h2v1h-2zM253 354h2v1h-2zM264 354h1v1h-1zM359 354h1v1h-1zM240 355h1v1h-1zM244 355h1v1h-1zM251 355h1v1h-1zM255 355h2v1h-2zM246 356h1v1h-1zM252 356h2v1h-2zM257 356h1v1h-1zM268 356h1v1h-1zM359 356h1v1h-1zM244 357h1v1h-1zM248 357h1v1h-1zM254 357h2v1h-2zM258 357h2v1h-2zM256 358h1v1h-1zM260 358h2v1h-2zM272 358h1v1h-1zM358 358h1v1h-1zM250 359h1v1h-1zM257 359h2v1h-2zM262 359h1v1h-1zM248 360h1v1h-1zM252 360h1v1h-1zM259 360h2v1h-2zM263 360h2v1h-2zM276 360h1v1h-1zM357 360h1v1h-1zM254 361h1v1h-1zM261 361h1v1h-1zM265 361h2v1h-2zM262 362h2v1h-2zM267 362h1v1h-1zM280 362h1v1h-1zM357 362h1v1h-1zM252 363h1v1h-1zM256 363h1v1h-1zM264 363h2v1h-2zM268 363h2v1h-2zM258 364h1v1h-1zM266 364h2v1h-2zM270 364h2v1h-2zM284 364h1v1h-1zM356 364h1v1h-1zM256 365h1v1h-1zM268 365h1v1h-1zM272 365h1v1h-1zM260 366h1v1h-1zM269 366h2v1h-2zM273 366h2v1h-2zM288 366h1v1h-1zM355 366h1v1h-1zM262 367h1v1h-1zM271 367h2v1h-2zM275 367h1v1h-1zM260 368h1v1h-1zM264 368h1v1h-1zM273 368h1v1h-1zM276 368h2v1h-2zM292 368h1v1h-1zM354 368h1v1h-1zM274 369h2v1h-2zM278 369h2v1h-2zM266 370h1v1h-1zM276 370h2v1h-2zM280 370h1v1h-1zM296 370h1v1h-1zM354 370h1v1h-1zM264 371h1v1h-1zM268 371h1v1h-1zM278 371h2v1h-2zM281 371h2v1h-2zM270 372h1v1h-1zM280 372h1v1h-1zM283 372h2v1h-2zM300 372h1v1h-1zM353 372h1v1h-1zM268 373h1v1h-1zM281 373h2v1h-2zM285 373h1v1h-1zM272 374h1v1h-1zM283 374h2v1h-2zM286 374h2v1h-2zM304 374h1v1h-1zM352 374h1v1h-1zM274 375h1v1h-1zM285 375h1v1h-1zM288 375h2v1h-2zM272 376h1v1h-1zM276 376h1v1h-1zM286 376h2v1h-2zM290 376h1v1h-1zM352 376h1v1h-1zM288 377h2v1h-2zM291 377h2v1h-2zM308 377h1v1h-1zM276 378h1v1h-1zM278 378h1v1h-1zM290 378h2v1h-2zM293 378h2v1h-2zM351 378h1v1h-1zM280 379h1v1h-1zM292 379h1v1h-1zM295 379h1v1h-1zM312 379h1v1h-1zM293 380h2v1h-2zM296 380h2v1h-2zM350 380h1v1h-1zM280 381h1v1h-1zM282 381h1v1h-1zM295 381h2v1h-2zM298 381h2v1h-2zM316 381h1v1h-1zM284 382h1v1h-1zM297 382h1v1h-1zM300 382h1v1h-1zM349 382h1v1h-1zM286 383h1v1h-1zM298 383h2v1h-2zM301 383h2v1h-2zM320 383h1v1h-1zM284 384h1v1h-1zM300 384h2v1h-2zM349 384h1v1h-1zM302 385h4v1h-4zM324 385h1v1h-1zM290 386h1v1h-1zM306 386h2v1h-2zM348 386h1v1h-1zM292 387h1v1h-1zM305 387h2v1h-2zM328 387h1v1h-1zM307 388h4v1h-4zM347 388h1v1h-1zM292 389h1v1h-1zM294 389h1v1h-1zM311 389h2v1h-2zM332 389h1v1h-1zM296 390h1v1h-1zM310 390h2v1h-2zM347 390h1v1h-1zM298 391h1v1h-1zM312 391h4v1h-4zM336 391h1v1h-1zM296 392h1v1h-1zM314 392h4v1h-4zM346 392h1v1h-1zM340 393h1v1h-1zM302 394h1v1h-1zM317 394h4v1h-4zM345 394h1v1h-1zM319 395h4v1h-4zM306 397h1v1h-1zM322 397h4v1h-4zM348 397h1v1h-1zM324 398h4v1h-4zM344 398h1v1h-1zM326 399h3v1h-3zM352 399h1v1h-1zM310 400h1v1h-1zM328 400h3v1h-3zM343 400h1v1h-1zM329 401h3v1h-3zM356 401h1v1h-1zM314 402h1v1h-1zM331 402h3v1h-3zM342 402h1v1h-1zM333 403h3v1h-3zM360 403h1v1h-1zM334 404h3v1h-3zM342 404h1v1h-1zM318 405h1v1h-1zM336 405h3v1h-3zM364 405h1v1h-1zM338 406h4v1h-4zM368 407h1v1h-1zM322 408h1v1h-1zM340 408h4v1h-4zM343 409h3v1h-3zM372 409h1v1h-1zM339 410h1v1h-1zM345 410h2v1h-2zM326 411h1v1h-1zM347 411h2v1h-2zM376 411h1v1h-1zM339 412h1v1h-1zM348 412h3v1h-3zM330 413h1v1h-1zM350 413h2v1h-2zM380 413h1v1h-1zM338 414h1v1h-1zM352 414h2v1h-2zM332 415h1v1h-1zM353 415h3v1h-3zM384 415h1v1h-1zM334 416h1v1h-1zM337 416h1v1h-1zM355 416h2v1h-2zM357 417h2v1h-2zM336 418h2v1h-2zM358 418h2v1h-2zM338 419h1v1h-1zM360 419h2v1h-2zM336 420h1v1h-1zM340 420h1v1h-1zM362 420h2v1h-2zM342 421h1v1h-1zM335 422h1v1h-1zM365 422h2v1h-2zM344 423h1v1h-1zM367 423h2v1h-2zM334 424h1v1h-1zM346 424h1v1h-1zM369 424h1v1h-1zM334 426h1v1h-1zM348 426h1v1h-1zM350 427h1v1h-1zM333 428h1v1h-1zM352 428h1v1h-1zM332 430h1v1h-1zM354 430h1v1h-1zM372 430h1v1h-1zM332 432h1v1h-1zM331 434h1v1h-1zM330 436h1v1h-1zM359 436h1v1h-1zM329 438h1v1h-1zM381 448h1v1h-1zM393 448h1v1h-1zM382 449h1v1h-1zM392 449h1v1h-1zM383 454h9v1h-9zM368 456h5v1h-5zM367 457h1v1h-1zM373 457h1v1h-1zM382 457h1v1h-1zM392 457h1v1h-1zM381 458h1v1h-1zM393 458h1v1h-1zM386 460h1v1h-1zM388 460h1v1h-1zM367 463h1v1h-1zM373 463h1v1h-1zM368 464h2v1h-2zM371 464h2v1h-2zM386 464h3v1h-3zM366 468h9v1h-9zM401 536h5v1h-5zM400 537h1v1h-1zM406 537h1v1h-1zM395 542h7v1h-7zM405 542h7v1h-7zM395 546h17v1h-17zM36 264h1v13h-1zM42 264h1v13h-1zM168 302h1v1h-1zM168 306h1v3h-1zM172 309h1v1h-1zM174 307h1v1h-1zM176 308h1v1h-1zM176 310h1v1h-1zM180 311h1v2h-1zM180 315h1v1h-1zM190 318h1v1h-1zM192 318h1v2h-1zM196 319h1v1h-1zM196 323h1v1h-1zM198 323h1v1h-1zM216 331h1v1h-1zM216 336h1v1h-1zM218 337h1v1h-1zM220 332h1v1h-1zM220 337h1v1h-1zM288 385h1v2h-1zM300 393h1v2h-1zM303 384h1v1h-1zM304 386h1v1h-1zM304 396h1v2h-1zM308 387h1v1h-1zM308 398h1v2h-1zM309 389h1v1h-1zM312 401h1v2h-1zM313 390h1v1h-1zM316 393h1v1h-1zM316 404h1v2h-1zM318 393h1v1h-1zM320 406h1v2h-1zM321 396h1v1h-1zM323 396h1v1h-1zM324 409h1v2h-1zM328 412h1v2h-1zM336 417h1v1h-1zM340 407h1v1h-1zM341 407h1v1h-1zM344 395h1v2h-1zM366 458h1v5h-1zM370 464h1v4h-1zM370 469h1v4h-1zM374 458h1v5h-1zM383 450h1v4h-1zM383 455h1v2h-1zM385 461h1v3h-1zM387 452h1v2h-1zM387 455h1v6h-1zM389 461h1v3h-1zM391 450h1v4h-1zM391 455h1v2h-1zM399 538h1v3h-1zM400 541h1v1h-1zM406 541h1v1h-1zM407 538h1v3h-1zM448 84h1v2h-1zM448 94h1v2h-1zM450 82h1v1h-1zM450 92h1v1h-1zM451 80h1v1h-1zM451 90h1v1h-1zM452 82h1v3h-1zM452 92h1v3h-1zM453 86h1v1h-1zM453 96h1v1h-1zM454 84h1v1h-1zM454 94h1v1h-1zM456 82h1v1h-1zM456 92h1v1h-1zM457 80h1v1h-1zM457 90h1v1h-1zM458 82h1v3h-1zM458 92h1v3h-1zM459 86h1v1h-1zM459 96h1v1h-1zM460 84h1v1h-1zM460 94h1v1h-1zM462 81h1v2h-1zM462 91h1v2h-1zM472 325h1v5h-1zM476 331h1v4h-1zM476 336h1v2h-1zM480 325h1v5h-1zM744 207h1v2h-1zM745 128h1v3h-1zM746 131h1v2h-1zM746 258h1v3h-1zM746 267h1v3h-1zM746 307h1v2h-1zM746 310h1v1h-1zM747 207h1v3h-1zM747 313h1v1h-1zM748 210h1v5h-1zM748 261h1v2h-1zM748 264h1v1h-1zM748 270h1v2h-1zM748 273h1v2h-1zM748 308h1v1h-1zM748 310h1v3h-1zM749 207h1v3h-1zM749 313h1v1h-1zM750 131h1v2h-1zM750 258h1v3h-1zM750 267h1v3h-1zM750 307h1v2h-1zM750 310h1v1h-1zM751 128h1v3h-1zM752 167h1v2h-1zM752 207h1v2h-1z"/><path fill="#FFFF00" d="M747 117h3v1h-3zM745 118h2v1h-2zM750 118h2v1h-2zM744 119h1v1h-1zM745 120h2v1h-2zM750 121h2v1h-2zM752 122h1v1h-1zM745 123h2v1h-2zM750 123h2v1h-2zM747 124h3v1h-3zM82 135h1v1h-1zM94 135h1v1h-1zM84 138h2v1h-2zM91 138h2v1h-2zM86 139h5v1h-5zM84 140h2v1h-2zM91 140h2v1h-2zM84 150h2v1h-2zM91 150h2v1h-2zM86 151h5v1h-5zM333 153h1v1h-1zM744 156h1v1h-1zM746 156h1v1h-1zM748 156h1v1h-1zM750 164h2v1h-2zM544 187h3v1h-3zM533 188h1v1h-1zM541 188h1v1h-1zM543 188h1v1h-1zM547 188h1v1h-1zM532 189h1v1h-1zM542 189h1v1h-1zM539 190h1v1h-1zM541 190h1v1h-1zM542 191h1v1h-1zM543 192h1v1h-1zM547 192h1v1h-1zM544 193h3v1h-3zM546 195h1v1h-1zM535 196h1v1h-1zM537 196h1v1h-1zM547 196h1v1h-1zM744 196h1v1h-1zM752 196h1v1h-1zM745 197h1v1h-1zM751 197h1v1h-1zM744 200h9v1h-9zM547 202h1v1h-1zM546 203h1v1h-1zM745 203h1v1h-1zM751 203h1v1h-1zM744 204h1v1h-1zM752 204h1v1h-1zM114 278h4v1h-4zM119 278h4v1h-4zM122 282h3v1h-3zM121 283h1v1h-1zM125 283h1v1h-1zM119 284h2v1h-2zM125 287h1v1h-1zM125 291h1v1h-1zM126 292h1v1h-1zM149 293h1v1h-1zM155 296h1v1h-1zM745 297h2v1h-2zM748 297h2v1h-2zM155 298h1v1h-1zM749 299h2v1h-2zM748 300h1v1h-1zM751 304h1v1h-1zM368 425h1v1h-1zM365 426h1v1h-1zM362 428h1v1h-1zM359 429h1v1h-1zM262 552h1v1h-1zM266 552h1v1h-1zM270 552h1v1h-1zM263 553h1v1h-1zM265 553h1v1h-1zM267 553h1v1h-1zM269 553h1v1h-1zM271 553h1v1h-1zM275 555h1v1h-1zM274 556h1v1h-1zM273 557h1v1h-1zM273 565h1v1h-1zM275 565h1v1h-1zM274 566h1v1h-1zM273 567h1v1h-1zM275 567h1v1h-1zM272 568h1v1h-1zM276 568h1v1h-1zM82 143h1v5h-1zM83 136h1v2h-1zM83 141h1v2h-1zM83 148h1v2h-1zM93 136h1v2h-1zM93 141h1v2h-1zM93 148h1v2h-1zM94 143h1v5h-1zM118 276h1v15h-1zM124 288h1v3h-1zM126 284h1v3h-1zM264 554h1v13h-1zM268 554h1v13h-1zM272 554h1v11h-1zM276 554h1v11h-1zM534 187h1v9h-1zM536 197h1v5h-1zM538 191h1v5h-1zM540 187h1v3h-1zM545 194h1v1h-1zM548 189h1v3h-1zM548 197h1v5h-1zM744 121h1v2h-1zM745 157h1v7h-1zM746 198h1v2h-1zM746 201h1v2h-1zM747 121h1v2h-1zM747 157h1v7h-1zM747 296h1v8h-1zM749 119h1v2h-1zM749 157h1v7h-1zM750 198h1v2h-1zM750 201h1v2h-1zM750 302h1v2h-1zM751 300h1v2h-1zM752 119h1v2h-1zM752 162h1v2h-1z"/><path fill="#0000FF" d="M320 30h1v1h-1zM336 30h1v1h-1zM321 31h1v1h-1zM335 31h1v1h-1zM322 32h1v1h-1zM334 32h1v1h-1zM320 38h17v1h-17zM322 44h1v1h-1zM334 44h1v1h-1zM321 45h1v1h-1zM335 45h1v1h-1zM320 46h1v1h-1zM336 46h1v1h-1zM744 136h1v1h-1zM746 136h1v1h-1zM748 136h1v1h-1zM750 138h1v1h-1zM750 143h1v1h-1zM749 144h1v1h-1zM751 144h1v1h-1zM750 176h2v1h-2zM744 177h1v1h-1zM748 177h2v1h-2zM435 179h5v1h-5zM750 179h2v1h-2zM434 180h1v1h-1zM440 180h2v1h-2zM433 181h1v1h-1zM442 181h1v1h-1zM434 182h1v1h-1zM443 182h1v1h-1zM435 183h1v1h-1zM751 184h1v1h-1zM435 191h1v1h-1zM434 192h1v1h-1zM443 192h1v1h-1zM433 193h1v1h-1zM442 193h1v1h-1zM434 194h1v1h-1zM440 194h2v1h-2zM435 195h5v1h-5zM416 206h1v1h-1zM745 216h1v1h-1zM751 216h1v1h-1zM746 217h1v1h-1zM750 217h1v1h-1zM747 218h3v1h-3zM746 219h1v1h-1zM750 219h1v1h-1zM746 223h1v1h-1zM750 223h1v1h-1zM747 224h3v1h-3zM746 246h3v1h-3zM745 247h1v1h-1zM749 247h2v1h-2zM746 248h1v1h-1zM746 252h1v1h-1zM745 253h1v1h-1zM749 253h2v1h-2zM746 254h3v1h-3zM744 317h1v1h-1zM747 317h1v1h-1zM749 317h1v1h-1zM752 317h1v1h-1zM746 319h1v1h-1zM750 319h1v1h-1zM747 320h1v1h-1zM749 320h1v1h-1zM746 322h2v1h-2zM749 322h2v1h-2zM748 326h1v1h-1zM747 327h1v1h-1zM749 327h1v1h-1zM748 328h1v1h-1zM746 329h1v1h-1zM750 329h1v1h-1zM747 330h1v1h-1zM749 330h1v1h-1zM746 332h5v1h-5zM442 343h1v1h-1zM464 345h1v1h-1zM466 345h1v1h-1zM469 345h2v1h-2zM472 345h2v1h-2zM476 345h1v1h-1zM478 345h1v1h-1zM467 350h2v1h-2zM474 350h2v1h-2zM469 351h2v1h-2zM472 351h2v1h-2zM467 355h4v1h-4zM472 355h4v1h-4zM56 396h5v1h-5zM53 397h3v1h-3zM61 397h1v1h-1zM52 398h1v1h-1zM62 398h3v1h-3zM51 399h1v1h-1zM61 399h1v1h-1zM65 399h1v1h-1zM50 400h1v1h-1zM52 402h3v1h-3zM51 403h1v1h-1zM55 403h1v1h-1zM61 403h1v1h-1zM65 403h1v1h-1zM62 404h3v1h-3zM66 406h1v1h-1zM51 407h1v1h-1zM55 407h1v1h-1zM65 407h1v1h-1zM52 408h3v1h-3zM64 408h1v1h-1zM55 409h1v1h-1zM61 409h3v1h-3zM56 410h5v1h-5zM330 445h1v1h-1zM502 447h1v1h-1zM506 447h1v1h-1zM510 447h1v1h-1zM503 448h1v1h-1zM505 448h1v1h-1zM507 448h1v1h-1zM509 448h1v1h-1zM511 448h1v1h-1zM516 459h1v1h-1zM518 459h1v1h-1zM513 462h1v1h-1zM516 462h1v1h-1zM514 463h2v1h-2zM335 467h3v1h-3zM335 471h3v1h-3zM332 474h2v1h-2zM339 474h2v1h-2zM334 475h2v1h-2zM337 475h2v1h-2zM332 479h9v1h-9zM50 404h1v3h-1zM56 404h1v3h-1zM60 400h1v3h-1zM66 400h1v3h-1zM323 33h1v2h-1zM323 42h1v2h-1zM324 35h1v3h-1zM324 39h1v3h-1zM330 467h1v5h-1zM331 472h1v2h-1zM332 35h1v3h-1zM332 39h1v3h-1zM333 33h1v2h-1zM333 42h1v2h-1zM334 468h1v3h-1zM336 475h1v4h-1zM336 480h1v4h-1zM338 468h1v3h-1zM341 472h1v2h-1zM342 467h1v5h-1zM436 184h1v2h-1zM436 189h1v2h-1zM437 186h1v3h-1zM444 183h1v2h-1zM444 190h1v2h-1zM445 185h1v5h-1zM465 343h1v5h-1zM466 348h1v2h-1zM471 343h1v17h-1zM476 348h1v2h-1zM477 343h1v5h-1zM504 449h1v13h-1zM508 449h1v13h-1zM512 449h1v13h-1zM517 458h1v4h-1zM745 137h1v7h-1zM745 176h1v5h-1zM745 220h1v3h-1zM745 316h1v3h-1zM745 326h1v3h-1zM746 181h1v3h-1zM747 137h1v7h-1zM747 178h1v3h-1zM747 249h1v3h-1zM748 176h1v1h-1zM748 316h1v9h-1zM748 330h1v2h-1zM748 333h1v2h-1zM749 137h1v6h-1zM749 178h1v1h-1zM750 248h1v1h-1zM750 252h1v1h-1zM751 137h1v6h-1zM751 180h1v1h-1zM751 220h1v3h-1zM751 249h1v3h-1zM751 316h1v3h-1zM751 326h1v3h-1zM752 177h1v2h-1zM752 181h1v3h-1z"/><path fill="#00FFFF" d="M412 213h1v1h-1zM412 216h1v1h-1zM413 219h1v1h-1zM413 222h1v1h-1zM414 225h1v1h-1zM414 228h1v1h-1zM415 231h1v1h-1zM416 234h1v1h-1zM416 237h1v1h-1zM417 240h1v1h-1zM417 243h1v1h-1zM418 246h1v1h-1zM418 249h1v1h-1zM419 252h1v1h-1zM420 255h1v1h-1zM420 258h1v1h-1zM421 261h1v1h-1zM421 264h1v1h-1zM422 267h1v1h-1zM422 270h1v1h-1zM423 273h1v1h-1zM424 276h1v1h-1zM424 279h1v1h-1zM425 282h1v1h-1zM425 285h1v1h-1zM426 288h1v1h-1zM426 291h1v1h-1zM427 294h1v1h-1zM428 297h1v1h-1zM428 300h1v1h-1zM429 303h1v1h-1zM429 306h1v1h-1zM430 309h1v1h-1zM430 312h1v1h-1zM431 315h1v1h-1zM432 318h1v1h-1zM432 321h1v1h-1zM441 323h1v1h-1zM433 324h1v1h-1zM439 325h1v1h-1zM433 327h1v1h-1zM438 327h1v1h-1zM436 329h1v1h-1zM434 330h1v1h-1zM435 331h1v1h-1zM433 333h2v1h-2zM432 335h1v1h-1zM435 336h1v1h-1zM430 337h1v1h-1zM428 339h1v1h-1zM436 339h1v1h-1zM427 341h1v1h-1zM436 341h1v1h-1zM435 342h1v1h-1zM425 343h1v1h-1zM434 343h1v1h-1zM433 344h1v1h-1zM424 345h1v1h-1zM432 345h1v1h-1zM430 346h2v1h-2zM422 347h1v1h-1zM429 347h1v1h-1zM428 348h1v1h-1zM421 349h1v1h-1zM427 349h1v1h-1zM426 350h1v1h-1zM419 351h1v1h-1zM425 351h1v1h-1zM424 352h1v1h-1zM417 353h1v1h-1zM423 353h1v1h-1zM422 354h1v1h-1zM416 355h1v1h-1zM421 355h1v1h-1zM420 356h1v1h-1zM414 357h1v1h-1zM418 357h2v1h-2zM417 358h1v1h-1zM413 359h1v1h-1zM416 359h1v1h-1zM415 360h1v1h-1zM411 361h1v1h-1zM414 361h1v1h-1zM413 362h1v1h-1zM410 363h1v1h-1zM412 363h1v1h-1zM411 364h1v1h-1zM408 365h1v1h-1zM410 365h1v1h-1zM409 366h1v1h-1zM408 367h1v1h-1zM406 368h2v1h-2zM405 369h1v1h-1zM404 370h1v1h-1zM403 371h1v1h-1zM401 373h2v1h-2zM399 375h2v1h-2zM397 377h2v1h-2zM396 378h1v1h-1zM394 379h2v1h-2zM397 379h1v1h-1zM393 380h1v1h-1zM392 381h1v1h-1zM395 381h1v1h-1zM391 382h1v1h-1zM390 383h1v1h-1zM394 383h1v1h-1zM389 384h1v1h-1zM388 385h1v1h-1zM392 385h1v1h-1zM387 386h1v1h-1zM386 387h1v1h-1zM391 387h1v1h-1zM385 388h1v1h-1zM384 389h1v1h-1zM389 389h1v1h-1zM382 390h2v1h-2zM381 391h1v1h-1zM387 391h1v1h-1zM380 392h1v1h-1zM379 393h1v1h-1zM386 393h1v1h-1zM378 394h1v1h-1zM377 395h1v1h-1zM384 395h1v1h-1zM376 396h1v1h-1zM375 397h1v1h-1zM383 397h1v1h-1zM374 398h1v1h-1zM373 399h1v1h-1zM381 399h1v1h-1zM372 400h1v1h-1zM370 401h2v1h-2zM380 401h1v1h-1zM369 402h1v1h-1zM368 403h1v1h-1zM378 403h1v1h-1zM367 404h1v1h-1zM366 405h1v1h-1zM376 405h1v1h-1zM365 406h1v1h-1zM364 407h1v1h-1zM375 407h1v1h-1zM363 408h1v1h-1zM362 409h1v1h-1zM373 409h1v1h-1zM361 410h1v1h-1zM360 411h1v1h-1zM372 411h1v1h-1zM358 412h2v1h-2zM357 413h1v1h-1zM370 413h1v1h-1zM356 414h1v1h-1zM369 415h1v1h-1zM354 416h1v1h-1zM353 417h1v1h-1zM367 417h1v1h-1zM352 418h1v1h-1zM351 419h1v1h-1zM365 419h1v1h-1zM350 420h1v1h-1zM349 421h1v1h-1zM364 421h1v1h-1zM348 422h1v1h-1zM346 423h2v1h-2zM362 423h1v1h-1zM345 424h1v1h-1zM344 425h1v1h-1zM361 425h1v1h-1zM343 426h1v1h-1zM342 427h1v1h-1zM359 427h1v1h-1zM341 428h1v1h-1zM340 429h1v1h-1zM358 429h1v1h-1zM339 430h1v1h-1zM338 431h1v1h-1zM356 431h1v1h-1zM337 432h1v1h-1zM336 433h1v1h-1zM334 434h2v1h-2zM333 435h1v1h-1zM332 436h1v1h-1zM331 437h1v1h-1zM330 438h1v1h-1zM398 376h1v1h-1zM400 374h1v1h-1zM402 372h1v1h-1zM406 367h1v1h-1z"/><path fill="#007F7F" d="M455 206h5v1h-5zM454 207h1v1h-1zM460 207h1v1h-1zM453 208h1v1h-1zM461 208h1v1h-1zM452 209h1v1h-1zM462 209h1v1h-1zM452 215h1v1h-1zM462 215h1v1h-1zM451 218h2v1h-2zM462 218h2v1h-2zM450 219h1v1h-1zM464 219h1v1h-1zM449 220h1v1h-1zM465 220h1v1h-1zM450 221h1v1h-1zM452 221h1v1h-1zM462 221h1v1h-1zM464 221h1v1h-1zM451 222h1v1h-1zM463 222h1v1h-1zM431 228h1v1h-1zM747 336h3v1h-3zM746 337h1v1h-1zM750 337h1v1h-1zM745 342h1v1h-1zM751 342h1v1h-1zM744 343h1v1h-1zM752 343h1v1h-1zM745 344h1v1h-1zM751 344h1v1h-1zM451 210h1v5h-1zM453 216h1v5h-1zM461 216h1v5h-1zM463 210h1v5h-1zM745 338h1v3h-1zM746 341h1v3h-1zM750 341h1v3h-1zM751 338h1v3h-1z"/><text class="hn" transform="translate(94.5 347) scale(0.8 1)" fill="#FF0000" stroke="#FF0000">1</text><text class="hn" transform="translate(130.5 428) scale(0.8 1)" fill="#FFFF00" stroke="#FFFF00">2</text><text class="hn" transform="translate(203.5 490) scale(0.8 1)" fill="#00FF00" stroke="#00FF00">3</text><text class="hn" transform="translate(310.5 513) scale(0.8 1)" fill="#0000FF" stroke="#0000FF">4</text><text class="hn" transform="translate(428.5 470) scale(0.8 1)" fill="#FF0000" stroke="#FF0000">5</text><text class="hn" transform="translate(500.5 365) scale(0.8 1)" fill="#FFFF00" stroke="#FFFF00">6</text><text class="hn" transform="translate(504.5 261) scale(0.8 1)" fill="#00FF00" stroke="#00FF00">7</text><text class="hn" transform="translate(468.5 180) scale(0.8 1)" fill="#0000FF" stroke="#0000FF">8</text><text class="hn" transform="translate(395.5 118) scale(0.8 1)" fill="#FF0000" stroke="#FF0000">9</text><text class="hn" transform="translate(289.4 95) scale(0.8 1)" letter-spacing="2.2" fill="#FFFF00" stroke="#FFFF00">10</text><text class="hn" transform="translate(171.4 138) scale(0.8 1)" letter-spacing="2.2" fill="#00FF00" stroke="#00FF00">11</text><text class="hn" transform="translate(99.4 243) scale(0.8 1)" letter-spacing="2.2" fill="#0000FF" stroke="#0000FF">12</text><text class="ob" transform="translate(340.5 133) scale(0.5 1)" x="0" y="0" fill="#FFFF00" stroke="#FFFF00">MC</text><text class="ob" transform="translate(120 311) scale(0.48 1)" x="0" y="0" fill="#FF0000" stroke="#FF0000">A<tspan font-size="20">sc</tspan></text></svg>
<pre id="side"><span style="color:#FFFFFF">Astrolog 5.40</span>
&quot;He&quot;
Sun November 12, 1972
 7:10pm (ST +8:00 GMT)
&quot;Taiwan&quot;
120°33E 24°05N
Placidus houses.
Tropical, Geocentric.
Julian Day = 2441633.9653

<span style="color:#FF0000"> 1st house: </span><span style="color:#00FF00">21Gem30</span>
<span style="color:#FFFF00"> 2nd house: </span><span style="color:#0000FF">15Can32</span>
<span style="color:#00FF00"> 3rd house: </span><span style="color:#FF0000">10Leo01</span>
<span style="color:#0000FF"> 4th house: </span><span style="color:#FFFF00"> 8Vir04</span>
<span style="color:#FF0000"> 5th house: </span><span style="color:#00FF00">11Lib18</span>
<span style="color:#FFFF00"> 6th house: </span><span style="color:#0000FF">17Sco26</span>
<span style="color:#00FF00"> 7th house: </span><span style="color:#FF0000">21Sag30</span>
<span style="color:#0000FF"> 8th house: </span><span style="color:#FFFF00">15Cap32</span>
<span style="color:#FF0000"> 9th house: </span><span style="color:#00FF00">10Aqu01</span>
<span style="color:#FFFF00">10th house: </span><span style="color:#0000FF"> 8Pis04</span>
<span style="color:#00FF00">11th house: </span><span style="color:#FF0000">11Ari18</span>
<span style="color:#0000FF">12th house: </span><span style="color:#FFFF00">17Tau26</span>

<span style="color:#FF0000"> Sun: </span><span style="color:#0000FF">20Sco10</span><span style="color:#FFFFFF"> </span> - 0°00'
<span style="color:#0000FF">Moon: </span><span style="color:#00FF00"> 0Aqu02</span><span style="color:#FFFFFF"> </span> + 1°02'
<span style="color:#00FF00">Merc: </span><span style="color:#FF0000">11Sag39</span><span style="color:#FFFFFF"> </span> - 2°31'
<span style="color:#00FF00">Venu: </span><span style="color:#00FF00">15Lib12</span><span style="color:#FFFFFF"> </span> + 1°47'
<span style="color:#FF0000">Mars: </span><span style="color:#00FF00">27Lib43</span><span style="color:#FFFFFF"> </span> + 0°42'
<span style="color:#FF0000">Jupi: </span><span style="color:#FFFF00"> 7Cap03</span><span style="color:#FFFFFF"> </span> - 0°06'
<span style="color:#FFFF00">Satu: </span><span style="color:#00FF00">19Gem09</span><span style="color:#FFFFFF">R</span> - 1°40'
<span style="color:#00FF00">Uran: </span><span style="color:#00FF00">20Lib38</span><span style="color:#FFFFFF"> </span> + 0°36'
<span style="color:#0000FF">Nept: </span><span style="color:#FF0000"> 4Sag26</span><span style="color:#FFFFFF"> </span> + 1°35'
<span style="color:#0000FF">Plut: </span><span style="color:#00FF00"> 3Lib36</span><span style="color:#FFFFFF"> </span> +16°02'
<span style="color:#007F7F">Node: </span><span style="color:#FFFF00">19Cap52</span><span style="color:#FFFFFF">R</span> + 0°00'

Fire: 2, Earth: 2,
Air : 7, Water: 2
Car: 6, Fix: 2, Mut: 5
Yang: 9, Yin: 4
M: 4, N: 7, A: 1, D: 10
Ang: 2, Suc: 5, Cad: 4
Learn: 2, Share: 11</pre>
</div></body></html>
